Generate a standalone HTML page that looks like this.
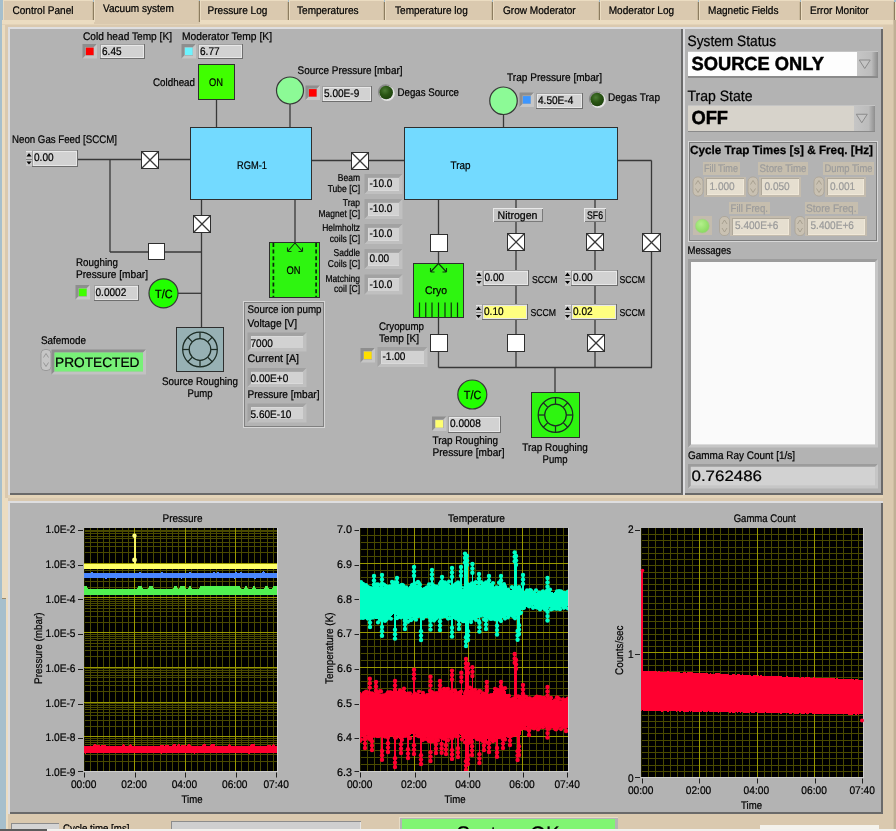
<!DOCTYPE html><html><head><meta charset="utf-8"><title>Vacuum system</title><style>html,body{margin:0;padding:0;background:#A6BFCC;overflow:hidden}svg{display:block;will-change:transform}text{font-family:'Liberation Sans','DejaVu Sans',sans-serif}</style></head><body>
<svg width="896" height="831" viewBox="0 0 896 831" shape-rendering="crispEdges" text-rendering="geometricPrecision">
<rect x="0" y="0" width="896" height="831" fill="#A6BFCC" />
<rect x="2" y="20" width="894" height="811" fill="#DAC9AF" />
<rect x="2" y="20" width="3" height="480" fill="#EBDCC1" />
<rect x="2" y="498" width="6" height="101" fill="#EBDCC1" />
<rect x="2" y="598" width="4" height="1" fill="#9A8A6C" />
<rect x="0" y="599" width="6" height="232" fill="#A6BFCC" />
<rect x="6" y="599" width="2" height="232" fill="#EBDCC1" />
<rect x="2" y="20" width="894" height="4" fill="#EBDCC1" />
<rect x="2" y="24" width="894" height="1" fill="#E2D2B7" />
<rect x="893" y="20" width="1" height="811" fill="#CFBFA4" />
<rect x="894" y="20" width="2" height="811" fill="#C0B096" />
<rect x="3" y="0" width="91" height="20" fill="#DAC9AF" />
<rect x="3" y="0" width="90" height="1" fill="#EBDCC1" />
<rect x="3" y="1" width="1" height="19" fill="#EBDCC1" />
<rect x="92" y="2" width="1" height="18" fill="#C9B99C" />
<rect x="93" y="2" width="1" height="18" fill="#8C7C60" />
<rect x="93" y="0" width="3" height="2" fill="#A6BFCC" />
<rect x="94" y="2" width="2" height="18" fill="#EBDCC1" />
<text transform="translate(12.5 13.7) scale(0.915 1)" font-size="11" stroke="#000" stroke-width="0.22" >Control Panel</text>
<rect x="94" y="0" width="106" height="24" fill="#DAC9AF" />
<rect x="94" y="0" width="1" height="22" fill="#EBDCC1" />
<rect x="198" y="1" width="1" height="21" fill="#C9B99C" />
<rect x="199" y="1" width="1" height="21" fill="#8C7C60" />
<rect x="199" y="0" width="2" height="1" fill="#A6BFCC" />
<text transform="translate(103 12.2) scale(0.915 1)" font-size="11" stroke="#000" stroke-width="0.22" >Vacuum system</text>
<rect x="200" y="0" width="89" height="20" fill="#DAC9AF" />
<rect x="200" y="0" width="88" height="1" fill="#EBDCC1" />
<rect x="200" y="1" width="1" height="19" fill="#EBDCC1" />
<rect x="287" y="2" width="1" height="18" fill="#C9B99C" />
<rect x="288" y="2" width="1" height="18" fill="#8C7C60" />
<rect x="288" y="0" width="3" height="2" fill="#A6BFCC" />
<rect x="289" y="2" width="2" height="18" fill="#EBDCC1" />
<text transform="translate(207.5 13.7) scale(0.915 1)" font-size="11" stroke="#000" stroke-width="0.22" >Pressure Log</text>
<rect x="289" y="0" width="96" height="20" fill="#DAC9AF" />
<rect x="289" y="0" width="95" height="1" fill="#EBDCC1" />
<rect x="289" y="1" width="1" height="19" fill="#EBDCC1" />
<rect x="383" y="2" width="1" height="18" fill="#C9B99C" />
<rect x="384" y="2" width="1" height="18" fill="#8C7C60" />
<rect x="384" y="0" width="3" height="2" fill="#A6BFCC" />
<rect x="385" y="2" width="2" height="18" fill="#EBDCC1" />
<text transform="translate(297 13.7) scale(0.915 1)" font-size="11" stroke="#000" stroke-width="0.22" >Temperatures</text>
<rect x="385" y="0" width="108" height="20" fill="#DAC9AF" />
<rect x="385" y="0" width="107" height="1" fill="#EBDCC1" />
<rect x="385" y="1" width="1" height="19" fill="#EBDCC1" />
<rect x="491" y="2" width="1" height="18" fill="#C9B99C" />
<rect x="492" y="2" width="1" height="18" fill="#8C7C60" />
<rect x="492" y="0" width="3" height="2" fill="#A6BFCC" />
<rect x="493" y="2" width="2" height="18" fill="#EBDCC1" />
<text transform="translate(395 13.7) scale(0.915 1)" font-size="11" stroke="#000" stroke-width="0.22" >Temperature log</text>
<rect x="493" y="0" width="107" height="20" fill="#DAC9AF" />
<rect x="493" y="0" width="106" height="1" fill="#EBDCC1" />
<rect x="493" y="1" width="1" height="19" fill="#EBDCC1" />
<rect x="598" y="2" width="1" height="18" fill="#C9B99C" />
<rect x="599" y="2" width="1" height="18" fill="#8C7C60" />
<rect x="599" y="0" width="3" height="2" fill="#A6BFCC" />
<rect x="600" y="2" width="2" height="18" fill="#EBDCC1" />
<text transform="translate(503 13.7) scale(0.915 1)" font-size="11" stroke="#000" stroke-width="0.22" >Grow Moderator</text>
<rect x="600" y="0" width="99" height="20" fill="#DAC9AF" />
<rect x="600" y="0" width="98" height="1" fill="#EBDCC1" />
<rect x="600" y="1" width="1" height="19" fill="#EBDCC1" />
<rect x="697" y="2" width="1" height="18" fill="#C9B99C" />
<rect x="698" y="2" width="1" height="18" fill="#8C7C60" />
<rect x="698" y="0" width="3" height="2" fill="#A6BFCC" />
<rect x="699" y="2" width="2" height="18" fill="#EBDCC1" />
<text transform="translate(608.7 13.7) scale(0.915 1)" font-size="11" stroke="#000" stroke-width="0.22" >Moderator Log</text>
<rect x="699" y="0" width="102" height="20" fill="#DAC9AF" />
<rect x="699" y="0" width="101" height="1" fill="#EBDCC1" />
<rect x="699" y="1" width="1" height="19" fill="#EBDCC1" />
<rect x="799" y="2" width="1" height="18" fill="#C9B99C" />
<rect x="800" y="2" width="1" height="18" fill="#8C7C60" />
<rect x="800" y="0" width="3" height="2" fill="#A6BFCC" />
<rect x="801" y="2" width="2" height="18" fill="#EBDCC1" />
<text transform="translate(708 13.7) scale(0.915 1)" font-size="11" stroke="#000" stroke-width="0.22" >Magnetic Fields</text>
<rect x="801" y="0" width="94" height="20" fill="#DAC9AF" />
<rect x="801" y="0" width="93" height="1" fill="#EBDCC1" />
<rect x="801" y="1" width="1" height="19" fill="#EBDCC1" />
<rect x="893" y="2" width="1" height="18" fill="#C9B99C" />
<rect x="894" y="2" width="1" height="18" fill="#8C7C60" />
<rect x="894" y="0" width="3" height="2" fill="#A6BFCC" />
<rect x="895" y="2" width="2" height="18" fill="#EBDCC1" />
<text transform="translate(810 13.7) scale(0.915 1)" font-size="11" stroke="#000" stroke-width="0.22" >Error Monitor</text>
<rect x="8" y="27" width="675" height="468" fill="#DEDEE0" />
<rect x="10" y="29" width="673" height="466" fill="#6A6A6A" />
<rect x="10" y="29" width="671" height="464" fill="#B3B3B3" />
<rect x="683" y="27" width="200" height="468" fill="#DEDEE0" />
<rect x="685" y="29" width="198" height="466" fill="#6A6A6A" />
<rect x="685" y="29" width="196" height="464" fill="#B3B3B3" />
<rect x="8" y="495" width="875" height="3" fill="#E4D4B8" />
<rect x="8" y="501" width="875" height="313" fill="#DEDEE0" />
<rect x="10" y="503" width="873" height="311" fill="#6A6A6A" />
<rect x="10" y="503" width="871" height="309" fill="#B3B3B3" />
<defs><radialGradient id="ledg" cx="0.4" cy="0.35" r="0.7"><stop offset="0" stop-color="#4C7C34"/><stop offset="0.5" stop-color="#2A5614"/><stop offset="1" stop-color="#1C400C"/></radialGradient><radialGradient id="ledl" cx="0.4" cy="0.35" r="0.7"><stop offset="0" stop-color="#B4F08C"/><stop offset="1" stop-color="#86D85C"/></radialGradient></defs>
<line x1="216.5" y1="100" x2="216.5" y2="127" stroke="#383838" stroke-width="1.3" shape-rendering="geometricPrecision"/>
<line x1="290" y1="104" x2="290" y2="127" stroke="#383838" stroke-width="1.3" shape-rendering="geometricPrecision"/>
<line x1="503.5" y1="114" x2="503.5" y2="127" stroke="#383838" stroke-width="1.3" shape-rendering="geometricPrecision"/>
<line x1="78" y1="159.5" x2="191" y2="159.5" stroke="#383838" stroke-width="1.3" shape-rendering="geometricPrecision"/>
<line x1="110" y1="159.5" x2="110" y2="252" stroke="#383838" stroke-width="1.3" shape-rendering="geometricPrecision"/>
<line x1="110" y1="252" x2="201.5" y2="252" stroke="#383838" stroke-width="1.3" shape-rendering="geometricPrecision"/>
<line x1="201.5" y1="199" x2="201.5" y2="327" stroke="#383838" stroke-width="1.3" shape-rendering="geometricPrecision"/>
<line x1="178" y1="293.3" x2="201.5" y2="293.3" stroke="#383838" stroke-width="1.3" shape-rendering="geometricPrecision"/>
<line x1="311" y1="160.5" x2="405" y2="160.5" stroke="#383838" stroke-width="1.3" shape-rendering="geometricPrecision"/>
<line x1="295" y1="199" x2="295" y2="243" stroke="#383838" stroke-width="1.3" shape-rendering="geometricPrecision"/>
<line x1="438.5" y1="199" x2="438.5" y2="367.5" stroke="#383838" stroke-width="1.3" shape-rendering="geometricPrecision"/>
<line x1="516" y1="199" x2="516" y2="367.5" stroke="#383838" stroke-width="1.3" shape-rendering="geometricPrecision"/>
<line x1="595" y1="199" x2="595" y2="367.5" stroke="#383838" stroke-width="1.3" shape-rendering="geometricPrecision"/>
<line x1="617" y1="160.5" x2="651.5" y2="160.5" stroke="#383838" stroke-width="1.3" shape-rendering="geometricPrecision"/>
<line x1="651.5" y1="160.5" x2="651.5" y2="367.5" stroke="#383838" stroke-width="1.3" shape-rendering="geometricPrecision"/>
<line x1="438.5" y1="367.5" x2="652" y2="367.5" stroke="#383838" stroke-width="1.3" shape-rendering="geometricPrecision"/>
<line x1="555" y1="367.5" x2="555" y2="392" stroke="#383838" stroke-width="1.3" shape-rendering="geometricPrecision"/>
<text x="83" y="40.2" font-size="11" stroke="#000" stroke-width="0.22" textLength="89" lengthAdjust="spacingAndGlyphs" >Cold head Temp [K]</text>
<polygon points="82.5,44 97,44 94,47 85.5,47 85.5,55.5 82.5,58.5" fill="#8E8E8E" shape-rendering="geometricPrecision"/>
<polygon points="97,58.5 97,44 94,47 94,55.5 85.5,55.5 82.5,58.5" fill="#C6C6C6" shape-rendering="geometricPrecision"/>
<rect x="85.5" y="47" width="8.5" height="8.5" fill="#B0B0B0" />
<rect x="85.9" y="47.6" width="7.7" height="7.5" fill="#FF0000" shape-rendering="geometricPrecision"/>
<rect x="100" y="44" width="45" height="15" fill="#6E6E6E" />
<rect x="100" y="44" width="44" height="14" fill="#A0A0A0" />
<rect x="101" y="45" width="43" height="13" fill="#E8E8E8" />
<rect x="102" y="46" width="41" height="11" fill="#D2D2D2" />
<text transform="translate(102 54.7) scale(0.915 1)" font-size="11" stroke="#000" stroke-width="0.22" >6.45</text>
<text x="182" y="40.2" font-size="11" stroke="#000" stroke-width="0.22" textLength="90" lengthAdjust="spacingAndGlyphs" >Moderator Temp [K]</text>
<polygon points="181.5,44 196,44 193,47 184.5,47 184.5,55.5 181.5,58.5" fill="#8E8E8E" shape-rendering="geometricPrecision"/>
<polygon points="196,58.5 196,44 193,47 193,55.5 184.5,55.5 181.5,58.5" fill="#C6C6C6" shape-rendering="geometricPrecision"/>
<rect x="184.5" y="47" width="8.5" height="8.5" fill="#B0B0B0" />
<rect x="184.9" y="47.6" width="7.7" height="7.5" fill="#6CF4FF" shape-rendering="geometricPrecision"/>
<rect x="198" y="44" width="45" height="15" fill="#6E6E6E" />
<rect x="198" y="44" width="44" height="14" fill="#A0A0A0" />
<rect x="199" y="45" width="43" height="13" fill="#E8E8E8" />
<rect x="200" y="46" width="41" height="11" fill="#D2D2D2" />
<text transform="translate(200 54.7) scale(0.915 1)" font-size="11" stroke="#000" stroke-width="0.22" >6.77</text>
<text x="153" y="85.7" font-size="11" stroke="#000" stroke-width="0.22" textLength="42" lengthAdjust="spacingAndGlyphs" >Coldhead</text>
<rect x="198" y="64" width="37" height="36" fill="#2E2E2E" />
<rect x="199" y="65" width="35" height="34" fill="#40FF00" />
<text x="209" y="85.7" font-size="11" stroke="#000" stroke-width="0.22" textLength="14" lengthAdjust="spacingAndGlyphs" >ON</text>
<circle cx="290" cy="90.5" r="13.5" fill="#8CFA96" stroke="#383838" stroke-width="1.2" shape-rendering="geometricPrecision"/>
<text x="297.5" y="73.7" font-size="11" stroke="#000" stroke-width="0.22" textLength="105" lengthAdjust="spacingAndGlyphs" >Source Pressure [mbar]</text>
<polygon points="305.5,85.5 320,85.5 317,88.5 308.5,88.5 308.5,97 305.5,100" fill="#8E8E8E" shape-rendering="geometricPrecision"/>
<polygon points="320,100 320,85.5 317,88.5 317,97 308.5,97 305.5,100" fill="#C6C6C6" shape-rendering="geometricPrecision"/>
<rect x="308.5" y="88.5" width="8.5" height="8.5" fill="#B0B0B0" />
<rect x="308.9" y="89.1" width="7.7" height="7.5" fill="#FF0000" shape-rendering="geometricPrecision"/>
<rect x="322" y="85.5" width="50" height="16.5" fill="#6E6E6E" />
<rect x="322" y="85.5" width="49" height="15.5" fill="#A0A0A0" />
<rect x="323" y="86.5" width="48" height="14.5" fill="#E8E8E8" />
<rect x="324" y="87.5" width="46" height="12.5" fill="#D2D2D2" />
<text transform="translate(324 96.95) scale(0.915 1)" font-size="11" stroke="#000" stroke-width="0.22" >5.00E-9</text>
<circle cx="385.6" cy="91.9" r="7.7" fill="#8A8A8A" shape-rendering="geometricPrecision"/>
<circle cx="387.1" cy="93.4" r="7.7" fill="#E4E4E4" shape-rendering="geometricPrecision"/>
<circle cx="386.2" cy="92.5" r="6.8" fill="url(#ledg)" shape-rendering="geometricPrecision"/>
<text x="397.5" y="96.2" font-size="11" stroke="#000" stroke-width="0.22" textLength="61.5" lengthAdjust="spacingAndGlyphs" >Degas Source</text>
<circle cx="503.5" cy="100.75" r="13.75" fill="#8CFA96" stroke="#383838" stroke-width="1.2" shape-rendering="geometricPrecision"/>
<text x="507" y="81.2" font-size="11" stroke="#000" stroke-width="0.22" textLength="95" lengthAdjust="spacingAndGlyphs" >Trap Pressure [mbar]</text>
<polygon points="519.5,92.5 534,92.5 531,95.5 522.5,95.5 522.5,104 519.5,107" fill="#8E8E8E" shape-rendering="geometricPrecision"/>
<polygon points="534,107 534,92.5 531,95.5 531,104 522.5,104 519.5,107" fill="#C6C6C6" shape-rendering="geometricPrecision"/>
<rect x="522.5" y="95.5" width="8.5" height="8.5" fill="#B0B0B0" />
<rect x="522.9" y="96.1" width="7.7" height="7.5" fill="#3C96FF" shape-rendering="geometricPrecision"/>
<rect x="536" y="92.5" width="46.5" height="16.5" fill="#6E6E6E" />
<rect x="536" y="92.5" width="45.5" height="15.5" fill="#A0A0A0" />
<rect x="537" y="93.5" width="44.5" height="14.5" fill="#E8E8E8" />
<rect x="538" y="94.5" width="42.5" height="12.5" fill="#D2D2D2" />
<text transform="translate(538 103.95) scale(0.915 1)" font-size="11" stroke="#000" stroke-width="0.22" >4.50E-4</text>
<circle cx="596.6" cy="98.9" r="7.7" fill="#8A8A8A" shape-rendering="geometricPrecision"/>
<circle cx="598.1" cy="100.4" r="7.7" fill="#E4E4E4" shape-rendering="geometricPrecision"/>
<circle cx="597.2" cy="99.5" r="6.8" fill="url(#ledg)" shape-rendering="geometricPrecision"/>
<text x="608" y="101.2" font-size="11" stroke="#000" stroke-width="0.22" textLength="52" lengthAdjust="spacingAndGlyphs" >Degas Trap</text>
<rect x="190" y="127" width="122" height="73" fill="#2E2E2E" />
<rect x="191" y="128" width="120" height="71" fill="#73DAFF" />
<text x="252" y="168.7" font-size="11" text-anchor="middle" stroke="#000" stroke-width="0.22" textLength="30" lengthAdjust="spacingAndGlyphs" >RGM-1</text>
<rect x="404" y="127" width="214" height="73" fill="#2E2E2E" />
<rect x="405" y="128" width="212" height="71" fill="#73DAFF" />
<text x="450.5" y="168.7" font-size="11" stroke="#000" stroke-width="0.22" textLength="20" lengthAdjust="spacingAndGlyphs" >Trap</text>
<text x="12" y="143.2" font-size="11" stroke="#000" stroke-width="0.22" textLength="105" lengthAdjust="spacingAndGlyphs" >Neon Gas Feed [SCCM]</text>
<rect x="26" y="151" width="6" height="15" fill="#C8C8C8" />
<rect x="26" y="151" width="6" height="1" fill="#E6E6E6" />
<rect x="26" y="158.5" width="6" height="1" fill="#808080" />
<path d="M26.5 156.5 L29 153 L31.5 156.5 Z M26.5 161.5 L29 164.5 L31.5 161.5 Z" fill="#000" shape-rendering="geometricPrecision"/>
<rect x="32" y="150" width="45.5" height="16.5" fill="#6E6E6E" />
<rect x="32" y="150" width="44.5" height="15.5" fill="#A0A0A0" />
<rect x="33" y="151" width="43.5" height="14.5" fill="#E8E8E8" />
<rect x="34" y="152" width="41.5" height="12.5" fill="#D2D2D2" />
<text transform="translate(34 161.45) scale(0.915 1)" font-size="11" stroke="#000" stroke-width="0.22" >0.00</text>
<rect x="141" y="151" width="18" height="18" fill="#2E2E2E" />
<rect x="142" y="152" width="16" height="16" fill="#FFFFFF" />
<line x1="142" y1="152" x2="158" y2="168" stroke="#383838" stroke-width="1.2" shape-rendering="geometricPrecision"/>
<line x1="158" y1="152" x2="142" y2="168" stroke="#383838" stroke-width="1.2" shape-rendering="geometricPrecision"/>
<rect x="193" y="215" width="18" height="18" fill="#2E2E2E" />
<rect x="194" y="216" width="16" height="16" fill="#FFFFFF" />
<line x1="194" y1="216" x2="210" y2="232" stroke="#383838" stroke-width="1.2" shape-rendering="geometricPrecision"/>
<line x1="210" y1="216" x2="194" y2="232" stroke="#383838" stroke-width="1.2" shape-rendering="geometricPrecision"/>
<rect x="148" y="243" width="17" height="17" fill="#2E2E2E" />
<rect x="149" y="244" width="15" height="15" fill="#FFFFFF" />
<rect x="351" y="152" width="18" height="18" fill="#2E2E2E" />
<rect x="352" y="153" width="16" height="16" fill="#FFFFFF" />
<line x1="352" y1="153" x2="368" y2="169" stroke="#383838" stroke-width="1.2" shape-rendering="geometricPrecision"/>
<line x1="368" y1="153" x2="352" y2="169" stroke="#383838" stroke-width="1.2" shape-rendering="geometricPrecision"/>
<text x="76" y="266.2" font-size="11" stroke="#000" stroke-width="0.22" textLength="42" lengthAdjust="spacingAndGlyphs" >Roughing</text>
<text x="76" y="278.2" font-size="11" stroke="#000" stroke-width="0.22" textLength="72" lengthAdjust="spacingAndGlyphs" >Pressure [mbar]</text>
<polygon points="75.5,285 90,285 87,288 78.5,288 78.5,296.5 75.5,299.5" fill="#8E8E8E" shape-rendering="geometricPrecision"/>
<polygon points="90,299.5 90,285 87,288 87,296.5 78.5,296.5 75.5,299.5" fill="#C6C6C6" shape-rendering="geometricPrecision"/>
<rect x="78.5" y="288" width="8.5" height="8.5" fill="#B0B0B0" />
<rect x="78.9" y="288.6" width="7.7" height="7.5" fill="#40FF00" shape-rendering="geometricPrecision"/>
<rect x="93.5" y="284.5" width="45.5" height="16" fill="#6E6E6E" />
<rect x="93.5" y="284.5" width="44.5" height="15" fill="#A0A0A0" />
<rect x="94.5" y="285.5" width="43.5" height="14" fill="#E8E8E8" />
<rect x="95.5" y="286.5" width="41.5" height="12" fill="#D2D2D2" />
<text transform="translate(95.5 295.7) scale(0.915 1)" font-size="11" stroke="#000" stroke-width="0.22" >0.0002</text>
<circle cx="163.5" cy="293.3" r="14.5" fill="#22FF00" stroke="#383838" stroke-width="1.2" shape-rendering="geometricPrecision"/>
<text x="163.8" y="298.2" font-size="12" text-anchor="middle" stroke="#000" stroke-width="0.22" textLength="17.5" lengthAdjust="spacingAndGlyphs" >T/C</text>
<text x="41" y="344.2" font-size="11" stroke="#000" stroke-width="0.22" textLength="45" lengthAdjust="spacingAndGlyphs" >Safemode</text>
<rect x="41" y="349.5" width="10" height="21" rx="4" fill="#C6C6C6" stroke="#909090" stroke-width="0.8" shape-rendering="geometricPrecision"/>
<path d="M43.5 357.5 L46 353.5 L48.5 357.5 M43.5 362.5 L46 366.5 L48.5 362.5" fill="none" stroke="#8A8A8A" stroke-width="0.8" shape-rendering="geometricPrecision"/>
<polygon points="51.5,349.5 146,349.5 143,352.5 54.5,352.5 54.5,371.5 51.5,374.5" fill="#8E8E8E" shape-rendering="geometricPrecision"/>
<polygon points="146,374.5 146,349.5 143,352.5 143,371.5 54.5,371.5 51.5,374.5" fill="#C2C2C2" shape-rendering="geometricPrecision"/>
<rect x="54.5" y="352.5" width="88.5" height="19" fill="#78F078" shape-rendering="geometricPrecision"/>
<text x="55" y="367" font-size="13.5" stroke="#000" stroke-width="0.22" textLength="84.5" lengthAdjust="spacingAndGlyphs" >PROTECTED</text>
<rect x="176" y="327" width="48" height="45" fill="#2E2E2E" />
<rect x="177" y="328" width="46" height="43" fill="#97B1B4" />
<g fill="none" stroke="#1C2C24" stroke-width="1.25" shape-rendering="geometricPrecision"><circle cx="200" cy="349.5" r="17.3"/><circle cx="200" cy="349.5" r="10.8"/>
<line x1="200.00" y1="360.30" x2="200.00" y2="366.80"/>
<line x1="192.36" y1="357.14" x2="187.77" y2="361.73"/>
<line x1="189.20" y1="349.50" x2="182.70" y2="349.50"/>
<line x1="192.36" y1="341.86" x2="187.77" y2="337.27"/>
<line x1="200.00" y1="338.70" x2="200.00" y2="332.20"/>
<line x1="207.64" y1="341.86" x2="212.23" y2="337.27"/>
<line x1="210.80" y1="349.50" x2="217.30" y2="349.50"/>
<line x1="207.64" y1="357.14" x2="212.23" y2="361.73"/>
</g>
<text x="200" y="385.2" font-size="11" text-anchor="middle" stroke="#000" stroke-width="0.22" textLength="76" lengthAdjust="spacingAndGlyphs" >Source Roughing</text>
<text x="200" y="397.2" font-size="11" text-anchor="middle" stroke="#000" stroke-width="0.22" textLength="25" lengthAdjust="spacingAndGlyphs" >Pump</text>
<rect x="269" y="242" width="51" height="56" fill="#2E2E2E" />
<rect x="270" y="243" width="49" height="54" fill="#2EF510" />
<line x1="273.4" y1="243" x2="273.4" y2="297" stroke="#0A280A" stroke-width="1.7" stroke-dasharray="4 2.6" shape-rendering="geometricPrecision"/>
<line x1="316.1" y1="243" x2="316.1" y2="297" stroke="#0A280A" stroke-width="1.7" stroke-dasharray="4 2.6" shape-rendering="geometricPrecision"/>
<path d="M295 243 L287.5 251.5 M295 243 L302.5 251.5 M287.5 251.5 l0 -4 M287.5 251.5 l4 0 M302.5 251.5 l0 -4 M302.5 251.5 l-4 0" fill="none" stroke="#103010" stroke-width="1.1" shape-rendering="geometricPrecision"/>
<text x="293.5" y="274.2" font-size="11" text-anchor="middle" stroke="#000" stroke-width="0.22" textLength="14" lengthAdjust="spacingAndGlyphs" >ON</text>
<rect x="242.5" y="300.5" width="82.5" height="127.5" fill="#D6D6D6" />
<rect x="243.5" y="301.5" width="80.5" height="125.5" fill="#808080" />
<rect x="244.5" y="302.5" width="78.5" height="123.5" fill="#B3B3B3" />
<text x="247.5" y="313.2" font-size="11" stroke="#000" stroke-width="0.22" textLength="74" lengthAdjust="spacingAndGlyphs" >Source ion pump</text>
<text x="247.5" y="326.7" font-size="11" stroke="#000" stroke-width="0.22" textLength="49.5" lengthAdjust="spacingAndGlyphs" >Voltage [V]</text>
<polygon points="247.5,332.5 306.5,332.5 303,336 251,336 251,348 247.5,351.5" fill="#A2A2A2" shape-rendering="geometricPrecision"/>
<polygon points="306.5,351.5 306.5,332.5 303,336 303,348 251,348 247.5,351.5" fill="#C0C0C0" shape-rendering="geometricPrecision"/>
<rect x="251" y="336" width="52" height="12" fill="#DADADA" />
<rect x="251.5" y="336.5" width="51" height="11" fill="#D2D2D2" />
<text transform="translate(250.5 346.6) scale(0.915 1)" font-size="11" stroke="#000" stroke-width="0.22" >7000</text>
<text x="247.5" y="362.2" font-size="11" stroke="#000" stroke-width="0.22" textLength="51.5" lengthAdjust="spacingAndGlyphs" >Current [A]</text>
<polygon points="247.5,368 306.5,368 303,371.5 251,371.5 251,383.5 247.5,387" fill="#A2A2A2" shape-rendering="geometricPrecision"/>
<polygon points="306.5,387 306.5,368 303,371.5 303,383.5 251,383.5 247.5,387" fill="#C0C0C0" shape-rendering="geometricPrecision"/>
<rect x="251" y="371.5" width="52" height="12" fill="#DADADA" />
<rect x="251.5" y="372" width="51" height="11" fill="#D2D2D2" />
<text transform="translate(250.5 382.1) scale(0.915 1)" font-size="11" stroke="#000" stroke-width="0.22" >0.00E+0</text>
<text x="247.5" y="398" font-size="11" stroke="#000" stroke-width="0.22" textLength="72" lengthAdjust="spacingAndGlyphs" >Pressure [mbar]</text>
<polygon points="247.5,403.5 306.5,403.5 303,407 251,407 251,419 247.5,422.5" fill="#A2A2A2" shape-rendering="geometricPrecision"/>
<polygon points="306.5,422.5 306.5,403.5 303,407 303,419 251,419 247.5,422.5" fill="#C0C0C0" shape-rendering="geometricPrecision"/>
<rect x="251" y="407" width="52" height="12" fill="#DADADA" />
<rect x="251.5" y="407.5" width="51" height="11" fill="#D2D2D2" />
<text transform="translate(250.5 417.6) scale(0.915 1)" font-size="11" stroke="#000" stroke-width="0.22" >5.60E-10</text>
<text transform="translate(360 181.2) scale(0.85 1)" font-size="10" text-anchor="end" stroke="#000" stroke-width="0.22" >Beam</text>
<text transform="translate(360 191.7) scale(0.85 1)" font-size="10" text-anchor="end" stroke="#000" stroke-width="0.22" >Tube [C]</text>
<polygon points="364.5,174 402.5,174 399,177.5 368,177.5 368,190.5 364.5,194" fill="#A2A2A2" shape-rendering="geometricPrecision"/>
<polygon points="402.5,194 402.5,174 399,177.5 399,190.5 368,190.5 364.5,194" fill="#C0C0C0" shape-rendering="geometricPrecision"/>
<rect x="368" y="177.5" width="31" height="13" fill="#DADADA" />
<rect x="368.5" y="178" width="30" height="12" fill="#D2D2D2" />
<text transform="translate(369.5 187.2) scale(0.915 1)" font-size="11" stroke="#000" stroke-width="0.22" >-10.0</text>
<text transform="translate(360 206.2) scale(0.85 1)" font-size="10" text-anchor="end" stroke="#000" stroke-width="0.22" >Trap</text>
<text transform="translate(360 216.7) scale(0.85 1)" font-size="10" text-anchor="end" stroke="#000" stroke-width="0.22" >Magnet [C]</text>
<polygon points="364.5,199 402.5,199 399,202.5 368,202.5 368,215.5 364.5,219" fill="#A2A2A2" shape-rendering="geometricPrecision"/>
<polygon points="402.5,219 402.5,199 399,202.5 399,215.5 368,215.5 364.5,219" fill="#C0C0C0" shape-rendering="geometricPrecision"/>
<rect x="368" y="202.5" width="31" height="13" fill="#DADADA" />
<rect x="368.5" y="203" width="30" height="12" fill="#D2D2D2" />
<text transform="translate(369.5 212.2) scale(0.915 1)" font-size="11" stroke="#000" stroke-width="0.22" >-10.0</text>
<text transform="translate(360 231.2) scale(0.85 1)" font-size="10" text-anchor="end" stroke="#000" stroke-width="0.22" >Helmholtz</text>
<text transform="translate(360 241.7) scale(0.85 1)" font-size="10" text-anchor="end" stroke="#000" stroke-width="0.22" >coils [C]</text>
<polygon points="364.5,224 402.5,224 399,227.5 368,227.5 368,240.5 364.5,244" fill="#A2A2A2" shape-rendering="geometricPrecision"/>
<polygon points="402.5,244 402.5,224 399,227.5 399,240.5 368,240.5 364.5,244" fill="#C0C0C0" shape-rendering="geometricPrecision"/>
<rect x="368" y="227.5" width="31" height="13" fill="#DADADA" />
<rect x="368.5" y="228" width="30" height="12" fill="#D2D2D2" />
<text transform="translate(369.5 237.2) scale(0.915 1)" font-size="11" stroke="#000" stroke-width="0.22" >-10.0</text>
<text transform="translate(360 256.2) scale(0.85 1)" font-size="10" text-anchor="end" stroke="#000" stroke-width="0.22" >Saddle</text>
<text transform="translate(360 266.7) scale(0.85 1)" font-size="10" text-anchor="end" stroke="#000" stroke-width="0.22" >Coils [C]</text>
<polygon points="364.5,249 402.5,249 399,252.5 368,252.5 368,265.5 364.5,269" fill="#A2A2A2" shape-rendering="geometricPrecision"/>
<polygon points="402.5,269 402.5,249 399,252.5 399,265.5 368,265.5 364.5,269" fill="#C0C0C0" shape-rendering="geometricPrecision"/>
<rect x="368" y="252.5" width="31" height="13" fill="#DADADA" />
<rect x="368.5" y="253" width="30" height="12" fill="#D2D2D2" />
<text transform="translate(369.5 262.2) scale(0.915 1)" font-size="11" stroke="#000" stroke-width="0.22" >0.00</text>
<text transform="translate(360 281.7) scale(0.85 1)" font-size="10" text-anchor="end" stroke="#000" stroke-width="0.22" >Matching</text>
<text transform="translate(360 292.2) scale(0.85 1)" font-size="10" text-anchor="end" stroke="#000" stroke-width="0.22" >coil [C]</text>
<polygon points="364.5,274.5 402.5,274.5 399,278 368,278 368,291 364.5,294.5" fill="#A2A2A2" shape-rendering="geometricPrecision"/>
<polygon points="402.5,294.5 402.5,274.5 399,278 399,291 368,291 364.5,294.5" fill="#C0C0C0" shape-rendering="geometricPrecision"/>
<rect x="368" y="278" width="31" height="13" fill="#DADADA" />
<rect x="368.5" y="278.5" width="30" height="12" fill="#D2D2D2" />
<text transform="translate(369.5 287.7) scale(0.915 1)" font-size="11" stroke="#000" stroke-width="0.22" >-10.0</text>
<rect x="430" y="234" width="18" height="18" fill="#2E2E2E" />
<rect x="431" y="235" width="16" height="16" fill="#FFFFFF" />
<rect x="413" y="263" width="51" height="55" fill="#2E2E2E" />
<rect x="414" y="264" width="49" height="53" fill="#2EF510" />
<line x1="419.5" y1="302.5" x2="419.5" y2="317" stroke="#103010" stroke-width="1.2" shape-rendering="geometricPrecision"/>
<line x1="425.75" y1="302.5" x2="425.75" y2="317" stroke="#103010" stroke-width="1.2" shape-rendering="geometricPrecision"/>
<line x1="432" y1="302.5" x2="432" y2="317" stroke="#103010" stroke-width="1.2" shape-rendering="geometricPrecision"/>
<line x1="438.5" y1="302.5" x2="438.5" y2="317" stroke="#103010" stroke-width="1.2" shape-rendering="geometricPrecision"/>
<line x1="445" y1="302.5" x2="445" y2="317" stroke="#103010" stroke-width="1.2" shape-rendering="geometricPrecision"/>
<line x1="451.25" y1="302.5" x2="451.25" y2="317" stroke="#103010" stroke-width="1.2" shape-rendering="geometricPrecision"/>
<line x1="457.5" y1="302.5" x2="457.5" y2="317" stroke="#103010" stroke-width="1.2" shape-rendering="geometricPrecision"/>
<path d="M438.5 263.5 L430.5 272 M438.5 263.5 L446.5 272 M430.5 272 l0 -4 M430.5 272 l4 0 M446.5 272 l0 -4 M446.5 272 l-4 0" fill="none" stroke="#103010" stroke-width="1.1" shape-rendering="geometricPrecision"/>
<text x="436" y="294.2" font-size="11" text-anchor="middle" stroke="#000" stroke-width="0.22" textLength="22" lengthAdjust="spacingAndGlyphs" >Cryo</text>
<rect x="430" y="334" width="18" height="18" fill="#2E2E2E" />
<rect x="431" y="335" width="16" height="16" fill="#FFFFFF" />
<rect x="507" y="334" width="18" height="18" fill="#2E2E2E" />
<rect x="508" y="335" width="16" height="16" fill="#FFFFFF" />
<rect x="587" y="334" width="18" height="18" fill="#2E2E2E" />
<rect x="588" y="335" width="16" height="16" fill="#FFFFFF" />
<line x1="588" y1="335" x2="604" y2="351" stroke="#383838" stroke-width="1.2" shape-rendering="geometricPrecision"/>
<line x1="604" y1="335" x2="588" y2="351" stroke="#383838" stroke-width="1.2" shape-rendering="geometricPrecision"/>
<rect x="507" y="233" width="18" height="18" fill="#2E2E2E" />
<rect x="508" y="234" width="16" height="16" fill="#FFFFFF" />
<line x1="508" y1="234" x2="524" y2="250" stroke="#383838" stroke-width="1.2" shape-rendering="geometricPrecision"/>
<line x1="524" y1="234" x2="508" y2="250" stroke="#383838" stroke-width="1.2" shape-rendering="geometricPrecision"/>
<rect x="586" y="233" width="18" height="18" fill="#2E2E2E" />
<rect x="587" y="234" width="16" height="16" fill="#FFFFFF" />
<line x1="587" y1="234" x2="603" y2="250" stroke="#383838" stroke-width="1.2" shape-rendering="geometricPrecision"/>
<line x1="603" y1="234" x2="587" y2="250" stroke="#383838" stroke-width="1.2" shape-rendering="geometricPrecision"/>
<rect x="642" y="233" width="19" height="19" fill="#2E2E2E" />
<rect x="643" y="234" width="17" height="17" fill="#FFFFFF" />
<line x1="643" y1="234" x2="660" y2="251" stroke="#383838" stroke-width="1.2" shape-rendering="geometricPrecision"/>
<line x1="660" y1="234" x2="643" y2="251" stroke="#383838" stroke-width="1.2" shape-rendering="geometricPrecision"/>
<rect x="493" y="208" width="49.5" height="14" fill="#E8E8E8" />
<rect x="494" y="209" width="48.5" height="13" fill="#7A7A7A" />
<rect x="494" y="209" width="47.5" height="12" fill="#C4C4C4" />
<text x="517.5" y="219.2" font-size="11" text-anchor="middle" stroke="#000" stroke-width="0.22" textLength="40" lengthAdjust="spacingAndGlyphs" >Nitrogen</text>
<rect x="584" y="208" width="22" height="14" fill="#E8E8E8" />
<rect x="585" y="209" width="21" height="13" fill="#7A7A7A" />
<rect x="585" y="209" width="20" height="12" fill="#C4C4C4" />
<text x="595" y="219.2" font-size="11" text-anchor="middle" stroke="#000" stroke-width="0.22" textLength="16" lengthAdjust="spacingAndGlyphs" >SF6</text>
<rect x="476" y="270.5" width="6" height="15" fill="#C8C8C8" />
<rect x="476" y="270.5" width="6" height="1" fill="#E6E6E6" />
<rect x="476" y="278" width="6" height="1" fill="#808080" />
<path d="M476.5 276.0 L479 272.5 L481.5 276.0 Z M476.5 281.0 L479 284.0 L481.5 281.0 Z" fill="#000" shape-rendering="geometricPrecision"/>
<rect x="482.5" y="269.5" width="46.5" height="16.5" fill="#6E6E6E" />
<rect x="482.5" y="269.5" width="45.5" height="15.5" fill="#A0A0A0" />
<rect x="483.5" y="270.5" width="44.5" height="14.5" fill="#E8E8E8" />
<rect x="484.5" y="271.5" width="42.5" height="12.5" fill="#D2D2D2" />
<text transform="translate(484.5 280.95) scale(0.915 1)" font-size="11" stroke="#000" stroke-width="0.22" >0.00</text>
<text x="532" y="283.2" font-size="10" stroke="#000" stroke-width="0.22" textLength="25.5" lengthAdjust="spacingAndGlyphs" >SCCM</text>
<rect x="564.5" y="270.5" width="6" height="15" fill="#C8C8C8" />
<rect x="564.5" y="270.5" width="6" height="1" fill="#E6E6E6" />
<rect x="564.5" y="278" width="6" height="1" fill="#808080" />
<path d="M565.0 276.0 L567.5 272.5 L570.0 276.0 Z M565.0 281.0 L567.5 284.0 L570.0 281.0 Z" fill="#000" shape-rendering="geometricPrecision"/>
<rect x="571" y="269.5" width="46.5" height="16.5" fill="#6E6E6E" />
<rect x="571" y="269.5" width="45.5" height="15.5" fill="#A0A0A0" />
<rect x="572" y="270.5" width="44.5" height="14.5" fill="#E8E8E8" />
<rect x="573" y="271.5" width="42.5" height="12.5" fill="#D2D2D2" />
<text transform="translate(573 280.95) scale(0.915 1)" font-size="11" stroke="#000" stroke-width="0.22" >0.00</text>
<text x="619.5" y="283.2" font-size="10" stroke="#000" stroke-width="0.22" textLength="25.5" lengthAdjust="spacingAndGlyphs" >SCCM</text>
<rect x="475.5" y="304.5" width="6" height="15" fill="#C8C8C8" />
<rect x="475.5" y="304.5" width="6" height="1" fill="#E6E6E6" />
<rect x="475.5" y="312" width="6" height="1" fill="#808080" />
<path d="M476.0 310.0 L478.5 306.5 L481.0 310.0 Z M476.0 315.0 L478.5 318.0 L481.0 315.0 Z" fill="#000" shape-rendering="geometricPrecision"/>
<rect x="482" y="303.5" width="46" height="16.5" fill="#6E6E6E" />
<rect x="482" y="303.5" width="45" height="15.5" fill="#A0A0A0" />
<rect x="483" y="304.5" width="44" height="14.5" fill="#E8E8E8" />
<rect x="484" y="305.5" width="42" height="12.5" fill="#FFFF80" />
<text transform="translate(484 314.95) scale(0.915 1)" font-size="11" stroke="#000" stroke-width="0.22" >0.10</text>
<text x="530.5" y="316.2" font-size="10" stroke="#000" stroke-width="0.22" textLength="25.5" lengthAdjust="spacingAndGlyphs" >SCCM</text>
<rect x="564.5" y="304.5" width="6" height="15" fill="#C8C8C8" />
<rect x="564.5" y="304.5" width="6" height="1" fill="#E6E6E6" />
<rect x="564.5" y="312" width="6" height="1" fill="#808080" />
<path d="M565.0 310.0 L567.5 306.5 L570.0 310.0 Z M565.0 315.0 L567.5 318.0 L570.0 315.0 Z" fill="#000" shape-rendering="geometricPrecision"/>
<rect x="571" y="303.5" width="46" height="16.5" fill="#6E6E6E" />
<rect x="571" y="303.5" width="45" height="15.5" fill="#A0A0A0" />
<rect x="572" y="304.5" width="44" height="14.5" fill="#E8E8E8" />
<rect x="573" y="305.5" width="42" height="12.5" fill="#FFFF80" />
<text transform="translate(573 314.95) scale(0.915 1)" font-size="11" stroke="#000" stroke-width="0.22" >0.02</text>
<text x="619.5" y="316.2" font-size="10" stroke="#000" stroke-width="0.22" textLength="25.5" lengthAdjust="spacingAndGlyphs" >SCCM</text>
<text x="379" y="330.2" font-size="11" stroke="#000" stroke-width="0.22" textLength="45" lengthAdjust="spacingAndGlyphs" >Cryopump</text>
<text x="379" y="342.2" font-size="11" stroke="#000" stroke-width="0.22" textLength="40" lengthAdjust="spacingAndGlyphs" >Temp [K]</text>
<polygon points="360.5,348 375,348 372,351 363.5,351 363.5,359.5 360.5,362.5" fill="#8E8E8E" shape-rendering="geometricPrecision"/>
<polygon points="375,362.5 375,348 372,351 372,359.5 363.5,359.5 360.5,362.5" fill="#C6C6C6" shape-rendering="geometricPrecision"/>
<rect x="363.5" y="351" width="8.5" height="8.5" fill="#B0B0B0" />
<rect x="363.9" y="351.6" width="7.7" height="7.5" fill="#FFE000" shape-rendering="geometricPrecision"/>
<polygon points="377.5,347 427.5,347 424,350.5 381,350.5 381,363.5 377.5,367" fill="#A2A2A2" shape-rendering="geometricPrecision"/>
<polygon points="427.5,367 427.5,347 424,350.5 424,363.5 381,363.5 377.5,367" fill="#C0C0C0" shape-rendering="geometricPrecision"/>
<rect x="381" y="350.5" width="43" height="13" fill="#DADADA" />
<rect x="381.5" y="351" width="42" height="12" fill="#D2D2D2" />
<text transform="translate(382.5 360.2) scale(0.915 1)" font-size="11" stroke="#000" stroke-width="0.22" >-1.00</text>
<circle cx="472.3" cy="394.5" r="14.5" fill="#22FF00" stroke="#383838" stroke-width="1.2" shape-rendering="geometricPrecision"/>
<text x="472.6" y="399.4" font-size="12" text-anchor="middle" stroke="#000" stroke-width="0.22" textLength="17.5" lengthAdjust="spacingAndGlyphs" >T/C</text>
<polygon points="432,416.5 446.5,416.5 443.5,419.5 435,419.5 435,428 432,431" fill="#8E8E8E" shape-rendering="geometricPrecision"/>
<polygon points="446.5,431 446.5,416.5 443.5,419.5 443.5,428 435,428 432,431" fill="#C6C6C6" shape-rendering="geometricPrecision"/>
<rect x="435" y="419.5" width="8.5" height="8.5" fill="#B0B0B0" />
<rect x="435.4" y="420.1" width="7.7" height="7.5" fill="#FFFF70" shape-rendering="geometricPrecision"/>
<rect x="448" y="416" width="53" height="16.5" fill="#6E6E6E" />
<rect x="448" y="416" width="52" height="15.5" fill="#A0A0A0" />
<rect x="449" y="417" width="51" height="14.5" fill="#E8E8E8" />
<rect x="450" y="418" width="49" height="12.5" fill="#D2D2D2" />
<text transform="translate(450 427.45) scale(0.915 1)" font-size="11" stroke="#000" stroke-width="0.22" >0.0008</text>
<text x="432.5" y="443.7" font-size="11" stroke="#000" stroke-width="0.22" textLength="65.5" lengthAdjust="spacingAndGlyphs" >Trap Roughing</text>
<text x="432.5" y="455.7" font-size="11" stroke="#000" stroke-width="0.22" textLength="72" lengthAdjust="spacingAndGlyphs" >Pressure [mbar]</text>
<rect x="531" y="392" width="49" height="46" fill="#2E2E2E" />
<rect x="532" y="393" width="47" height="44" fill="#2EF510" />
<g fill="none" stroke="#1C2C24" stroke-width="1.25" shape-rendering="geometricPrecision"><circle cx="555.5" cy="415" r="17.3"/><circle cx="555.5" cy="415" r="10.8"/>
<line x1="555.50" y1="425.80" x2="555.50" y2="432.30"/>
<line x1="547.86" y1="422.64" x2="543.27" y2="427.23"/>
<line x1="544.70" y1="415.00" x2="538.20" y2="415.00"/>
<line x1="547.86" y1="407.36" x2="543.27" y2="402.77"/>
<line x1="555.50" y1="404.20" x2="555.50" y2="397.70"/>
<line x1="563.14" y1="407.36" x2="567.73" y2="402.77"/>
<line x1="566.30" y1="415.00" x2="572.80" y2="415.00"/>
<line x1="563.14" y1="422.64" x2="567.73" y2="427.23"/>
</g>
<text x="555" y="451.2" font-size="11" text-anchor="middle" stroke="#000" stroke-width="0.22" textLength="65.5" lengthAdjust="spacingAndGlyphs" >Trap Roughing</text>
<text x="555" y="463.2" font-size="11" text-anchor="middle" stroke="#000" stroke-width="0.22" textLength="25" lengthAdjust="spacingAndGlyphs" >Pump</text>
<text x="687.5" y="45.7" font-size="15" stroke="#000" stroke-width="0.22" textLength="88.5" lengthAdjust="spacingAndGlyphs" >System Status</text>
<defs><linearGradient id="btn" x1="0" x2="1" y1="0" y2="0"><stop offset="0" stop-color="#C6C6C6"/><stop offset="0.7" stop-color="#BCBCBC"/><stop offset="1" stop-color="#8E8E8E"/></linearGradient></defs>
<rect x="687.5" y="50.5" width="190" height="27" fill="#8A8A8A" />
<rect x="687.5" y="50.5" width="190" height="1" fill="#C4C4C4" />
<rect x="687.5" y="51.5" width="169.5" height="24.5" fill="#FDFDFD" />
<rect x="857" y="51.5" width="20.5" height="24.5" fill="url(#btn)"/>
<path d="M859.25 60 L870.25 60 L864.75 68.5 Z" fill="#C4C4C4" stroke="#8A8A8A" stroke-width="1" shape-rendering="geometricPrecision"/>
<text x="691.5" y="70.2" font-size="19" font-weight="bold" textLength="132.5" lengthAdjust="spacingAndGlyphs" stroke="#000" stroke-width="0.5">SOURCE ONLY</text>
<text x="687.5" y="100.7" font-size="15" stroke="#000" stroke-width="0.22" textLength="65" lengthAdjust="spacingAndGlyphs" >Trap State</text>
<rect x="687.5" y="104.5" width="187.5" height="27.5" fill="#8A8A8A" />
<rect x="687.5" y="104.5" width="187.5" height="1" fill="#C4C4C4" />
<rect x="687.5" y="105.5" width="166" height="25" fill="#D7D3CB" />
<rect x="853.5" y="105.5" width="21.5" height="25" fill="url(#btn)"/>
<path d="M856.25 114.25 L867.25 114.25 L861.75 122.75 Z" fill="#C4C4C4" stroke="#8A8A8A" stroke-width="1" shape-rendering="geometricPrecision"/>
<text x="691.5" y="123.7" font-size="19" font-weight="bold" textLength="36.5" lengthAdjust="spacingAndGlyphs" stroke="#000" stroke-width="0.5">OFF</text>
<rect x="687.5" y="140.5" width="190" height="101.5" fill="#D8D8D8" />
<rect x="688.5" y="141.5" width="188" height="99.5" fill="#7C7C7C" />
<rect x="689.5" y="142.5" width="186" height="97.5" fill="#B3B3B3" />
<text x="690" y="154.2" font-size="12" font-weight="bold" textLength="183" lengthAdjust="spacingAndGlyphs" stroke="#000" stroke-width="0.25">Cycle Trap Times [s] &amp; Freq. [Hz]</text>
<rect x="702.5" y="162" width="37" height="12.5" fill="#C6BEAE" />
<text x="704" y="172" font-size="11" fill="#9C9C9C" stroke="#9C9C9C" stroke-width="0.22" textLength="34" lengthAdjust="spacingAndGlyphs" >Fill Time</text>
<rect x="758" y="162" width="50" height="12.5" fill="#C6BEAE" />
<text x="759.5" y="172" font-size="11" fill="#9C9C9C" stroke="#9C9C9C" stroke-width="0.22" textLength="47" lengthAdjust="spacingAndGlyphs" >Store Time</text>
<rect x="823" y="162" width="51" height="12.5" fill="#C6BEAE" />
<text x="824.5" y="172" font-size="11" fill="#9C9C9C" stroke="#9C9C9C" stroke-width="0.22" textLength="48" lengthAdjust="spacingAndGlyphs" >Dump Time</text>
<rect x="693" y="177" width="10" height="19" rx="4.5" fill="#C9C1B2" stroke="#AAA294" stroke-width="0.8" shape-rendering="geometricPrecision"/>
<path d="M695.5 184.5 l2.5 -4 l2.5 4 M695.5 188.5 l2.5 4 l2.5 -4" fill="none" stroke="#A09888" stroke-width="0.8" shape-rendering="geometricPrecision"/>
<rect x="704" y="176.5" width="41.5" height="20" fill="#C4BCAE" />
<rect x="706" y="178" width="37.5" height="17" fill="#AFA89A" />
<rect x="707" y="179" width="36.5" height="16" fill="#F0E8D8" />
<rect x="707" y="179" width="35.5" height="15" fill="#E6DFD0" />
<text transform="translate(709.5 189.7) scale(0.915 1)" font-size="11" fill="#9A9A9A" stroke="#9A9A9A" stroke-width="0.22" >1.000</text>
<rect x="748" y="177" width="10" height="19" rx="4.5" fill="#C9C1B2" stroke="#AAA294" stroke-width="0.8" shape-rendering="geometricPrecision"/>
<path d="M750.5 184.5 l2.5 -4 l2.5 4 M750.5 188.5 l2.5 4 l2.5 -4" fill="none" stroke="#A09888" stroke-width="0.8" shape-rendering="geometricPrecision"/>
<rect x="759" y="176.5" width="41.5" height="20" fill="#C4BCAE" />
<rect x="761" y="178" width="37.5" height="17" fill="#AFA89A" />
<rect x="762" y="179" width="36.5" height="16" fill="#F0E8D8" />
<rect x="762" y="179" width="35.5" height="15" fill="#E6DFD0" />
<text transform="translate(764.5 189.7) scale(0.915 1)" font-size="11" fill="#9A9A9A" stroke="#9A9A9A" stroke-width="0.22" >0.050</text>
<rect x="814" y="177" width="10" height="19" rx="4.5" fill="#C9C1B2" stroke="#AAA294" stroke-width="0.8" shape-rendering="geometricPrecision"/>
<path d="M816.5 184.5 l2.5 -4 l2.5 4 M816.5 188.5 l2.5 4 l2.5 -4" fill="none" stroke="#A09888" stroke-width="0.8" shape-rendering="geometricPrecision"/>
<rect x="824.5" y="176.5" width="41.5" height="20" fill="#C4BCAE" />
<rect x="826.5" y="178" width="37.5" height="17" fill="#AFA89A" />
<rect x="827.5" y="179" width="36.5" height="16" fill="#F0E8D8" />
<rect x="827.5" y="179" width="35.5" height="15" fill="#E6DFD0" />
<text transform="translate(830 189.7) scale(0.915 1)" font-size="11" fill="#9A9A9A" stroke="#9A9A9A" stroke-width="0.22" >0.001</text>
<rect x="729" y="201.5" width="40.5" height="12.5" fill="#C6BEAE" />
<text x="730.5" y="211.5" font-size="11" fill="#9C9C9C" stroke="#9C9C9C" stroke-width="0.22" textLength="37.5" lengthAdjust="spacingAndGlyphs" >Fill Freq.</text>
<rect x="804.5" y="201.5" width="53.5" height="12.5" fill="#C6BEAE" />
<text x="806" y="211.5" font-size="11" fill="#9C9C9C" stroke="#9C9C9C" stroke-width="0.22" textLength="50.5" lengthAdjust="spacingAndGlyphs" >Store Freq.</text>
<rect x="693" y="216" width="18.5" height="19" fill="#C4BCAE" />
<circle cx="702.3" cy="226" r="7" fill="url(#ledl)" stroke="#A8C890" stroke-width="0.6" shape-rendering="geometricPrecision"/>
<rect x="719.5" y="216.5" width="10" height="19" rx="4.5" fill="#C9C1B2" stroke="#AAA294" stroke-width="0.8" shape-rendering="geometricPrecision"/>
<path d="M722.0 224.0 l2.5 -4 l2.5 4 M722.0 228.0 l2.5 4 l2.5 -4" fill="none" stroke="#A09888" stroke-width="0.8" shape-rendering="geometricPrecision"/>
<rect x="729.5" y="216" width="61.5" height="20" fill="#C4BCAE" />
<rect x="731.5" y="217.5" width="57.5" height="17" fill="#AFA89A" />
<rect x="732.5" y="218.5" width="56.5" height="16" fill="#F0E8D8" />
<rect x="732.5" y="218.5" width="55.5" height="15" fill="#E6DFD0" />
<text transform="translate(735 229.2) scale(0.915 1)" font-size="11" fill="#9A9A9A" stroke="#9A9A9A" stroke-width="0.22" >5.400E+6</text>
<rect x="795" y="216.5" width="10" height="19" rx="4.5" fill="#C9C1B2" stroke="#AAA294" stroke-width="0.8" shape-rendering="geometricPrecision"/>
<path d="M797.5 224.0 l2.5 -4 l2.5 4 M797.5 228.0 l2.5 4 l2.5 -4" fill="none" stroke="#A09888" stroke-width="0.8" shape-rendering="geometricPrecision"/>
<rect x="805" y="216" width="61.5" height="20" fill="#C4BCAE" />
<rect x="807" y="217.5" width="57.5" height="17" fill="#AFA89A" />
<rect x="808" y="218.5" width="56.5" height="16" fill="#F0E8D8" />
<rect x="808" y="218.5" width="55.5" height="15" fill="#E6DFD0" />
<text transform="translate(810.5 229.2) scale(0.915 1)" font-size="11" fill="#9A9A9A" stroke="#9A9A9A" stroke-width="0.22" >5.400E+6</text>
<text x="687.5" y="253.7" font-size="11" stroke="#000" stroke-width="0.22" textLength="43.5" lengthAdjust="spacingAndGlyphs" >Messages</text>
<polygon points="688,259 878,259 875,262 691,262 691,444.5 688,447.5" fill="#9C9C9C" shape-rendering="geometricPrecision"/>
<polygon points="878,447.5 878,259 875,262 875,444.5 691,444.5 688,447.5" fill="#C6C6C6" shape-rendering="geometricPrecision"/>
<rect x="691" y="262" width="184" height="182.5" fill="#FAFAFA" shape-rendering="geometricPrecision"/>
<text x="688" y="458.7" font-size="11" stroke="#000" stroke-width="0.22" textLength="107" lengthAdjust="spacingAndGlyphs" >Gamma Ray Count [1/s]</text>
<polygon points="688,464 878,464 875.2,466.8 690.8,466.8 690.8,485.7 688,488.5" fill="#9C9C9C" shape-rendering="geometricPrecision"/>
<polygon points="878,488.5 878,464 875.2,466.8 875.2,485.7 690.8,485.7 688,488.5" fill="#C6C6C6" shape-rendering="geometricPrecision"/>
<rect x="690.8" y="466.8" width="184.4" height="18.9" fill="#D2D2D2" shape-rendering="geometricPrecision"/>
<text x="691.5" y="481.2" font-size="15" stroke="#000" stroke-width="0.22" textLength="70.5" lengthAdjust="spacingAndGlyphs" >0.762486</text>
<rect x="84" y="528" width="194" height="244" fill="#CDCDCD" />
<rect x="84" y="528" width="193" height="243" fill="#000" />
<g stroke="#4A4A00" stroke-width="1">
<line x1="90.5" y1="528" x2="90.5" y2="771"/>
<line x1="97.5" y1="528" x2="97.5" y2="771"/>
<line x1="103.5" y1="528" x2="103.5" y2="771"/>
<line x1="109.5" y1="528" x2="109.5" y2="771"/>
<line x1="115.5" y1="528" x2="115.5" y2="771"/>
<line x1="122.5" y1="528" x2="122.5" y2="771"/>
<line x1="128.5" y1="528" x2="128.5" y2="771"/>
<line x1="141.5" y1="528" x2="141.5" y2="771"/>
<line x1="147.5" y1="528" x2="147.5" y2="771"/>
<line x1="153.5" y1="528" x2="153.5" y2="771"/>
<line x1="160.5" y1="528" x2="160.5" y2="771"/>
<line x1="166.5" y1="528" x2="166.5" y2="771"/>
<line x1="172.5" y1="528" x2="172.5" y2="771"/>
<line x1="178.5" y1="528" x2="178.5" y2="771"/>
<line x1="191.5" y1="528" x2="191.5" y2="771"/>
<line x1="197.5" y1="528" x2="197.5" y2="771"/>
<line x1="204.5" y1="528" x2="204.5" y2="771"/>
<line x1="210.5" y1="528" x2="210.5" y2="771"/>
<line x1="216.5" y1="528" x2="216.5" y2="771"/>
<line x1="222.5" y1="528" x2="222.5" y2="771"/>
<line x1="229.5" y1="528" x2="229.5" y2="771"/>
<line x1="241.5" y1="528" x2="241.5" y2="771"/>
<line x1="248.5" y1="528" x2="248.5" y2="771"/>
<line x1="254.5" y1="528" x2="254.5" y2="771"/>
<line x1="260.5" y1="528" x2="260.5" y2="771"/>
<line x1="267.5" y1="528" x2="267.5" y2="771"/>
<line x1="273.5" y1="528" x2="273.5" y2="771"/>
<line x1="84" y1="552.5" x2="277" y2="552.5"/>
<line x1="84" y1="546.5" x2="277" y2="546.5"/>
<line x1="84" y1="542.5" x2="277" y2="542.5"/>
<line x1="84" y1="538.5" x2="277" y2="538.5"/>
<line x1="84" y1="536.5" x2="277" y2="536.5"/>
<line x1="84" y1="533.5" x2="277" y2="533.5"/>
<line x1="84" y1="531.5" x2="277" y2="531.5"/>
<line x1="84" y1="530.5" x2="277" y2="530.5"/>
<line x1="84" y1="587.5" x2="277" y2="587.5"/>
<line x1="84" y1="581.5" x2="277" y2="581.5"/>
<line x1="84" y1="577.5" x2="277" y2="577.5"/>
<line x1="84" y1="573.5" x2="277" y2="573.5"/>
<line x1="84" y1="570.5" x2="277" y2="570.5"/>
<line x1="84" y1="568.5" x2="277" y2="568.5"/>
<line x1="84" y1="566.5" x2="277" y2="566.5"/>
<line x1="84" y1="564.5" x2="277" y2="564.5"/>
<line x1="84" y1="622.5" x2="277" y2="622.5"/>
<line x1="84" y1="616.5" x2="277" y2="616.5"/>
<line x1="84" y1="611.5" x2="277" y2="611.5"/>
<line x1="84" y1="608.5" x2="277" y2="608.5"/>
<line x1="84" y1="605.5" x2="277" y2="605.5"/>
<line x1="84" y1="603.5" x2="277" y2="603.5"/>
<line x1="84" y1="601.5" x2="277" y2="601.5"/>
<line x1="84" y1="599.5" x2="277" y2="599.5"/>
<line x1="84" y1="656.5" x2="277" y2="656.5"/>
<line x1="84" y1="650.5" x2="277" y2="650.5"/>
<line x1="84" y1="646.5" x2="277" y2="646.5"/>
<line x1="84" y1="643.5" x2="277" y2="643.5"/>
<line x1="84" y1="640.5" x2="277" y2="640.5"/>
<line x1="84" y1="638.5" x2="277" y2="638.5"/>
<line x1="84" y1="636.5" x2="277" y2="636.5"/>
<line x1="84" y1="634.5" x2="277" y2="634.5"/>
<line x1="84" y1="691.5" x2="277" y2="691.5"/>
<line x1="84" y1="685.5" x2="277" y2="685.5"/>
<line x1="84" y1="681.5" x2="277" y2="681.5"/>
<line x1="84" y1="677.5" x2="277" y2="677.5"/>
<line x1="84" y1="675.5" x2="277" y2="675.5"/>
<line x1="84" y1="672.5" x2="277" y2="672.5"/>
<line x1="84" y1="670.5" x2="277" y2="670.5"/>
<line x1="84" y1="668.5" x2="277" y2="668.5"/>
<line x1="84" y1="726.5" x2="277" y2="726.5"/>
<line x1="84" y1="720.5" x2="277" y2="720.5"/>
<line x1="84" y1="715.5" x2="277" y2="715.5"/>
<line x1="84" y1="712.5" x2="277" y2="712.5"/>
<line x1="84" y1="709.5" x2="277" y2="709.5"/>
<line x1="84" y1="707.5" x2="277" y2="707.5"/>
<line x1="84" y1="705.5" x2="277" y2="705.5"/>
<line x1="84" y1="703.5" x2="277" y2="703.5"/>
<line x1="84" y1="761.5" x2="277" y2="761.5"/>
<line x1="84" y1="754.5" x2="277" y2="754.5"/>
<line x1="84" y1="750.5" x2="277" y2="750.5"/>
<line x1="84" y1="747.5" x2="277" y2="747.5"/>
<line x1="84" y1="744.5" x2="277" y2="744.5"/>
<line x1="84" y1="742.5" x2="277" y2="742.5"/>
<line x1="84" y1="740.5" x2="277" y2="740.5"/>
<line x1="84" y1="738.5" x2="277" y2="738.5"/>
</g>
<g stroke="#9A9A00" stroke-width="1">
<line x1="84.5" y1="528" x2="84.5" y2="771" stroke="#202000"/>
<line x1="134.5" y1="528" x2="134.5" y2="771"/>
<line x1="185.5" y1="528" x2="185.5" y2="771"/>
<line x1="235.5" y1="528" x2="235.5" y2="771"/>
<line x1="84" y1="563.5" x2="277" y2="563.5"/>
<line x1="84" y1="597.5" x2="277" y2="597.5"/>
<line x1="84" y1="632.5" x2="277" y2="632.5"/>
<line x1="84" y1="667.5" x2="277" y2="667.5"/>
<line x1="84" y1="702.5" x2="277" y2="702.5"/>
<line x1="84" y1="736.5" x2="277" y2="736.5"/>
</g>
<text x="182.5" y="522.2" font-size="11" text-anchor="middle" stroke="#000" stroke-width="0.22" textLength="40" lengthAdjust="spacingAndGlyphs" >Pressure</text>
<text x="75.5" y="533.2" font-size="11" text-anchor="end" stroke="#000" stroke-width="0.22" textLength="30" lengthAdjust="spacingAndGlyphs" >1.0E-2</text>
<line x1="78" y1="530.5" x2="83" y2="530.5" stroke="#202020" stroke-width="1" shape-rendering="geometricPrecision"/>
<text x="75.5" y="567.914" font-size="11" text-anchor="end" stroke="#000" stroke-width="0.22" textLength="30" lengthAdjust="spacingAndGlyphs" >1.0E-3</text>
<line x1="78" y1="565.5" x2="83" y2="565.5" stroke="#202020" stroke-width="1" shape-rendering="geometricPrecision"/>
<text x="75.5" y="602.629" font-size="11" text-anchor="end" stroke="#000" stroke-width="0.22" textLength="30" lengthAdjust="spacingAndGlyphs" >1.0E-4</text>
<line x1="78" y1="599.5" x2="83" y2="599.5" stroke="#202020" stroke-width="1" shape-rendering="geometricPrecision"/>
<text x="75.5" y="637.343" font-size="11" text-anchor="end" stroke="#000" stroke-width="0.22" textLength="30" lengthAdjust="spacingAndGlyphs" >1.0E-5</text>
<line x1="78" y1="634.5" x2="83" y2="634.5" stroke="#202020" stroke-width="1" shape-rendering="geometricPrecision"/>
<text x="75.5" y="672.057" font-size="11" text-anchor="end" stroke="#000" stroke-width="0.22" textLength="30" lengthAdjust="spacingAndGlyphs" >1.0E-6</text>
<line x1="78" y1="669.5" x2="83" y2="669.5" stroke="#202020" stroke-width="1" shape-rendering="geometricPrecision"/>
<text x="75.5" y="706.771" font-size="11" text-anchor="end" stroke="#000" stroke-width="0.22" textLength="30" lengthAdjust="spacingAndGlyphs" >1.0E-7</text>
<line x1="78" y1="704.5" x2="83" y2="704.5" stroke="#202020" stroke-width="1" shape-rendering="geometricPrecision"/>
<text x="75.5" y="741.486" font-size="11" text-anchor="end" stroke="#000" stroke-width="0.22" textLength="30" lengthAdjust="spacingAndGlyphs" >1.0E-8</text>
<line x1="78" y1="738.5" x2="83" y2="738.5" stroke="#202020" stroke-width="1" shape-rendering="geometricPrecision"/>
<text x="75.5" y="776.2" font-size="11" text-anchor="end" stroke="#000" stroke-width="0.22" textLength="30" lengthAdjust="spacingAndGlyphs" >1.0E-9</text>
<line x1="78" y1="771.5" x2="83" y2="771.5" stroke="#202020" stroke-width="1" shape-rendering="geometricPrecision"/>
<line x1="84.5" y1="772.5" x2="84.5" y2="777.5" stroke="#202020" stroke-width="1" shape-rendering="geometricPrecision"/>
<text x="83.7" y="788.2" font-size="11" text-anchor="middle" stroke="#000" stroke-width="0.22" textLength="25.5" lengthAdjust="spacingAndGlyphs" >00:00</text>
<line x1="135.5" y1="772.5" x2="135.5" y2="777.5" stroke="#202020" stroke-width="1" shape-rendering="geometricPrecision"/>
<text x="134.05" y="788.2" font-size="11" text-anchor="middle" stroke="#000" stroke-width="0.22" textLength="25.5" lengthAdjust="spacingAndGlyphs" >02:00</text>
<line x1="185.5" y1="772.5" x2="185.5" y2="777.5" stroke="#202020" stroke-width="1" shape-rendering="geometricPrecision"/>
<text x="184.4" y="788.2" font-size="11" text-anchor="middle" stroke="#000" stroke-width="0.22" textLength="25.5" lengthAdjust="spacingAndGlyphs" >04:00</text>
<line x1="236.5" y1="772.5" x2="236.5" y2="777.5" stroke="#202020" stroke-width="1" shape-rendering="geometricPrecision"/>
<text x="234.75" y="788.2" font-size="11" text-anchor="middle" stroke="#000" stroke-width="0.22" textLength="25.5" lengthAdjust="spacingAndGlyphs" >06:00</text>
<line x1="276.5" y1="772.5" x2="276.5" y2="777.5" stroke="#202020" stroke-width="1" shape-rendering="geometricPrecision"/>
<text x="276.2" y="788.2" font-size="11" text-anchor="middle" stroke="#000" stroke-width="0.22" textLength="25.5" lengthAdjust="spacingAndGlyphs" >07:40</text>
<text x="192" y="803.2" font-size="11" text-anchor="middle" stroke="#000" stroke-width="0.22" textLength="21" lengthAdjust="spacingAndGlyphs" >Time</text>
<text transform="translate(41.5 648.2) rotate(-90) scale(0.9 1)" font-size="11" text-anchor="middle" stroke="#000" stroke-width="0.22" >Pressure (mbar)</text>
<rect x="84" y="564.2" width="193" height="5" fill="#FFFF66" />
<rect x="133.5" y="536" width="2" height="28" fill="#F4F060" />
<circle cx="134.5" cy="535.8" r="2.2" fill="#FFFF80" stroke="none" stroke-width="0" shape-rendering="geometricPrecision"/>
<circle cx="134.5" cy="560" r="2.4" fill="#FFFF80" stroke="none" stroke-width="0" shape-rendering="geometricPrecision"/>
<polygon points="84.0,572.5 85.0,572.5 86.0,572.5 87.0,572.5 88.0,572.5 89.0,572.5 90.0,572.5 91.0,572.5 92.0,571.3 93.0,572.5 94.0,572.5 95.0,572.5 96.0,572.5 97.0,572.5 98.0,572.5 99.0,572.5 100.0,572.5 101.0,572.5 102.0,572.5 103.0,572.5 104.0,572.5 105.0,572.5 106.0,572.5 107.0,572.5 108.0,572.5 109.0,572.5 110.0,572.5 111.0,572.5 112.0,572.5 113.0,572.5 114.0,572.5 115.0,572.5 116.0,572.5 117.0,572.5 118.0,572.5 119.0,572.5 120.0,572.5 121.0,572.5 122.0,572.5 123.0,572.5 124.0,572.5 125.0,572.5 126.0,572.5 127.0,572.5 128.0,572.5 129.0,572.5 130.0,572.5 131.0,572.5 132.0,572.5 133.0,572.5 134.0,572.5 135.0,572.5 136.0,572.5 137.0,572.5 138.0,572.5 139.0,572.5 140.0,571.3 141.0,572.5 142.0,572.5 143.0,572.5 144.0,572.5 145.0,572.5 146.0,572.5 147.0,572.5 148.0,572.5 149.0,572.5 150.0,572.5 151.0,572.5 152.0,572.5 153.0,572.5 154.0,572.5 155.0,572.5 156.0,572.5 157.0,572.5 158.0,572.5 159.0,572.5 160.0,572.5 161.0,572.5 162.0,571.3 163.0,572.5 164.0,572.5 165.0,572.5 166.0,572.5 167.0,572.5 168.0,572.5 169.0,572.5 170.0,572.5 171.0,572.5 172.0,572.5 173.0,572.5 174.0,572.5 175.0,572.5 176.0,572.5 177.0,572.5 178.0,572.5 179.0,572.5 180.0,572.5 181.0,572.5 182.0,572.5 183.0,572.5 184.0,572.5 185.0,572.5 186.0,572.5 187.0,572.5 188.0,572.5 189.0,572.5 190.0,571.3 191.0,572.5 192.0,572.5 193.0,572.5 194.0,572.5 195.0,572.5 196.0,572.5 197.0,572.5 198.0,572.5 199.0,572.5 200.0,572.5 201.0,572.5 202.0,572.5 203.0,572.5 204.0,572.5 205.0,572.5 206.0,572.5 207.0,572.5 208.0,572.5 209.0,572.5 210.0,572.5 211.0,572.5 212.0,572.5 213.0,572.5 214.0,571.3 215.0,572.5 216.0,572.5 217.0,572.5 218.0,571.3 219.0,572.5 220.0,572.5 221.0,572.5 222.0,572.5 223.0,572.5 224.0,572.5 225.0,572.5 226.0,572.5 227.0,572.5 228.0,572.5 229.0,572.5 230.0,572.5 231.0,572.5 232.0,572.5 233.0,572.5 234.0,572.5 235.0,572.5 236.0,571.3 237.0,572.5 238.0,572.5 239.0,572.5 240.0,572.5 241.0,571.3 242.0,572.5 243.0,572.5 244.0,572.5 245.0,572.5 246.0,572.5 247.0,572.5 248.0,572.5 249.0,572.5 250.0,572.5 251.0,572.5 252.0,572.5 253.0,572.5 254.0,572.5 255.0,572.5 256.0,572.5 257.0,572.5 258.0,572.5 259.0,572.5 260.0,572.5 261.0,572.5 262.0,572.5 263.0,571.3 264.0,571.3 265.0,572.5 266.0,572.5 267.0,572.5 268.0,572.5 269.0,572.5 270.0,572.5 271.0,572.5 272.0,572.5 273.0,572.5 274.0,572.5 275.0,572.5 276.0,572.5 277.0,572.5 277.0,577.5 276.0,577.5 275.0,577.5 274.0,577.5 273.0,579.3 272.0,577.5 271.0,577.5 270.0,577.5 269.0,577.5 268.0,577.5 267.0,579.3 266.0,577.5 265.0,579.3 264.0,577.5 263.0,579.3 262.0,577.5 261.0,577.5 260.0,577.5 259.0,577.5 258.0,577.5 257.0,577.5 256.0,579.3 255.0,579.3 254.0,579.3 253.0,577.5 252.0,577.5 251.0,579.3 250.0,577.5 249.0,577.5 248.0,577.5 247.0,577.5 246.0,577.5 245.0,577.5 244.0,579.3 243.0,577.5 242.0,579.3 241.0,577.5 240.0,577.5 239.0,577.5 238.0,579.3 237.0,577.5 236.0,577.5 235.0,579.3 234.0,579.3 233.0,577.5 232.0,577.5 231.0,577.5 230.0,579.3 229.0,577.5 228.0,577.5 227.0,577.5 226.0,577.5 225.0,579.3 224.0,577.5 223.0,577.5 222.0,579.3 221.0,577.5 220.0,579.3 219.0,577.5 218.0,577.5 217.0,577.5 216.0,579.3 215.0,577.5 214.0,577.5 213.0,577.5 212.0,579.3 211.0,577.5 210.0,577.5 209.0,579.3 208.0,577.5 207.0,577.5 206.0,577.5 205.0,577.5 204.0,577.5 203.0,577.5 202.0,579.3 201.0,577.5 200.0,577.5 199.0,577.5 198.0,577.5 197.0,577.5 196.0,577.5 195.0,577.5 194.0,577.5 193.0,579.3 192.0,577.5 191.0,577.5 190.0,579.3 189.0,577.5 188.0,577.5 187.0,577.5 186.0,579.3 185.0,577.5 184.0,579.3 183.0,577.5 182.0,579.3 181.0,579.3 180.0,577.5 179.0,577.5 178.0,577.5 177.0,577.5 176.0,577.5 175.0,577.5 174.0,577.5 173.0,577.5 172.0,577.5 171.0,577.5 170.0,577.5 169.0,577.5 168.0,577.5 167.0,577.5 166.0,577.5 165.0,577.5 164.0,577.5 163.0,577.5 162.0,577.5 161.0,577.5 160.0,577.5 159.0,577.5 158.0,577.5 157.0,577.5 156.0,579.3 155.0,577.5 154.0,577.5 153.0,577.5 152.0,577.5 151.0,577.5 150.0,577.5 149.0,577.5 148.0,579.3 147.0,577.5 146.0,579.3 145.0,577.5 144.0,577.5 143.0,579.3 142.0,577.5 141.0,577.5 140.0,577.5 139.0,577.5 138.0,577.5 137.0,577.5 136.0,577.5 135.0,577.5 134.0,577.5 133.0,577.5 132.0,579.3 131.0,577.5 130.0,577.5 129.0,577.5 128.0,577.5 127.0,577.5 126.0,577.5 125.0,577.5 124.0,577.5 123.0,577.5 122.0,577.5 121.0,577.5 120.0,577.5 119.0,577.5 118.0,577.5 117.0,579.3 116.0,579.3 115.0,577.5 114.0,577.5 113.0,577.5 112.0,577.5 111.0,577.5 110.0,579.3 109.0,577.5 108.0,577.5 107.0,579.3 106.0,579.3 105.0,579.3 104.0,577.5 103.0,577.5 102.0,577.5 101.0,577.5 100.0,577.5 99.0,577.5 98.0,577.5 97.0,577.5 96.0,579.3 95.0,577.5 94.0,577.5 93.0,577.5 92.0,577.5 91.0,577.5 90.0,579.3 89.0,577.5 88.0,577.5 87.0,577.5 86.0,577.5 85.0,577.5 84.0,577.5" fill="#4A86FF" />
<polygon points="84.0,586.3 85.0,586.3 86.0,586.3 87.0,586.3 88.0,589.0 89.0,589.0 90.0,589.0 91.0,589.0 92.0,589.0 93.0,589.0 94.0,589.0 95.0,589.0 96.0,589.0 97.0,589.0 98.0,589.0 99.0,589.0 100.0,589.0 101.0,589.0 102.0,589.0 103.0,589.0 104.0,589.0 105.0,589.0 106.0,589.0 107.0,589.0 108.0,589.0 109.0,589.0 110.0,589.0 111.0,589.0 112.0,589.0 113.0,589.0 114.0,589.0 115.0,589.0 116.0,589.0 117.0,589.0 118.0,589.0 119.0,589.0 120.0,589.0 121.0,589.0 122.0,589.0 123.0,589.0 124.0,589.0 125.0,589.0 126.0,589.0 127.0,589.0 128.0,589.0 129.0,589.0 130.0,589.0 131.0,589.0 132.0,589.0 133.0,589.0 134.0,589.0 135.0,589.0 136.0,589.0 137.0,589.0 138.0,586.3 139.0,586.3 140.0,586.3 141.0,586.3 142.0,586.3 143.0,589.0 144.0,589.0 145.0,589.0 146.0,589.0 147.0,589.0 148.0,589.0 149.0,586.3 150.0,586.3 151.0,586.3 152.0,586.3 153.0,586.3 154.0,589.0 155.0,589.0 156.0,589.0 157.0,589.0 158.0,589.0 159.0,589.0 160.0,589.0 161.0,589.0 162.0,589.0 163.0,589.0 164.0,589.0 165.0,589.0 166.0,589.0 167.0,589.0 168.0,589.0 169.0,589.0 170.0,589.0 171.0,589.0 172.0,589.0 173.0,589.0 174.0,586.3 175.0,586.3 176.0,586.3 177.0,586.3 178.0,589.0 179.0,589.0 180.0,586.3 181.0,586.3 182.0,586.3 183.0,586.3 184.0,586.3 185.0,586.3 186.0,589.0 187.0,589.0 188.0,589.0 189.0,586.3 190.0,586.3 191.0,586.3 192.0,589.0 193.0,589.0 194.0,589.0 195.0,589.0 196.0,589.0 197.0,589.0 198.0,589.0 199.0,589.0 200.0,586.3 201.0,586.3 202.0,586.3 203.0,586.3 204.0,586.3 205.0,586.3 206.0,586.3 207.0,586.3 208.0,586.3 209.0,586.3 210.0,586.3 211.0,586.3 212.0,586.3 213.0,586.3 214.0,586.3 215.0,586.3 216.0,586.3 217.0,586.3 218.0,586.3 219.0,586.3 220.0,586.3 221.0,586.3 222.0,586.3 223.0,586.3 224.0,586.3 225.0,586.3 226.0,586.3 227.0,586.3 228.0,586.3 229.0,586.3 230.0,586.3 231.0,586.3 232.0,586.3 233.0,586.3 234.0,586.3 235.0,586.3 236.0,586.3 237.0,586.3 238.0,586.3 239.0,586.3 240.0,586.3 241.0,589.0 242.0,589.0 243.0,589.0 244.0,589.0 245.0,586.3 246.0,586.3 247.0,586.3 248.0,589.0 249.0,589.0 250.0,589.0 251.0,589.0 252.0,589.0 253.0,586.3 254.0,586.3 255.0,586.3 256.0,589.0 257.0,589.0 258.0,589.0 259.0,589.0 260.0,589.0 261.0,589.0 262.0,589.0 263.0,589.0 264.0,589.0 265.0,586.3 266.0,586.3 267.0,586.3 268.0,586.3 269.0,589.0 270.0,589.0 271.0,589.0 272.0,589.0 273.0,586.3 274.0,586.3 275.0,586.3 276.0,586.3 277.0,586.3 277.0,594.6 276.0,594.6 275.0,594.6 274.0,594.6 273.0,594.6 272.0,594.6 271.0,594.6 270.0,594.6 269.0,594.6 268.0,594.6 267.0,594.6 266.0,594.6 265.0,594.6 264.0,594.6 263.0,594.6 262.0,594.6 261.0,594.6 260.0,594.6 259.0,594.6 258.0,594.6 257.0,594.6 256.0,594.6 255.0,594.6 254.0,594.6 253.0,594.6 252.0,594.6 251.0,594.6 250.0,594.6 249.0,594.6 248.0,594.6 247.0,594.6 246.0,594.6 245.0,594.6 244.0,594.6 243.0,594.6 242.0,594.6 241.0,594.6 240.0,594.6 239.0,594.6 238.0,594.6 237.0,594.6 236.0,594.6 235.0,594.6 234.0,594.6 233.0,594.6 232.0,594.6 231.0,594.6 230.0,594.6 229.0,594.6 228.0,594.6 227.0,594.6 226.0,594.6 225.0,594.6 224.0,594.6 223.0,594.6 222.0,594.6 221.0,594.6 220.0,594.6 219.0,594.6 218.0,594.6 217.0,594.6 216.0,594.6 215.0,594.6 214.0,594.6 213.0,594.6 212.0,594.6 211.0,594.6 210.0,594.6 209.0,594.6 208.0,594.6 207.0,594.6 206.0,594.6 205.0,594.6 204.0,594.6 203.0,594.6 202.0,594.6 201.0,594.6 200.0,594.6 199.0,594.6 198.0,594.6 197.0,594.6 196.0,594.6 195.0,594.6 194.0,594.6 193.0,594.6 192.0,594.6 191.0,594.6 190.0,594.6 189.0,594.6 188.0,594.6 187.0,594.6 186.0,594.6 185.0,594.6 184.0,594.6 183.0,594.6 182.0,594.6 181.0,594.6 180.0,594.6 179.0,594.6 178.0,594.6 177.0,594.6 176.0,594.6 175.0,594.6 174.0,594.6 173.0,594.6 172.0,594.6 171.0,594.6 170.0,594.6 169.0,594.6 168.0,594.6 167.0,594.6 166.0,594.6 165.0,594.6 164.0,594.6 163.0,594.6 162.0,594.6 161.0,594.6 160.0,594.6 159.0,594.6 158.0,594.6 157.0,594.6 156.0,594.6 155.0,594.6 154.0,594.6 153.0,594.6 152.0,594.6 151.0,594.6 150.0,594.6 149.0,594.6 148.0,594.6 147.0,594.6 146.0,594.6 145.0,594.6 144.0,594.6 143.0,594.6 142.0,594.6 141.0,594.6 140.0,594.6 139.0,594.6 138.0,594.6 137.0,594.6 136.0,594.6 135.0,594.6 134.0,594.6 133.0,594.6 132.0,594.6 131.0,594.6 130.0,594.6 129.0,594.6 128.0,594.6 127.0,594.6 126.0,594.6 125.0,594.6 124.0,594.6 123.0,594.6 122.0,594.6 121.0,594.6 120.0,594.6 119.0,594.6 118.0,594.6 117.0,594.6 116.0,594.6 115.0,594.6 114.0,594.6 113.0,594.6 112.0,594.6 111.0,594.6 110.0,594.6 109.0,594.6 108.0,594.6 107.0,594.6 106.0,594.6 105.0,594.6 104.0,594.6 103.0,594.6 102.0,594.6 101.0,594.6 100.0,594.6 99.0,594.6 98.0,594.6 97.0,594.6 96.0,594.6 95.0,594.6 94.0,594.6 93.0,594.6 92.0,594.6 91.0,594.6 90.0,594.6 89.0,594.6 88.0,594.6 87.0,594.6 86.0,594.6 85.0,594.6 84.0,594.6" fill="#50F050" />
<polygon points="84.0,745.5 85.0,745.5 86.0,745.5 87.0,745.5 88.0,745.5 89.0,745.5 90.0,745.5 91.0,745.5 92.0,745.5 93.0,745.5 94.0,743.5 95.0,743.5 96.0,745.5 97.0,744.5 98.0,744.5 99.0,744.5 100.0,745.5 101.0,745.5 102.0,744.5 103.0,744.5 104.0,744.5 105.0,744.5 106.0,745.5 107.0,745.5 108.0,745.5 109.0,745.5 110.0,745.5 111.0,745.5 112.0,745.5 113.0,745.5 114.0,745.5 115.0,745.5 116.0,745.5 117.0,745.5 118.0,745.5 119.0,745.5 120.0,745.5 121.0,745.5 122.0,745.5 123.0,744.0 124.0,744.0 125.0,745.5 126.0,745.5 127.0,745.5 128.0,745.5 129.0,745.5 130.0,744.0 131.0,744.0 132.0,745.5 133.0,745.5 134.0,745.5 135.0,745.5 136.0,745.5 137.0,745.5 138.0,745.5 139.0,745.5 140.0,745.5 141.0,745.5 142.0,745.5 143.0,745.5 144.0,745.5 145.0,745.5 146.0,745.5 147.0,745.5 148.0,745.5 149.0,745.5 150.0,745.5 151.0,745.5 152.0,745.5 153.0,745.5 154.0,745.5 155.0,745.5 156.0,745.5 157.0,745.5 158.0,745.5 159.0,745.5 160.0,745.5 161.0,744.5 162.0,744.5 163.0,744.5 164.0,745.5 165.0,745.5 166.0,744.5 167.0,744.5 168.0,744.5 169.0,745.5 170.0,745.5 171.0,745.5 172.0,745.5 173.0,743.5 174.0,743.5 175.0,743.5 176.0,745.5 177.0,745.5 178.0,743.5 179.0,743.5 180.0,745.5 181.0,745.5 182.0,744.5 183.0,744.5 184.0,744.5 185.0,744.5 186.0,745.5 187.0,745.5 188.0,744.0 189.0,744.0 190.0,744.0 191.0,745.5 192.0,745.5 193.0,745.5 194.0,745.5 195.0,745.5 196.0,745.5 197.0,745.5 198.0,745.5 199.0,745.5 200.0,745.5 201.0,745.5 202.0,745.5 203.0,743.5 204.0,743.5 205.0,743.5 206.0,745.5 207.0,745.5 208.0,745.5 209.0,745.5 210.0,745.5 211.0,743.5 212.0,743.5 213.0,743.5 214.0,743.5 215.0,745.5 216.0,745.5 217.0,745.5 218.0,745.5 219.0,745.5 220.0,745.5 221.0,745.5 222.0,745.5 223.0,745.5 224.0,745.5 225.0,745.5 226.0,745.5 227.0,745.5 228.0,745.5 229.0,744.0 230.0,744.0 231.0,745.5 232.0,745.5 233.0,745.5 234.0,745.5 235.0,745.5 236.0,745.5 237.0,745.5 238.0,745.5 239.0,745.5 240.0,745.5 241.0,745.5 242.0,745.5 243.0,745.5 244.0,745.5 245.0,745.5 246.0,745.5 247.0,745.5 248.0,745.5 249.0,745.5 250.0,745.5 251.0,743.5 252.0,743.5 253.0,743.5 254.0,743.5 255.0,745.5 256.0,745.5 257.0,745.5 258.0,745.5 259.0,745.5 260.0,745.5 261.0,745.5 262.0,745.5 263.0,745.5 264.0,745.5 265.0,745.5 266.0,745.5 267.0,745.5 268.0,744.5 269.0,744.5 270.0,744.5 271.0,745.5 272.0,745.5 273.0,744.0 274.0,744.0 275.0,745.5 276.0,745.5 277.0,745.5 277.0,752.8 276.0,752.8 275.0,752.8 274.0,752.8 273.0,752.8 272.0,752.8 271.0,753.8 270.0,752.8 269.0,752.8 268.0,752.8 267.0,753.8 266.0,752.8 265.0,752.8 264.0,752.8 263.0,752.8 262.0,752.8 261.0,753.8 260.0,752.8 259.0,752.8 258.0,752.8 257.0,752.8 256.0,752.8 255.0,752.8 254.0,752.8 253.0,752.8 252.0,752.8 251.0,752.8 250.0,753.8 249.0,753.8 248.0,753.8 247.0,752.8 246.0,752.8 245.0,752.8 244.0,753.8 243.0,752.8 242.0,752.8 241.0,752.8 240.0,752.8 239.0,752.8 238.0,752.8 237.0,752.8 236.0,752.8 235.0,752.8 234.0,752.8 233.0,752.8 232.0,752.8 231.0,752.8 230.0,752.8 229.0,752.8 228.0,752.8 227.0,752.8 226.0,752.8 225.0,752.8 224.0,752.8 223.0,752.8 222.0,752.8 221.0,753.8 220.0,752.8 219.0,752.8 218.0,752.8 217.0,752.8 216.0,752.8 215.0,752.8 214.0,752.8 213.0,753.8 212.0,752.8 211.0,752.8 210.0,752.8 209.0,752.8 208.0,752.8 207.0,752.8 206.0,752.8 205.0,752.8 204.0,752.8 203.0,752.8 202.0,752.8 201.0,753.8 200.0,752.8 199.0,752.8 198.0,752.8 197.0,752.8 196.0,752.8 195.0,753.8 194.0,753.8 193.0,752.8 192.0,752.8 191.0,752.8 190.0,753.8 189.0,752.8 188.0,752.8 187.0,752.8 186.0,752.8 185.0,752.8 184.0,753.8 183.0,752.8 182.0,752.8 181.0,752.8 180.0,752.8 179.0,752.8 178.0,752.8 177.0,752.8 176.0,752.8 175.0,752.8 174.0,753.8 173.0,752.8 172.0,752.8 171.0,752.8 170.0,752.8 169.0,752.8 168.0,752.8 167.0,753.8 166.0,752.8 165.0,752.8 164.0,752.8 163.0,752.8 162.0,753.8 161.0,753.8 160.0,752.8 159.0,752.8 158.0,752.8 157.0,752.8 156.0,752.8 155.0,752.8 154.0,752.8 153.0,752.8 152.0,752.8 151.0,752.8 150.0,752.8 149.0,753.8 148.0,752.8 147.0,752.8 146.0,753.8 145.0,752.8 144.0,752.8 143.0,752.8 142.0,752.8 141.0,752.8 140.0,752.8 139.0,752.8 138.0,752.8 137.0,752.8 136.0,752.8 135.0,753.8 134.0,752.8 133.0,753.8 132.0,752.8 131.0,753.8 130.0,752.8 129.0,752.8 128.0,752.8 127.0,752.8 126.0,752.8 125.0,752.8 124.0,752.8 123.0,752.8 122.0,752.8 121.0,752.8 120.0,752.8 119.0,752.8 118.0,752.8 117.0,752.8 116.0,752.8 115.0,752.8 114.0,752.8 113.0,752.8 112.0,752.8 111.0,753.8 110.0,752.8 109.0,753.8 108.0,752.8 107.0,752.8 106.0,752.8 105.0,752.8 104.0,752.8 103.0,753.8 102.0,752.8 101.0,752.8 100.0,752.8 99.0,752.8 98.0,752.8 97.0,752.8 96.0,752.8 95.0,752.8 94.0,752.8 93.0,752.8 92.0,752.8 91.0,752.8 90.0,752.8 89.0,752.8 88.0,752.8 87.0,752.8 86.0,753.8 85.0,753.8 84.0,752.8" fill="#FF0030" />
<rect x="360" y="528" width="209" height="244" fill="#CDCDCD" />
<rect x="360" y="528" width="208" height="243" fill="#000" />
<g stroke="#4A4A00" stroke-width="1">
<line x1="367.5" y1="528" x2="367.5" y2="771"/>
<line x1="374.5" y1="528" x2="374.5" y2="771"/>
<line x1="380.5" y1="528" x2="380.5" y2="771"/>
<line x1="387.5" y1="528" x2="387.5" y2="771"/>
<line x1="394.5" y1="528" x2="394.5" y2="771"/>
<line x1="401.5" y1="528" x2="401.5" y2="771"/>
<line x1="407.5" y1="528" x2="407.5" y2="771"/>
<line x1="421.5" y1="528" x2="421.5" y2="771"/>
<line x1="428.5" y1="528" x2="428.5" y2="771"/>
<line x1="434.5" y1="528" x2="434.5" y2="771"/>
<line x1="441.5" y1="528" x2="441.5" y2="771"/>
<line x1="448.5" y1="528" x2="448.5" y2="771"/>
<line x1="455.5" y1="528" x2="455.5" y2="771"/>
<line x1="461.5" y1="528" x2="461.5" y2="771"/>
<line x1="475.5" y1="528" x2="475.5" y2="771"/>
<line x1="482.5" y1="528" x2="482.5" y2="771"/>
<line x1="488.5" y1="528" x2="488.5" y2="771"/>
<line x1="495.5" y1="528" x2="495.5" y2="771"/>
<line x1="502.5" y1="528" x2="502.5" y2="771"/>
<line x1="509.5" y1="528" x2="509.5" y2="771"/>
<line x1="516.5" y1="528" x2="516.5" y2="771"/>
<line x1="529.5" y1="528" x2="529.5" y2="771"/>
<line x1="536.5" y1="528" x2="536.5" y2="771"/>
<line x1="543.5" y1="528" x2="543.5" y2="771"/>
<line x1="549.5" y1="528" x2="549.5" y2="771"/>
<line x1="556.5" y1="528" x2="556.5" y2="771"/>
<line x1="563.5" y1="528" x2="563.5" y2="771"/>
<line x1="360" y1="535.5" x2="568" y2="535.5"/>
<line x1="360" y1="542.5" x2="568" y2="542.5"/>
<line x1="360" y1="549.5" x2="568" y2="549.5"/>
<line x1="360" y1="556.5" x2="568" y2="556.5"/>
<line x1="360" y1="570.5" x2="568" y2="570.5"/>
<line x1="360" y1="577.5" x2="568" y2="577.5"/>
<line x1="360" y1="584.5" x2="568" y2="584.5"/>
<line x1="360" y1="590.5" x2="568" y2="590.5"/>
<line x1="360" y1="604.5" x2="568" y2="604.5"/>
<line x1="360" y1="611.5" x2="568" y2="611.5"/>
<line x1="360" y1="618.5" x2="568" y2="618.5"/>
<line x1="360" y1="625.5" x2="568" y2="625.5"/>
<line x1="360" y1="639.5" x2="568" y2="639.5"/>
<line x1="360" y1="646.5" x2="568" y2="646.5"/>
<line x1="360" y1="653.5" x2="568" y2="653.5"/>
<line x1="360" y1="660.5" x2="568" y2="660.5"/>
<line x1="360" y1="674.5" x2="568" y2="674.5"/>
<line x1="360" y1="681.5" x2="568" y2="681.5"/>
<line x1="360" y1="688.5" x2="568" y2="688.5"/>
<line x1="360" y1="695.5" x2="568" y2="695.5"/>
<line x1="360" y1="709.5" x2="568" y2="709.5"/>
<line x1="360" y1="715.5" x2="568" y2="715.5"/>
<line x1="360" y1="722.5" x2="568" y2="722.5"/>
<line x1="360" y1="729.5" x2="568" y2="729.5"/>
<line x1="360" y1="743.5" x2="568" y2="743.5"/>
<line x1="360" y1="750.5" x2="568" y2="750.5"/>
<line x1="360" y1="757.5" x2="568" y2="757.5"/>
<line x1="360" y1="764.5" x2="568" y2="764.5"/>
</g>
<g stroke="#9A9A00" stroke-width="1">
<line x1="360.5" y1="528" x2="360.5" y2="771" stroke="#202000"/>
<line x1="414.5" y1="528" x2="414.5" y2="771"/>
<line x1="468.5" y1="528" x2="468.5" y2="771"/>
<line x1="522.5" y1="528" x2="522.5" y2="771"/>
<line x1="360" y1="563.5" x2="568" y2="563.5"/>
<line x1="360" y1="597.5" x2="568" y2="597.5"/>
<line x1="360" y1="632.5" x2="568" y2="632.5"/>
<line x1="360" y1="667.5" x2="568" y2="667.5"/>
<line x1="360" y1="702.5" x2="568" y2="702.5"/>
<line x1="360" y1="736.5" x2="568" y2="736.5"/>
</g>
<text x="476.5" y="521.7" font-size="11" text-anchor="middle" stroke="#000" stroke-width="0.22" textLength="57" lengthAdjust="spacingAndGlyphs" >Temperature</text>
<text x="352" y="533.2" font-size="11" text-anchor="end" stroke="#000" stroke-width="0.22" textLength="15" lengthAdjust="spacingAndGlyphs" >7.0</text>
<line x1="354.5" y1="530.5" x2="359" y2="530.5" stroke="#202020" stroke-width="1" shape-rendering="geometricPrecision"/>
<text x="352" y="567.914" font-size="11" text-anchor="end" stroke="#000" stroke-width="0.22" textLength="15" lengthAdjust="spacingAndGlyphs" >6.9</text>
<line x1="354.5" y1="565.5" x2="359" y2="565.5" stroke="#202020" stroke-width="1" shape-rendering="geometricPrecision"/>
<text x="352" y="602.629" font-size="11" text-anchor="end" stroke="#000" stroke-width="0.22" textLength="15" lengthAdjust="spacingAndGlyphs" >6.8</text>
<line x1="354.5" y1="599.5" x2="359" y2="599.5" stroke="#202020" stroke-width="1" shape-rendering="geometricPrecision"/>
<text x="352" y="637.343" font-size="11" text-anchor="end" stroke="#000" stroke-width="0.22" textLength="15" lengthAdjust="spacingAndGlyphs" >6.7</text>
<line x1="354.5" y1="634.5" x2="359" y2="634.5" stroke="#202020" stroke-width="1" shape-rendering="geometricPrecision"/>
<text x="352" y="672.057" font-size="11" text-anchor="end" stroke="#000" stroke-width="0.22" textLength="15" lengthAdjust="spacingAndGlyphs" >6.6</text>
<line x1="354.5" y1="669.5" x2="359" y2="669.5" stroke="#202020" stroke-width="1" shape-rendering="geometricPrecision"/>
<text x="352" y="706.771" font-size="11" text-anchor="end" stroke="#000" stroke-width="0.22" textLength="15" lengthAdjust="spacingAndGlyphs" >6.5</text>
<line x1="354.5" y1="704.5" x2="359" y2="704.5" stroke="#202020" stroke-width="1" shape-rendering="geometricPrecision"/>
<text x="352" y="741.486" font-size="11" text-anchor="end" stroke="#000" stroke-width="0.22" textLength="15" lengthAdjust="spacingAndGlyphs" >6.4</text>
<line x1="354.5" y1="738.5" x2="359" y2="738.5" stroke="#202020" stroke-width="1" shape-rendering="geometricPrecision"/>
<text x="352" y="776.2" font-size="11" text-anchor="end" stroke="#000" stroke-width="0.22" textLength="15" lengthAdjust="spacingAndGlyphs" >6.3</text>
<line x1="354.5" y1="771.5" x2="359" y2="771.5" stroke="#202020" stroke-width="1" shape-rendering="geometricPrecision"/>
<line x1="360.5" y1="772.5" x2="360.5" y2="777.5" stroke="#202020" stroke-width="1" shape-rendering="geometricPrecision"/>
<text x="359.7" y="788.2" font-size="11" text-anchor="middle" stroke="#000" stroke-width="0.22" textLength="25.5" lengthAdjust="spacingAndGlyphs" >00:00</text>
<line x1="415.5" y1="772.5" x2="415.5" y2="777.5" stroke="#202020" stroke-width="1" shape-rendering="geometricPrecision"/>
<text x="413.8" y="788.2" font-size="11" text-anchor="middle" stroke="#000" stroke-width="0.22" textLength="25.5" lengthAdjust="spacingAndGlyphs" >02:00</text>
<line x1="469.5" y1="772.5" x2="469.5" y2="777.5" stroke="#202020" stroke-width="1" shape-rendering="geometricPrecision"/>
<text x="467.9" y="788.2" font-size="11" text-anchor="middle" stroke="#000" stroke-width="0.22" textLength="25.5" lengthAdjust="spacingAndGlyphs" >04:00</text>
<line x1="523.5" y1="772.5" x2="523.5" y2="777.5" stroke="#202020" stroke-width="1" shape-rendering="geometricPrecision"/>
<text x="522" y="788.2" font-size="11" text-anchor="middle" stroke="#000" stroke-width="0.22" textLength="25.5" lengthAdjust="spacingAndGlyphs" >06:00</text>
<line x1="567.5" y1="772.5" x2="567.5" y2="777.5" stroke="#202020" stroke-width="1" shape-rendering="geometricPrecision"/>
<text x="567.2" y="788.2" font-size="11" text-anchor="middle" stroke="#000" stroke-width="0.22" textLength="25.5" lengthAdjust="spacingAndGlyphs" >07:40</text>
<text x="455" y="803.2" font-size="11" text-anchor="middle" stroke="#000" stroke-width="0.22" textLength="21" lengthAdjust="spacingAndGlyphs" >Time</text>
<text transform="translate(332.5 648.2) rotate(-90) scale(0.9 1)" font-size="11" text-anchor="middle" stroke="#000" stroke-width="0.22" >Temperature (K)</text>
<clipPath id="clipT"><rect x="360" y="528" width="208" height="243"/></clipPath><g clip-path="url(#clipT)">
<polygon points="360.0,691.4 361.0,693.2 362.0,694.4 363.0,695.0 364.0,694.3 365.0,693.2 366.0,691.1 367.0,693.0 368.0,695.0 369.0,694.7 370.0,695.0 371.0,695.0 372.0,695.0 373.0,693.9 374.0,693.1 375.0,692.1 376.0,693.0 377.0,693.5 378.0,694.3 379.0,694.6 380.0,693.4 381.0,693.8 382.0,693.8 383.0,695.0 384.0,695.0 385.0,693.3 386.0,695.0 387.0,693.9 388.0,694.4 389.0,692.8 390.0,693.5 391.0,694.2 392.0,695.0 393.0,694.5 394.0,693.1 395.0,692.2 396.0,691.6 397.0,691.0 398.0,690.0 399.0,690.0 400.0,690.0 401.0,690.0 402.0,690.0 403.0,690.0 404.0,690.0 405.0,690.0 406.0,691.8 407.0,693.0 408.0,694.5 409.0,694.6 410.0,695.0 411.0,695.0 412.0,695.0 413.0,694.6 414.0,694.4 415.0,694.4 416.0,694.2 417.0,692.5 418.0,692.6 419.0,693.6 420.0,693.6 421.0,695.0 422.0,693.7 423.0,695.0 424.0,693.1 425.0,694.8 426.0,694.8 427.0,694.9 428.0,693.4 429.0,691.9 430.0,692.5 431.0,692.9 432.0,693.4 433.0,695.0 434.0,694.7 435.0,695.0 436.0,695.0 437.0,692.9 438.0,693.0 439.0,693.7 440.0,691.9 441.0,692.3 442.0,690.7 443.0,690.0 444.0,690.0 445.0,690.3 446.0,692.2 447.0,690.2 448.0,690.0 449.0,691.9 450.0,692.0 451.0,691.1 452.0,692.4 453.0,693.5 454.0,692.2 455.0,691.5 456.0,692.5 457.0,693.7 458.0,695.0 459.0,693.9 460.0,695.0 461.0,693.9 462.0,694.6 463.0,695.0 464.0,695.0 465.0,693.1 466.0,691.4 467.0,690.0 468.0,690.9 469.0,690.3 470.0,690.0 471.0,690.0 472.0,691.5 473.0,692.1 474.0,693.2 475.0,691.1 476.0,690.6 477.0,692.1 478.0,691.8 479.0,692.0 480.0,693.4 481.0,694.5 482.0,694.5 483.0,693.8 484.0,692.9 485.0,691.2 486.0,692.0 487.0,691.6 488.0,693.3 489.0,695.0 490.0,693.8 491.0,694.9 492.0,693.4 493.0,692.0 494.0,690.3 495.0,690.0 496.0,690.0 497.0,690.1 498.0,692.2 499.0,690.4 500.0,691.5 501.0,690.0 502.0,690.0 503.0,690.6 504.0,690.2 505.0,690.5 506.0,691.5 507.0,697.0 508.0,697.0 509.0,698.2 510.0,697.9 511.0,698.7 512.0,699.9 513.0,697.9 514.0,699.8 515.0,700.0 516.0,701.4 517.0,700.2 518.0,698.5 519.0,697.5 520.0,697.2 521.0,697.0 522.0,699.0 523.0,699.0 524.0,699.0 525.0,699.0 526.0,699.0 527.0,699.8 528.0,699.5 529.0,699.0 530.0,699.0 531.0,699.4 532.0,699.0 533.0,699.0 534.0,699.0 535.0,699.0 536.0,699.0 537.0,699.0 538.0,699.4 539.0,699.0 540.0,699.0 541.0,699.0 542.0,699.0 543.0,699.1 544.0,699.0 545.0,699.0 546.0,699.3 547.0,699.8 548.0,699.8 549.0,700.3 550.0,700.0 551.0,699.3 552.0,700.1 553.0,700.1 554.0,700.5 555.0,700.0 556.0,699.0 557.0,699.0 558.0,700.0 559.0,701.0 560.0,701.5 561.0,701.9 562.0,701.1 563.0,701.5 564.0,701.6 565.0,701.2 566.0,700.1 567.0,700.9 568.0,699.7 568.0,724.8 567.0,725.1 566.0,724.9 565.0,724.7 564.0,724.9 563.0,725.5 562.0,725.8 561.0,726.9 560.0,727.0 559.0,727.0 558.0,726.8 557.0,726.5 556.0,727.0 555.0,726.6 554.0,726.4 553.0,725.7 552.0,726.3 551.0,726.8 550.0,726.9 549.0,727.0 548.0,727.0 547.0,727.0 546.0,726.4 545.0,726.1 544.0,726.3 543.0,726.2 542.0,725.3 541.0,726.1 540.0,727.0 539.0,727.0 538.0,727.0 537.0,726.2 536.0,725.3 535.0,726.1 534.0,727.0 533.0,727.0 532.0,726.5 531.0,725.7 530.0,726.0 529.0,726.1 528.0,725.6 527.0,726.2 526.0,726.5 525.0,727.0 524.0,727.0 523.0,727.0 522.0,727.0 521.0,735.0 520.0,735.0 519.0,734.6 518.0,735.0 517.0,735.0 516.0,735.0 515.0,735.0 514.0,734.8 513.0,734.7 512.0,734.5 511.0,735.0 510.0,734.8 509.0,735.0 508.0,735.0 507.0,735.0 506.0,740.0 505.0,738.3 504.0,737.2 503.0,736.2 502.0,736.3 501.0,735.0 500.0,736.3 499.0,736.6 498.0,737.1 497.0,736.1 496.0,737.6 495.0,739.1 494.0,740.0 493.0,740.2 492.0,740.4 491.0,738.9 490.0,738.3 489.0,738.5 488.0,738.4 487.0,740.5 486.0,741.0 485.0,740.1 484.0,739.5 483.0,740.8 482.0,739.3 481.0,738.0 480.0,735.9 479.0,737.4 478.0,738.6 477.0,737.4 476.0,736.9 475.0,737.7 474.0,738.8 473.0,740.1 472.0,741.0 471.0,739.7 470.0,741.0 469.0,741.0 468.0,740.0 467.0,739.0 466.0,741.0 465.0,740.4 464.0,738.6 463.0,739.5 462.0,737.9 461.0,735.8 460.0,734.0 459.0,734.0 458.0,734.6 457.0,735.9 456.0,735.8 455.0,736.8 454.0,735.7 453.0,737.4 452.0,737.6 451.0,736.7 450.0,737.5 449.0,736.9 448.0,738.5 447.0,737.3 446.0,737.1 445.0,736.1 444.0,736.7 443.0,737.8 442.0,737.2 441.0,735.3 440.0,736.6 439.0,737.2 438.0,739.3 437.0,737.5 436.0,739.1 435.0,738.4 434.0,739.5 433.0,740.9 432.0,740.5 431.0,741.0 430.0,739.5 429.0,740.1 428.0,738.8 427.0,736.9 426.0,737.7 425.0,735.9 424.0,736.9 423.0,737.5 422.0,739.0 421.0,736.9 420.0,734.7 419.0,735.2 418.0,734.0 417.0,734.0 416.0,734.0 415.0,734.0 414.0,734.3 413.0,734.6 412.0,734.2 411.0,734.0 410.0,735.7 409.0,734.0 408.0,734.0 407.0,734.5 406.0,735.7 405.0,735.2 404.0,737.2 403.0,738.8 402.0,738.8 401.0,739.8 400.0,739.3 399.0,739.0 398.0,737.4 397.0,735.6 396.0,736.9 395.0,737.3 394.0,735.3 393.0,734.4 392.0,734.2 391.0,734.0 390.0,734.0 389.0,734.4 388.0,735.7 387.0,735.2 386.0,734.0 385.0,734.5 384.0,735.8 383.0,734.0 382.0,734.0 381.0,734.0 380.0,734.0 379.0,734.0 378.0,734.0 377.0,734.8 376.0,734.0 375.0,734.3 374.0,736.1 373.0,734.0 372.0,734.4 371.0,736.3 370.0,737.0 369.0,736.0 368.0,736.0 367.0,734.0 366.0,736.1 365.0,735.0 364.0,734.0 363.0,734.7 362.0,735.8 361.0,737.8 360.0,739.8" fill="#FF0030" />
<polygon points="360.0,584.0 361.0,584.0 362.0,584.0 363.0,584.0 364.0,585.1 365.0,587.1 366.0,586.3 367.0,588.1 368.0,587.0 369.0,586.5 370.0,588.3 371.0,589.0 372.0,588.2 373.0,586.9 374.0,584.8 375.0,586.5 376.0,584.7 377.0,584.0 378.0,585.1 379.0,586.6 380.0,587.6 381.0,586.1 382.0,585.7 383.0,587.0 384.0,586.9 385.0,584.9 386.0,587.0 387.0,588.6 388.0,589.0 389.0,587.8 390.0,586.7 391.0,584.5 392.0,584.0 393.0,584.0 394.0,584.6 395.0,584.2 396.0,584.0 397.0,585.6 398.0,586.6 399.0,586.3 400.0,586.1 401.0,586.7 402.0,586.1 403.0,586.2 404.0,587.6 405.0,589.0 406.0,589.0 407.0,589.0 408.0,588.6 409.0,587.3 410.0,585.7 411.0,584.0 412.0,585.5 413.0,586.0 414.0,585.7 415.0,584.0 416.0,585.2 417.0,585.0 418.0,584.0 419.0,584.6 420.0,584.7 421.0,586.6 422.0,587.7 423.0,587.6 424.0,588.9 425.0,589.0 426.0,589.0 427.0,587.7 428.0,585.7 429.0,586.5 430.0,584.8 431.0,586.4 432.0,584.7 433.0,586.0 434.0,585.4 435.0,586.4 436.0,587.1 437.0,586.2 438.0,586.7 439.0,585.1 440.0,584.0 441.0,584.0 442.0,584.5 443.0,584.0 444.0,585.6 445.0,584.0 446.0,584.6 447.0,584.0 448.0,584.0 449.0,584.0 450.0,584.0 451.0,585.4 452.0,584.0 453.0,584.0 454.0,585.1 455.0,584.0 456.0,584.9 457.0,585.1 458.0,584.1 459.0,585.7 460.0,586.8 461.0,588.5 462.0,589.0 463.0,588.9 464.0,588.6 465.0,587.3 466.0,585.8 467.0,585.1 468.0,585.9 469.0,584.0 470.0,585.4 471.0,587.2 472.0,585.5 473.0,586.1 474.0,584.4 475.0,584.0 476.0,584.0 477.0,586.0 478.0,584.0 479.0,584.0 480.0,585.6 481.0,584.0 482.0,584.0 483.0,584.0 484.0,584.0 485.0,584.9 486.0,584.0 487.0,584.6 488.0,586.3 489.0,585.0 490.0,584.5 491.0,584.6 492.0,584.0 493.0,584.7 494.0,585.9 495.0,587.6 496.0,588.5 497.0,587.4 498.0,586.6 499.0,584.9 500.0,587.0 501.0,585.7 502.0,585.2 503.0,586.0 504.0,584.5 505.0,586.3 506.0,585.9 507.0,589.0 508.0,589.6 509.0,589.0 510.0,589.6 511.0,590.1 512.0,589.0 513.0,589.0 514.0,589.0 515.0,589.0 516.0,589.1 517.0,589.0 518.0,589.0 519.0,589.0 520.0,589.0 521.0,589.0 522.0,590.5 523.0,590.5 524.0,591.2 525.0,590.6 526.0,591.4 527.0,591.5 528.0,592.3 529.0,592.1 530.0,591.6 531.0,591.4 532.0,592.5 533.0,593.0 534.0,593.0 535.0,593.0 536.0,592.4 537.0,593.0 538.0,593.0 539.0,593.0 540.0,593.0 541.0,593.0 542.0,593.0 543.0,593.0 544.0,591.8 545.0,592.2 546.0,593.0 547.0,591.9 548.0,591.5 549.0,592.4 550.0,592.0 551.0,592.1 552.0,591.9 553.0,592.7 554.0,592.7 555.0,592.3 556.0,592.6 557.0,593.0 558.0,591.8 559.0,592.2 560.0,592.5 561.0,592.9 562.0,593.0 563.0,593.0 564.0,593.0 565.0,592.5 566.0,592.9 567.0,591.8 568.0,592.8 568.0,606.0 567.0,606.1 566.0,607.0 565.0,606.8 564.0,607.0 563.0,606.3 562.0,605.4 561.0,606.3 560.0,607.0 559.0,606.9 558.0,606.3 557.0,607.0 556.0,607.0 555.0,606.6 554.0,607.0 553.0,606.8 552.0,607.0 551.0,607.0 550.0,606.7 549.0,605.9 548.0,607.0 547.0,606.2 546.0,606.0 545.0,607.0 544.0,606.2 543.0,605.4 542.0,605.4 541.0,606.4 540.0,607.0 539.0,607.0 538.0,606.3 537.0,605.6 536.0,604.9 535.0,604.3 534.0,604.9 533.0,606.0 532.0,605.4 531.0,604.5 530.0,604.2 529.0,604.8 528.0,605.5 527.0,606.1 526.0,607.0 525.0,607.0 524.0,606.6 523.0,606.3 522.0,607.0 521.0,612.7 520.0,613.7 519.0,614.0 518.0,616.0 517.0,616.0 516.0,616.0 515.0,616.0 514.0,616.0 513.0,616.0 512.0,614.6 511.0,613.9 510.0,614.3 509.0,615.4 508.0,615.8 507.0,616.0 506.0,616.9 505.0,618.1 504.0,618.4 503.0,618.0 502.0,617.9 501.0,620.0 500.0,620.0 499.0,619.0 498.0,617.0 497.0,618.4 496.0,619.1 495.0,617.6 494.0,618.8 493.0,618.4 492.0,617.3 491.0,618.1 490.0,617.0 489.0,615.3 488.0,616.3 487.0,618.2 486.0,618.8 485.0,617.5 484.0,617.5 483.0,615.6 482.0,615.6 481.0,615.6 480.0,617.0 479.0,618.8 478.0,617.9 477.0,618.2 476.0,618.2 475.0,617.3 474.0,617.6 473.0,619.4 472.0,618.0 471.0,620.0 470.0,619.1 469.0,617.3 468.0,616.9 467.0,616.3 466.0,617.9 465.0,620.0 464.0,620.0 463.0,619.8 462.0,618.3 461.0,617.4 460.0,618.2 459.0,616.2 458.0,618.4 457.0,617.7 456.0,618.0 455.0,616.5 454.0,618.5 453.0,618.7 452.0,617.2 451.0,615.5 450.0,617.0 449.0,616.5 448.0,616.3 447.0,617.4 446.0,615.6 445.0,615.9 444.0,615.2 443.0,614.0 442.0,614.5 441.0,614.6 440.0,614.2 439.0,614.9 438.0,616.1 437.0,616.4 436.0,618.6 435.0,616.4 434.0,618.4 433.0,617.3 432.0,618.3 431.0,616.1 430.0,615.9 429.0,615.7 428.0,614.0 427.0,615.2 426.0,616.2 425.0,617.8 424.0,619.3 423.0,617.4 422.0,615.4 421.0,614.0 420.0,614.0 419.0,614.4 418.0,616.2 417.0,616.4 416.0,618.2 415.0,616.9 414.0,616.4 413.0,615.7 412.0,616.6 411.0,618.3 410.0,618.0 409.0,619.1 408.0,619.5 407.0,618.0 406.0,619.5 405.0,620.0 404.0,620.0 403.0,618.8 402.0,616.9 401.0,616.9 400.0,615.1 399.0,616.6 398.0,615.2 397.0,616.5 396.0,614.3 395.0,614.0 394.0,614.0 393.0,614.0 392.0,615.3 391.0,616.6 390.0,617.4 389.0,616.9 388.0,617.5 387.0,619.2 386.0,619.5 385.0,619.1 384.0,620.0 383.0,620.0 382.0,620.0 381.0,619.5 380.0,617.8 379.0,619.1 378.0,620.0 377.0,618.7 376.0,619.1 375.0,619.1 374.0,616.9 373.0,616.7 372.0,615.6 371.0,616.2 370.0,615.0 369.0,616.4 368.0,617.5 367.0,617.6 366.0,617.0 365.0,618.0 364.0,617.5 363.0,615.7 362.0,617.7 361.0,616.3 360.0,616.9" fill="#00FFC6" />
<circle cx="363" cy="694.263" r="2.1" fill="#FF0030" stroke="none" stroke-width="0" shape-rendering="geometricPrecision"/>
<circle cx="364" cy="692.858" r="2.1" fill="#FF0030" stroke="none" stroke-width="0" shape-rendering="geometricPrecision"/>
<circle cx="365" cy="693.29" r="2.1" fill="#FF0030" stroke="none" stroke-width="0" shape-rendering="geometricPrecision"/>
<circle cx="366" cy="691.548" r="2.1" fill="#FF0030" stroke="none" stroke-width="0" shape-rendering="geometricPrecision"/>
<circle cx="368" cy="692.601" r="2.1" fill="#FF0030" stroke="none" stroke-width="0" shape-rendering="geometricPrecision"/>
<circle cx="369" cy="692.583" r="2.1" fill="#FF0030" stroke="none" stroke-width="0" shape-rendering="geometricPrecision"/>
<circle cx="370" cy="695.447" r="2.1" fill="#FF0030" stroke="none" stroke-width="0" shape-rendering="geometricPrecision"/>
<circle cx="372" cy="693.299" r="2.1" fill="#FF0030" stroke="none" stroke-width="0" shape-rendering="geometricPrecision"/>
<circle cx="373" cy="694.238" r="2.1" fill="#FF0030" stroke="none" stroke-width="0" shape-rendering="geometricPrecision"/>
<circle cx="378" cy="692.877" r="2.1" fill="#FF0030" stroke="none" stroke-width="0" shape-rendering="geometricPrecision"/>
<circle cx="380" cy="691.149" r="2.1" fill="#FF0030" stroke="none" stroke-width="0" shape-rendering="geometricPrecision"/>
<circle cx="381" cy="691.397" r="2.1" fill="#FF0030" stroke="none" stroke-width="0" shape-rendering="geometricPrecision"/>
<circle cx="383" cy="695.456" r="2.1" fill="#FF0030" stroke="none" stroke-width="0" shape-rendering="geometricPrecision"/>
<circle cx="386" cy="694.567" r="2.1" fill="#FF0030" stroke="none" stroke-width="0" shape-rendering="geometricPrecision"/>
<circle cx="388" cy="692.284" r="2.1" fill="#FF0030" stroke="none" stroke-width="0" shape-rendering="geometricPrecision"/>
<circle cx="389" cy="693.11" r="2.1" fill="#FF0030" stroke="none" stroke-width="0" shape-rendering="geometricPrecision"/>
<circle cx="390" cy="692.231" r="2.1" fill="#FF0030" stroke="none" stroke-width="0" shape-rendering="geometricPrecision"/>
<circle cx="391" cy="692.71" r="2.1" fill="#FF0030" stroke="none" stroke-width="0" shape-rendering="geometricPrecision"/>
<circle cx="392" cy="693.108" r="2.1" fill="#FF0030" stroke="none" stroke-width="0" shape-rendering="geometricPrecision"/>
<circle cx="393" cy="693.105" r="2.1" fill="#FF0030" stroke="none" stroke-width="0" shape-rendering="geometricPrecision"/>
<circle cx="395" cy="691.556" r="2.1" fill="#FF0030" stroke="none" stroke-width="0" shape-rendering="geometricPrecision"/>
<circle cx="400" cy="690.318" r="2.1" fill="#FF0030" stroke="none" stroke-width="0" shape-rendering="geometricPrecision"/>
<circle cx="404" cy="688.683" r="2.1" fill="#FF0030" stroke="none" stroke-width="0" shape-rendering="geometricPrecision"/>
<circle cx="408" cy="693.699" r="2.1" fill="#FF0030" stroke="none" stroke-width="0" shape-rendering="geometricPrecision"/>
<circle cx="410" cy="693.446" r="2.1" fill="#FF0030" stroke="none" stroke-width="0" shape-rendering="geometricPrecision"/>
<circle cx="414" cy="694.909" r="2.1" fill="#FF0030" stroke="none" stroke-width="0" shape-rendering="geometricPrecision"/>
<circle cx="415" cy="693.6" r="2.1" fill="#FF0030" stroke="none" stroke-width="0" shape-rendering="geometricPrecision"/>
<circle cx="419" cy="691.622" r="2.1" fill="#FF0030" stroke="none" stroke-width="0" shape-rendering="geometricPrecision"/>
<circle cx="423" cy="692.946" r="2.1" fill="#FF0030" stroke="none" stroke-width="0" shape-rendering="geometricPrecision"/>
<circle cx="427" cy="695.114" r="2.1" fill="#FF0030" stroke="none" stroke-width="0" shape-rendering="geometricPrecision"/>
<circle cx="430" cy="690.77" r="2.1" fill="#FF0030" stroke="none" stroke-width="0" shape-rendering="geometricPrecision"/>
<circle cx="432" cy="692.123" r="2.1" fill="#FF0030" stroke="none" stroke-width="0" shape-rendering="geometricPrecision"/>
<circle cx="434" cy="694.626" r="2.1" fill="#FF0030" stroke="none" stroke-width="0" shape-rendering="geometricPrecision"/>
<circle cx="435" cy="693.247" r="2.1" fill="#FF0030" stroke="none" stroke-width="0" shape-rendering="geometricPrecision"/>
<circle cx="437" cy="693.186" r="2.1" fill="#FF0030" stroke="none" stroke-width="0" shape-rendering="geometricPrecision"/>
<circle cx="440" cy="690.707" r="2.1" fill="#FF0030" stroke="none" stroke-width="0" shape-rendering="geometricPrecision"/>
<circle cx="444" cy="688.732" r="2.1" fill="#FF0030" stroke="none" stroke-width="0" shape-rendering="geometricPrecision"/>
<circle cx="445" cy="690.197" r="2.1" fill="#FF0030" stroke="none" stroke-width="0" shape-rendering="geometricPrecision"/>
<circle cx="446" cy="690.595" r="2.1" fill="#FF0030" stroke="none" stroke-width="0" shape-rendering="geometricPrecision"/>
<circle cx="447" cy="688.998" r="2.1" fill="#FF0030" stroke="none" stroke-width="0" shape-rendering="geometricPrecision"/>
<circle cx="448" cy="688.948" r="2.1" fill="#FF0030" stroke="none" stroke-width="0" shape-rendering="geometricPrecision"/>
<circle cx="449" cy="692.306" r="2.1" fill="#FF0030" stroke="none" stroke-width="0" shape-rendering="geometricPrecision"/>
<circle cx="451" cy="691.314" r="2.1" fill="#FF0030" stroke="none" stroke-width="0" shape-rendering="geometricPrecision"/>
<circle cx="454" cy="690.958" r="2.1" fill="#FF0030" stroke="none" stroke-width="0" shape-rendering="geometricPrecision"/>
<circle cx="455" cy="690.468" r="2.1" fill="#FF0030" stroke="none" stroke-width="0" shape-rendering="geometricPrecision"/>
<circle cx="456" cy="692.857" r="2.1" fill="#FF0030" stroke="none" stroke-width="0" shape-rendering="geometricPrecision"/>
<circle cx="459" cy="692.744" r="2.1" fill="#FF0030" stroke="none" stroke-width="0" shape-rendering="geometricPrecision"/>
<circle cx="460" cy="693.162" r="2.1" fill="#FF0030" stroke="none" stroke-width="0" shape-rendering="geometricPrecision"/>
<circle cx="461" cy="691.513" r="2.1" fill="#FF0030" stroke="none" stroke-width="0" shape-rendering="geometricPrecision"/>
<circle cx="465" cy="693.529" r="2.1" fill="#FF0030" stroke="none" stroke-width="0" shape-rendering="geometricPrecision"/>
<circle cx="466" cy="691.37" r="2.1" fill="#FF0030" stroke="none" stroke-width="0" shape-rendering="geometricPrecision"/>
<circle cx="467" cy="690.347" r="2.1" fill="#FF0030" stroke="none" stroke-width="0" shape-rendering="geometricPrecision"/>
<circle cx="470" cy="687.658" r="2.1" fill="#FF0030" stroke="none" stroke-width="0" shape-rendering="geometricPrecision"/>
<circle cx="472" cy="690.236" r="2.1" fill="#FF0030" stroke="none" stroke-width="0" shape-rendering="geometricPrecision"/>
<circle cx="473" cy="692.249" r="2.1" fill="#FF0030" stroke="none" stroke-width="0" shape-rendering="geometricPrecision"/>
<circle cx="475" cy="689.94" r="2.1" fill="#FF0030" stroke="none" stroke-width="0" shape-rendering="geometricPrecision"/>
<circle cx="479" cy="691.141" r="2.1" fill="#FF0030" stroke="none" stroke-width="0" shape-rendering="geometricPrecision"/>
<circle cx="480" cy="690.995" r="2.1" fill="#FF0030" stroke="none" stroke-width="0" shape-rendering="geometricPrecision"/>
<circle cx="482" cy="694.893" r="2.1" fill="#FF0030" stroke="none" stroke-width="0" shape-rendering="geometricPrecision"/>
<circle cx="483" cy="693.28" r="2.1" fill="#FF0030" stroke="none" stroke-width="0" shape-rendering="geometricPrecision"/>
<circle cx="487" cy="689.743" r="2.1" fill="#FF0030" stroke="none" stroke-width="0" shape-rendering="geometricPrecision"/>
<circle cx="491" cy="695.006" r="2.1" fill="#FF0030" stroke="none" stroke-width="0" shape-rendering="geometricPrecision"/>
<circle cx="495" cy="688.726" r="2.1" fill="#FF0030" stroke="none" stroke-width="0" shape-rendering="geometricPrecision"/>
<circle cx="497" cy="689.626" r="2.1" fill="#FF0030" stroke="none" stroke-width="0" shape-rendering="geometricPrecision"/>
<circle cx="498" cy="692.316" r="2.1" fill="#FF0030" stroke="none" stroke-width="0" shape-rendering="geometricPrecision"/>
<circle cx="499" cy="690.43" r="2.1" fill="#FF0030" stroke="none" stroke-width="0" shape-rendering="geometricPrecision"/>
<circle cx="500" cy="691.532" r="2.1" fill="#FF0030" stroke="none" stroke-width="0" shape-rendering="geometricPrecision"/>
<circle cx="502" cy="688.348" r="2.1" fill="#FF0030" stroke="none" stroke-width="0" shape-rendering="geometricPrecision"/>
<circle cx="503" cy="690.974" r="2.1" fill="#FF0030" stroke="none" stroke-width="0" shape-rendering="geometricPrecision"/>
<circle cx="505" cy="688.187" r="2.1" fill="#FF0030" stroke="none" stroke-width="0" shape-rendering="geometricPrecision"/>
<circle cx="508" cy="696.158" r="2.1" fill="#FF0030" stroke="none" stroke-width="0" shape-rendering="geometricPrecision"/>
<circle cx="509" cy="695.956" r="2.1" fill="#FF0030" stroke="none" stroke-width="0" shape-rendering="geometricPrecision"/>
<circle cx="512" cy="699.382" r="2.1" fill="#FF0030" stroke="none" stroke-width="0" shape-rendering="geometricPrecision"/>
<circle cx="514" cy="698.423" r="2.1" fill="#FF0030" stroke="none" stroke-width="0" shape-rendering="geometricPrecision"/>
<circle cx="515" cy="699.823" r="2.1" fill="#FF0030" stroke="none" stroke-width="0" shape-rendering="geometricPrecision"/>
<circle cx="516" cy="699.795" r="2.1" fill="#FF0030" stroke="none" stroke-width="0" shape-rendering="geometricPrecision"/>
<circle cx="518" cy="696.387" r="2.1" fill="#FF0030" stroke="none" stroke-width="0" shape-rendering="geometricPrecision"/>
<circle cx="519" cy="696.771" r="2.1" fill="#FF0030" stroke="none" stroke-width="0" shape-rendering="geometricPrecision"/>
<circle cx="520" cy="696.843" r="2.1" fill="#FF0030" stroke="none" stroke-width="0" shape-rendering="geometricPrecision"/>
<circle cx="522" cy="698.997" r="2.1" fill="#FF0030" stroke="none" stroke-width="0" shape-rendering="geometricPrecision"/>
<circle cx="523" cy="698.546" r="2.1" fill="#FF0030" stroke="none" stroke-width="0" shape-rendering="geometricPrecision"/>
<circle cx="525" cy="696.564" r="2.1" fill="#FF0030" stroke="none" stroke-width="0" shape-rendering="geometricPrecision"/>
<circle cx="526" cy="696.815" r="2.1" fill="#FF0030" stroke="none" stroke-width="0" shape-rendering="geometricPrecision"/>
<circle cx="528" cy="698.571" r="2.1" fill="#FF0030" stroke="none" stroke-width="0" shape-rendering="geometricPrecision"/>
<circle cx="529" cy="698.727" r="2.1" fill="#FF0030" stroke="none" stroke-width="0" shape-rendering="geometricPrecision"/>
<circle cx="530" cy="698.407" r="2.1" fill="#FF0030" stroke="none" stroke-width="0" shape-rendering="geometricPrecision"/>
<circle cx="534" cy="698.632" r="2.1" fill="#FF0030" stroke="none" stroke-width="0" shape-rendering="geometricPrecision"/>
<circle cx="536" cy="697.321" r="2.1" fill="#FF0030" stroke="none" stroke-width="0" shape-rendering="geometricPrecision"/>
<circle cx="537" cy="696.564" r="2.1" fill="#FF0030" stroke="none" stroke-width="0" shape-rendering="geometricPrecision"/>
<circle cx="538" cy="697.483" r="2.1" fill="#FF0030" stroke="none" stroke-width="0" shape-rendering="geometricPrecision"/>
<circle cx="539" cy="699.08" r="2.1" fill="#FF0030" stroke="none" stroke-width="0" shape-rendering="geometricPrecision"/>
<circle cx="540" cy="697.003" r="2.1" fill="#FF0030" stroke="none" stroke-width="0" shape-rendering="geometricPrecision"/>
<circle cx="542" cy="698.194" r="2.1" fill="#FF0030" stroke="none" stroke-width="0" shape-rendering="geometricPrecision"/>
<circle cx="544" cy="697.804" r="2.1" fill="#FF0030" stroke="none" stroke-width="0" shape-rendering="geometricPrecision"/>
<circle cx="545" cy="698.96" r="2.1" fill="#FF0030" stroke="none" stroke-width="0" shape-rendering="geometricPrecision"/>
<circle cx="548" cy="700.055" r="2.1" fill="#FF0030" stroke="none" stroke-width="0" shape-rendering="geometricPrecision"/>
<circle cx="549" cy="698.991" r="2.1" fill="#FF0030" stroke="none" stroke-width="0" shape-rendering="geometricPrecision"/>
<circle cx="550" cy="699.673" r="2.1" fill="#FF0030" stroke="none" stroke-width="0" shape-rendering="geometricPrecision"/>
<circle cx="551" cy="697.963" r="2.1" fill="#FF0030" stroke="none" stroke-width="0" shape-rendering="geometricPrecision"/>
<circle cx="555" cy="700.286" r="2.1" fill="#FF0030" stroke="none" stroke-width="0" shape-rendering="geometricPrecision"/>
<circle cx="557" cy="697.335" r="2.1" fill="#FF0030" stroke="none" stroke-width="0" shape-rendering="geometricPrecision"/>
<circle cx="558" cy="698.079" r="2.1" fill="#FF0030" stroke="none" stroke-width="0" shape-rendering="geometricPrecision"/>
<circle cx="559" cy="698.969" r="2.1" fill="#FF0030" stroke="none" stroke-width="0" shape-rendering="geometricPrecision"/>
<circle cx="561" cy="702.321" r="2.1" fill="#FF0030" stroke="none" stroke-width="0" shape-rendering="geometricPrecision"/>
<circle cx="563" cy="699.36" r="2.1" fill="#FF0030" stroke="none" stroke-width="0" shape-rendering="geometricPrecision"/>
<circle cx="564" cy="701.567" r="2.1" fill="#FF0030" stroke="none" stroke-width="0" shape-rendering="geometricPrecision"/>
<circle cx="566" cy="700.13" r="2.1" fill="#FF0030" stroke="none" stroke-width="0" shape-rendering="geometricPrecision"/>
<circle cx="567" cy="699.581" r="2.1" fill="#FF0030" stroke="none" stroke-width="0" shape-rendering="geometricPrecision"/>
<circle cx="568" cy="698.64" r="2.1" fill="#FF0030" stroke="none" stroke-width="0" shape-rendering="geometricPrecision"/>
<circle cx="360" cy="740.893" r="2.1" fill="#FF0030" stroke="none" stroke-width="0" shape-rendering="geometricPrecision"/>
<circle cx="361" cy="739.423" r="2.1" fill="#FF0030" stroke="none" stroke-width="0" shape-rendering="geometricPrecision"/>
<circle cx="364" cy="735.634" r="2.1" fill="#FF0030" stroke="none" stroke-width="0" shape-rendering="geometricPrecision"/>
<circle cx="365" cy="736.707" r="2.1" fill="#FF0030" stroke="none" stroke-width="0" shape-rendering="geometricPrecision"/>
<circle cx="366" cy="738.196" r="2.1" fill="#FF0030" stroke="none" stroke-width="0" shape-rendering="geometricPrecision"/>
<circle cx="368" cy="737.037" r="2.1" fill="#FF0030" stroke="none" stroke-width="0" shape-rendering="geometricPrecision"/>
<circle cx="369" cy="737.08" r="2.1" fill="#FF0030" stroke="none" stroke-width="0" shape-rendering="geometricPrecision"/>
<circle cx="370" cy="739.42" r="2.1" fill="#FF0030" stroke="none" stroke-width="0" shape-rendering="geometricPrecision"/>
<circle cx="371" cy="736.307" r="2.1" fill="#FF0030" stroke="none" stroke-width="0" shape-rendering="geometricPrecision"/>
<circle cx="372" cy="734.659" r="2.1" fill="#FF0030" stroke="none" stroke-width="0" shape-rendering="geometricPrecision"/>
<circle cx="374" cy="735.903" r="2.1" fill="#FF0030" stroke="none" stroke-width="0" shape-rendering="geometricPrecision"/>
<circle cx="376" cy="733.603" r="2.1" fill="#FF0030" stroke="none" stroke-width="0" shape-rendering="geometricPrecision"/>
<circle cx="377" cy="736.045" r="2.1" fill="#FF0030" stroke="none" stroke-width="0" shape-rendering="geometricPrecision"/>
<circle cx="378" cy="735.608" r="2.1" fill="#FF0030" stroke="none" stroke-width="0" shape-rendering="geometricPrecision"/>
<circle cx="379" cy="736.109" r="2.1" fill="#FF0030" stroke="none" stroke-width="0" shape-rendering="geometricPrecision"/>
<circle cx="381" cy="733.869" r="2.1" fill="#FF0030" stroke="none" stroke-width="0" shape-rendering="geometricPrecision"/>
<circle cx="382" cy="735.002" r="2.1" fill="#FF0030" stroke="none" stroke-width="0" shape-rendering="geometricPrecision"/>
<circle cx="383" cy="733.866" r="2.1" fill="#FF0030" stroke="none" stroke-width="0" shape-rendering="geometricPrecision"/>
<circle cx="384" cy="735.734" r="2.1" fill="#FF0030" stroke="none" stroke-width="0" shape-rendering="geometricPrecision"/>
<circle cx="385" cy="736.541" r="2.1" fill="#FF0030" stroke="none" stroke-width="0" shape-rendering="geometricPrecision"/>
<circle cx="386" cy="735.219" r="2.1" fill="#FF0030" stroke="none" stroke-width="0" shape-rendering="geometricPrecision"/>
<circle cx="388" cy="737.728" r="2.1" fill="#FF0030" stroke="none" stroke-width="0" shape-rendering="geometricPrecision"/>
<circle cx="390" cy="734.761" r="2.1" fill="#FF0030" stroke="none" stroke-width="0" shape-rendering="geometricPrecision"/>
<circle cx="392" cy="734.898" r="2.1" fill="#FF0030" stroke="none" stroke-width="0" shape-rendering="geometricPrecision"/>
<circle cx="395" cy="737.507" r="2.1" fill="#FF0030" stroke="none" stroke-width="0" shape-rendering="geometricPrecision"/>
<circle cx="396" cy="737.725" r="2.1" fill="#FF0030" stroke="none" stroke-width="0" shape-rendering="geometricPrecision"/>
<circle cx="402" cy="739.901" r="2.1" fill="#FF0030" stroke="none" stroke-width="0" shape-rendering="geometricPrecision"/>
<circle cx="405" cy="735.965" r="2.1" fill="#FF0030" stroke="none" stroke-width="0" shape-rendering="geometricPrecision"/>
<circle cx="407" cy="735.598" r="2.1" fill="#FF0030" stroke="none" stroke-width="0" shape-rendering="geometricPrecision"/>
<circle cx="408" cy="734.799" r="2.1" fill="#FF0030" stroke="none" stroke-width="0" shape-rendering="geometricPrecision"/>
<circle cx="409" cy="733.562" r="2.1" fill="#FF0030" stroke="none" stroke-width="0" shape-rendering="geometricPrecision"/>
<circle cx="410" cy="738.157" r="2.1" fill="#FF0030" stroke="none" stroke-width="0" shape-rendering="geometricPrecision"/>
<circle cx="417" cy="735.425" r="2.1" fill="#FF0030" stroke="none" stroke-width="0" shape-rendering="geometricPrecision"/>
<circle cx="418" cy="735.535" r="2.1" fill="#FF0030" stroke="none" stroke-width="0" shape-rendering="geometricPrecision"/>
<circle cx="419" cy="736.348" r="2.1" fill="#FF0030" stroke="none" stroke-width="0" shape-rendering="geometricPrecision"/>
<circle cx="422" cy="740.048" r="2.1" fill="#FF0030" stroke="none" stroke-width="0" shape-rendering="geometricPrecision"/>
<circle cx="423" cy="739.866" r="2.1" fill="#FF0030" stroke="none" stroke-width="0" shape-rendering="geometricPrecision"/>
<circle cx="424" cy="737.273" r="2.1" fill="#FF0030" stroke="none" stroke-width="0" shape-rendering="geometricPrecision"/>
<circle cx="426" cy="738.998" r="2.1" fill="#FF0030" stroke="none" stroke-width="0" shape-rendering="geometricPrecision"/>
<circle cx="428" cy="739.144" r="2.1" fill="#FF0030" stroke="none" stroke-width="0" shape-rendering="geometricPrecision"/>
<circle cx="429" cy="741.194" r="2.1" fill="#FF0030" stroke="none" stroke-width="0" shape-rendering="geometricPrecision"/>
<circle cx="430" cy="739.347" r="2.1" fill="#FF0030" stroke="none" stroke-width="0" shape-rendering="geometricPrecision"/>
<circle cx="431" cy="741.381" r="2.1" fill="#FF0030" stroke="none" stroke-width="0" shape-rendering="geometricPrecision"/>
<circle cx="432" cy="740.9" r="2.1" fill="#FF0030" stroke="none" stroke-width="0" shape-rendering="geometricPrecision"/>
<circle cx="433" cy="740.639" r="2.1" fill="#FF0030" stroke="none" stroke-width="0" shape-rendering="geometricPrecision"/>
<circle cx="434" cy="741.472" r="2.1" fill="#FF0030" stroke="none" stroke-width="0" shape-rendering="geometricPrecision"/>
<circle cx="436" cy="740.54" r="2.1" fill="#FF0030" stroke="none" stroke-width="0" shape-rendering="geometricPrecision"/>
<circle cx="437" cy="739.177" r="2.1" fill="#FF0030" stroke="none" stroke-width="0" shape-rendering="geometricPrecision"/>
<circle cx="438" cy="740.431" r="2.1" fill="#FF0030" stroke="none" stroke-width="0" shape-rendering="geometricPrecision"/>
<circle cx="440" cy="736.988" r="2.1" fill="#FF0030" stroke="none" stroke-width="0" shape-rendering="geometricPrecision"/>
<circle cx="441" cy="735.419" r="2.1" fill="#FF0030" stroke="none" stroke-width="0" shape-rendering="geometricPrecision"/>
<circle cx="442" cy="737.825" r="2.1" fill="#FF0030" stroke="none" stroke-width="0" shape-rendering="geometricPrecision"/>
<circle cx="443" cy="737.319" r="2.1" fill="#FF0030" stroke="none" stroke-width="0" shape-rendering="geometricPrecision"/>
<circle cx="444" cy="738.832" r="2.1" fill="#FF0030" stroke="none" stroke-width="0" shape-rendering="geometricPrecision"/>
<circle cx="445" cy="737.258" r="2.1" fill="#FF0030" stroke="none" stroke-width="0" shape-rendering="geometricPrecision"/>
<circle cx="446" cy="737.47" r="2.1" fill="#FF0030" stroke="none" stroke-width="0" shape-rendering="geometricPrecision"/>
<circle cx="448" cy="740.298" r="2.1" fill="#FF0030" stroke="none" stroke-width="0" shape-rendering="geometricPrecision"/>
<circle cx="449" cy="736.608" r="2.1" fill="#FF0030" stroke="none" stroke-width="0" shape-rendering="geometricPrecision"/>
<circle cx="451" cy="736.337" r="2.1" fill="#FF0030" stroke="none" stroke-width="0" shape-rendering="geometricPrecision"/>
<circle cx="452" cy="738.419" r="2.1" fill="#FF0030" stroke="none" stroke-width="0" shape-rendering="geometricPrecision"/>
<circle cx="454" cy="735.885" r="2.1" fill="#FF0030" stroke="none" stroke-width="0" shape-rendering="geometricPrecision"/>
<circle cx="457" cy="736.392" r="2.1" fill="#FF0030" stroke="none" stroke-width="0" shape-rendering="geometricPrecision"/>
<circle cx="458" cy="736.161" r="2.1" fill="#FF0030" stroke="none" stroke-width="0" shape-rendering="geometricPrecision"/>
<circle cx="462" cy="739.617" r="2.1" fill="#FF0030" stroke="none" stroke-width="0" shape-rendering="geometricPrecision"/>
<circle cx="465" cy="742.29" r="2.1" fill="#FF0030" stroke="none" stroke-width="0" shape-rendering="geometricPrecision"/>
<circle cx="468" cy="742.138" r="2.1" fill="#FF0030" stroke="none" stroke-width="0" shape-rendering="geometricPrecision"/>
<circle cx="469" cy="742.797" r="2.1" fill="#FF0030" stroke="none" stroke-width="0" shape-rendering="geometricPrecision"/>
<circle cx="470" cy="741.994" r="2.1" fill="#FF0030" stroke="none" stroke-width="0" shape-rendering="geometricPrecision"/>
<circle cx="472" cy="741.754" r="2.1" fill="#FF0030" stroke="none" stroke-width="0" shape-rendering="geometricPrecision"/>
<circle cx="476" cy="737.764" r="2.1" fill="#FF0030" stroke="none" stroke-width="0" shape-rendering="geometricPrecision"/>
<circle cx="477" cy="739.097" r="2.1" fill="#FF0030" stroke="none" stroke-width="0" shape-rendering="geometricPrecision"/>
<circle cx="478" cy="739.301" r="2.1" fill="#FF0030" stroke="none" stroke-width="0" shape-rendering="geometricPrecision"/>
<circle cx="479" cy="738.036" r="2.1" fill="#FF0030" stroke="none" stroke-width="0" shape-rendering="geometricPrecision"/>
<circle cx="480" cy="737.793" r="2.1" fill="#FF0030" stroke="none" stroke-width="0" shape-rendering="geometricPrecision"/>
<circle cx="482" cy="740.172" r="2.1" fill="#FF0030" stroke="none" stroke-width="0" shape-rendering="geometricPrecision"/>
<circle cx="483" cy="741.212" r="2.1" fill="#FF0030" stroke="none" stroke-width="0" shape-rendering="geometricPrecision"/>
<circle cx="484" cy="740.771" r="2.1" fill="#FF0030" stroke="none" stroke-width="0" shape-rendering="geometricPrecision"/>
<circle cx="485" cy="739.91" r="2.1" fill="#FF0030" stroke="none" stroke-width="0" shape-rendering="geometricPrecision"/>
<circle cx="487" cy="742.566" r="2.1" fill="#FF0030" stroke="none" stroke-width="0" shape-rendering="geometricPrecision"/>
<circle cx="490" cy="739.06" r="2.1" fill="#FF0030" stroke="none" stroke-width="0" shape-rendering="geometricPrecision"/>
<circle cx="492" cy="740.076" r="2.1" fill="#FF0030" stroke="none" stroke-width="0" shape-rendering="geometricPrecision"/>
<circle cx="493" cy="741.156" r="2.1" fill="#FF0030" stroke="none" stroke-width="0" shape-rendering="geometricPrecision"/>
<circle cx="496" cy="740.105" r="2.1" fill="#FF0030" stroke="none" stroke-width="0" shape-rendering="geometricPrecision"/>
<circle cx="497" cy="737.17" r="2.1" fill="#FF0030" stroke="none" stroke-width="0" shape-rendering="geometricPrecision"/>
<circle cx="499" cy="737.188" r="2.1" fill="#FF0030" stroke="none" stroke-width="0" shape-rendering="geometricPrecision"/>
<circle cx="500" cy="736.882" r="2.1" fill="#FF0030" stroke="none" stroke-width="0" shape-rendering="geometricPrecision"/>
<circle cx="503" cy="735.953" r="2.1" fill="#FF0030" stroke="none" stroke-width="0" shape-rendering="geometricPrecision"/>
<circle cx="504" cy="737.919" r="2.1" fill="#FF0030" stroke="none" stroke-width="0" shape-rendering="geometricPrecision"/>
<circle cx="505" cy="739.535" r="2.1" fill="#FF0030" stroke="none" stroke-width="0" shape-rendering="geometricPrecision"/>
<circle cx="508" cy="735.82" r="2.1" fill="#FF0030" stroke="none" stroke-width="0" shape-rendering="geometricPrecision"/>
<circle cx="511" cy="736.09" r="2.1" fill="#FF0030" stroke="none" stroke-width="0" shape-rendering="geometricPrecision"/>
<circle cx="513" cy="735.155" r="2.1" fill="#FF0030" stroke="none" stroke-width="0" shape-rendering="geometricPrecision"/>
<circle cx="516" cy="734.832" r="2.1" fill="#FF0030" stroke="none" stroke-width="0" shape-rendering="geometricPrecision"/>
<circle cx="522" cy="726.969" r="2.1" fill="#FF0030" stroke="none" stroke-width="0" shape-rendering="geometricPrecision"/>
<circle cx="523" cy="728.035" r="2.1" fill="#FF0030" stroke="none" stroke-width="0" shape-rendering="geometricPrecision"/>
<circle cx="524" cy="727.064" r="2.1" fill="#FF0030" stroke="none" stroke-width="0" shape-rendering="geometricPrecision"/>
<circle cx="525" cy="728.39" r="2.1" fill="#FF0030" stroke="none" stroke-width="0" shape-rendering="geometricPrecision"/>
<circle cx="527" cy="728.639" r="2.1" fill="#FF0030" stroke="none" stroke-width="0" shape-rendering="geometricPrecision"/>
<circle cx="529" cy="726.833" r="2.1" fill="#FF0030" stroke="none" stroke-width="0" shape-rendering="geometricPrecision"/>
<circle cx="531" cy="727.291" r="2.1" fill="#FF0030" stroke="none" stroke-width="0" shape-rendering="geometricPrecision"/>
<circle cx="532" cy="726.92" r="2.1" fill="#FF0030" stroke="none" stroke-width="0" shape-rendering="geometricPrecision"/>
<circle cx="534" cy="728.504" r="2.1" fill="#FF0030" stroke="none" stroke-width="0" shape-rendering="geometricPrecision"/>
<circle cx="535" cy="727.136" r="2.1" fill="#FF0030" stroke="none" stroke-width="0" shape-rendering="geometricPrecision"/>
<circle cx="536" cy="725.607" r="2.1" fill="#FF0030" stroke="none" stroke-width="0" shape-rendering="geometricPrecision"/>
<circle cx="538" cy="729.491" r="2.1" fill="#FF0030" stroke="none" stroke-width="0" shape-rendering="geometricPrecision"/>
<circle cx="539" cy="727.733" r="2.1" fill="#FF0030" stroke="none" stroke-width="0" shape-rendering="geometricPrecision"/>
<circle cx="540" cy="726.97" r="2.1" fill="#FF0030" stroke="none" stroke-width="0" shape-rendering="geometricPrecision"/>
<circle cx="542" cy="725.081" r="2.1" fill="#FF0030" stroke="none" stroke-width="0" shape-rendering="geometricPrecision"/>
<circle cx="543" cy="727.219" r="2.1" fill="#FF0030" stroke="none" stroke-width="0" shape-rendering="geometricPrecision"/>
<circle cx="547" cy="726.537" r="2.1" fill="#FF0030" stroke="none" stroke-width="0" shape-rendering="geometricPrecision"/>
<circle cx="549" cy="728.646" r="2.1" fill="#FF0030" stroke="none" stroke-width="0" shape-rendering="geometricPrecision"/>
<circle cx="550" cy="726.947" r="2.1" fill="#FF0030" stroke="none" stroke-width="0" shape-rendering="geometricPrecision"/>
<circle cx="551" cy="726.582" r="2.1" fill="#FF0030" stroke="none" stroke-width="0" shape-rendering="geometricPrecision"/>
<circle cx="553" cy="726.285" r="2.1" fill="#FF0030" stroke="none" stroke-width="0" shape-rendering="geometricPrecision"/>
<circle cx="554" cy="727.096" r="2.1" fill="#FF0030" stroke="none" stroke-width="0" shape-rendering="geometricPrecision"/>
<circle cx="555" cy="728.818" r="2.1" fill="#FF0030" stroke="none" stroke-width="0" shape-rendering="geometricPrecision"/>
<circle cx="556" cy="729.379" r="2.1" fill="#FF0030" stroke="none" stroke-width="0" shape-rendering="geometricPrecision"/>
<circle cx="557" cy="727.882" r="2.1" fill="#FF0030" stroke="none" stroke-width="0" shape-rendering="geometricPrecision"/>
<circle cx="558" cy="726.414" r="2.1" fill="#FF0030" stroke="none" stroke-width="0" shape-rendering="geometricPrecision"/>
<circle cx="561" cy="729.096" r="2.1" fill="#FF0030" stroke="none" stroke-width="0" shape-rendering="geometricPrecision"/>
<circle cx="563" cy="726.781" r="2.1" fill="#FF0030" stroke="none" stroke-width="0" shape-rendering="geometricPrecision"/>
<circle cx="565" cy="727.075" r="2.1" fill="#FF0030" stroke="none" stroke-width="0" shape-rendering="geometricPrecision"/>
<circle cx="566" cy="725.557" r="2.1" fill="#FF0030" stroke="none" stroke-width="0" shape-rendering="geometricPrecision"/>
<circle cx="568" cy="725.225" r="2.1" fill="#FF0030" stroke="none" stroke-width="0" shape-rendering="geometricPrecision"/>
<circle cx="361" cy="582.122" r="2.1" fill="#00FFC6" stroke="none" stroke-width="0" shape-rendering="geometricPrecision"/>
<circle cx="362" cy="583.98" r="2.1" fill="#00FFC6" stroke="none" stroke-width="0" shape-rendering="geometricPrecision"/>
<circle cx="363" cy="583.94" r="2.1" fill="#00FFC6" stroke="none" stroke-width="0" shape-rendering="geometricPrecision"/>
<circle cx="365" cy="585.917" r="2.1" fill="#00FFC6" stroke="none" stroke-width="0" shape-rendering="geometricPrecision"/>
<circle cx="366" cy="585.193" r="2.1" fill="#00FFC6" stroke="none" stroke-width="0" shape-rendering="geometricPrecision"/>
<circle cx="367" cy="587.417" r="2.1" fill="#00FFC6" stroke="none" stroke-width="0" shape-rendering="geometricPrecision"/>
<circle cx="368" cy="587.086" r="2.1" fill="#00FFC6" stroke="none" stroke-width="0" shape-rendering="geometricPrecision"/>
<circle cx="370" cy="588.105" r="2.1" fill="#00FFC6" stroke="none" stroke-width="0" shape-rendering="geometricPrecision"/>
<circle cx="371" cy="588.649" r="2.1" fill="#00FFC6" stroke="none" stroke-width="0" shape-rendering="geometricPrecision"/>
<circle cx="372" cy="588.601" r="2.1" fill="#00FFC6" stroke="none" stroke-width="0" shape-rendering="geometricPrecision"/>
<circle cx="374" cy="584.856" r="2.1" fill="#00FFC6" stroke="none" stroke-width="0" shape-rendering="geometricPrecision"/>
<circle cx="376" cy="584.426" r="2.1" fill="#00FFC6" stroke="none" stroke-width="0" shape-rendering="geometricPrecision"/>
<circle cx="378" cy="584.261" r="2.1" fill="#00FFC6" stroke="none" stroke-width="0" shape-rendering="geometricPrecision"/>
<circle cx="381" cy="585.554" r="2.1" fill="#00FFC6" stroke="none" stroke-width="0" shape-rendering="geometricPrecision"/>
<circle cx="383" cy="584.638" r="2.1" fill="#00FFC6" stroke="none" stroke-width="0" shape-rendering="geometricPrecision"/>
<circle cx="384" cy="584.549" r="2.1" fill="#00FFC6" stroke="none" stroke-width="0" shape-rendering="geometricPrecision"/>
<circle cx="386" cy="586.102" r="2.1" fill="#00FFC6" stroke="none" stroke-width="0" shape-rendering="geometricPrecision"/>
<circle cx="387" cy="586.952" r="2.1" fill="#00FFC6" stroke="none" stroke-width="0" shape-rendering="geometricPrecision"/>
<circle cx="388" cy="586.801" r="2.1" fill="#00FFC6" stroke="none" stroke-width="0" shape-rendering="geometricPrecision"/>
<circle cx="390" cy="586.441" r="2.1" fill="#00FFC6" stroke="none" stroke-width="0" shape-rendering="geometricPrecision"/>
<circle cx="392" cy="581.883" r="2.1" fill="#00FFC6" stroke="none" stroke-width="0" shape-rendering="geometricPrecision"/>
<circle cx="393" cy="582.961" r="2.1" fill="#00FFC6" stroke="none" stroke-width="0" shape-rendering="geometricPrecision"/>
<circle cx="395" cy="582.4" r="2.1" fill="#00FFC6" stroke="none" stroke-width="0" shape-rendering="geometricPrecision"/>
<circle cx="396" cy="582.527" r="2.1" fill="#00FFC6" stroke="none" stroke-width="0" shape-rendering="geometricPrecision"/>
<circle cx="398" cy="585.936" r="2.1" fill="#00FFC6" stroke="none" stroke-width="0" shape-rendering="geometricPrecision"/>
<circle cx="399" cy="586.239" r="2.1" fill="#00FFC6" stroke="none" stroke-width="0" shape-rendering="geometricPrecision"/>
<circle cx="401" cy="585.229" r="2.1" fill="#00FFC6" stroke="none" stroke-width="0" shape-rendering="geometricPrecision"/>
<circle cx="402" cy="584.963" r="2.1" fill="#00FFC6" stroke="none" stroke-width="0" shape-rendering="geometricPrecision"/>
<circle cx="403" cy="585.241" r="2.1" fill="#00FFC6" stroke="none" stroke-width="0" shape-rendering="geometricPrecision"/>
<circle cx="404" cy="587.886" r="2.1" fill="#00FFC6" stroke="none" stroke-width="0" shape-rendering="geometricPrecision"/>
<circle cx="405" cy="588.821" r="2.1" fill="#00FFC6" stroke="none" stroke-width="0" shape-rendering="geometricPrecision"/>
<circle cx="406" cy="587.35" r="2.1" fill="#00FFC6" stroke="none" stroke-width="0" shape-rendering="geometricPrecision"/>
<circle cx="407" cy="588.29" r="2.1" fill="#00FFC6" stroke="none" stroke-width="0" shape-rendering="geometricPrecision"/>
<circle cx="412" cy="585.159" r="2.1" fill="#00FFC6" stroke="none" stroke-width="0" shape-rendering="geometricPrecision"/>
<circle cx="413" cy="584.508" r="2.1" fill="#00FFC6" stroke="none" stroke-width="0" shape-rendering="geometricPrecision"/>
<circle cx="415" cy="583.262" r="2.1" fill="#00FFC6" stroke="none" stroke-width="0" shape-rendering="geometricPrecision"/>
<circle cx="418" cy="581.96" r="2.1" fill="#00FFC6" stroke="none" stroke-width="0" shape-rendering="geometricPrecision"/>
<circle cx="419" cy="583.214" r="2.1" fill="#00FFC6" stroke="none" stroke-width="0" shape-rendering="geometricPrecision"/>
<circle cx="420" cy="584.805" r="2.1" fill="#00FFC6" stroke="none" stroke-width="0" shape-rendering="geometricPrecision"/>
<circle cx="424" cy="589.269" r="2.1" fill="#00FFC6" stroke="none" stroke-width="0" shape-rendering="geometricPrecision"/>
<circle cx="425" cy="588.906" r="2.1" fill="#00FFC6" stroke="none" stroke-width="0" shape-rendering="geometricPrecision"/>
<circle cx="426" cy="588.358" r="2.1" fill="#00FFC6" stroke="none" stroke-width="0" shape-rendering="geometricPrecision"/>
<circle cx="427" cy="587.284" r="2.1" fill="#00FFC6" stroke="none" stroke-width="0" shape-rendering="geometricPrecision"/>
<circle cx="429" cy="584.451" r="2.1" fill="#00FFC6" stroke="none" stroke-width="0" shape-rendering="geometricPrecision"/>
<circle cx="432" cy="583.872" r="2.1" fill="#00FFC6" stroke="none" stroke-width="0" shape-rendering="geometricPrecision"/>
<circle cx="434" cy="585.869" r="2.1" fill="#00FFC6" stroke="none" stroke-width="0" shape-rendering="geometricPrecision"/>
<circle cx="437" cy="586.603" r="2.1" fill="#00FFC6" stroke="none" stroke-width="0" shape-rendering="geometricPrecision"/>
<circle cx="440" cy="583.767" r="2.1" fill="#00FFC6" stroke="none" stroke-width="0" shape-rendering="geometricPrecision"/>
<circle cx="441" cy="582.126" r="2.1" fill="#00FFC6" stroke="none" stroke-width="0" shape-rendering="geometricPrecision"/>
<circle cx="442" cy="582.302" r="2.1" fill="#00FFC6" stroke="none" stroke-width="0" shape-rendering="geometricPrecision"/>
<circle cx="444" cy="584.05" r="2.1" fill="#00FFC6" stroke="none" stroke-width="0" shape-rendering="geometricPrecision"/>
<circle cx="445" cy="582.257" r="2.1" fill="#00FFC6" stroke="none" stroke-width="0" shape-rendering="geometricPrecision"/>
<circle cx="447" cy="584.23" r="2.1" fill="#00FFC6" stroke="none" stroke-width="0" shape-rendering="geometricPrecision"/>
<circle cx="449" cy="581.709" r="2.1" fill="#00FFC6" stroke="none" stroke-width="0" shape-rendering="geometricPrecision"/>
<circle cx="454" cy="585.401" r="2.1" fill="#00FFC6" stroke="none" stroke-width="0" shape-rendering="geometricPrecision"/>
<circle cx="456" cy="583.823" r="2.1" fill="#00FFC6" stroke="none" stroke-width="0" shape-rendering="geometricPrecision"/>
<circle cx="458" cy="582.277" r="2.1" fill="#00FFC6" stroke="none" stroke-width="0" shape-rendering="geometricPrecision"/>
<circle cx="459" cy="584.126" r="2.1" fill="#00FFC6" stroke="none" stroke-width="0" shape-rendering="geometricPrecision"/>
<circle cx="461" cy="587.341" r="2.1" fill="#00FFC6" stroke="none" stroke-width="0" shape-rendering="geometricPrecision"/>
<circle cx="465" cy="587.644" r="2.1" fill="#00FFC6" stroke="none" stroke-width="0" shape-rendering="geometricPrecision"/>
<circle cx="466" cy="585.023" r="2.1" fill="#00FFC6" stroke="none" stroke-width="0" shape-rendering="geometricPrecision"/>
<circle cx="467" cy="584.644" r="2.1" fill="#00FFC6" stroke="none" stroke-width="0" shape-rendering="geometricPrecision"/>
<circle cx="468" cy="584.302" r="2.1" fill="#00FFC6" stroke="none" stroke-width="0" shape-rendering="geometricPrecision"/>
<circle cx="470" cy="585.194" r="2.1" fill="#00FFC6" stroke="none" stroke-width="0" shape-rendering="geometricPrecision"/>
<circle cx="472" cy="583.227" r="2.1" fill="#00FFC6" stroke="none" stroke-width="0" shape-rendering="geometricPrecision"/>
<circle cx="473" cy="585.727" r="2.1" fill="#00FFC6" stroke="none" stroke-width="0" shape-rendering="geometricPrecision"/>
<circle cx="475" cy="582.81" r="2.1" fill="#00FFC6" stroke="none" stroke-width="0" shape-rendering="geometricPrecision"/>
<circle cx="476" cy="582.054" r="2.1" fill="#00FFC6" stroke="none" stroke-width="0" shape-rendering="geometricPrecision"/>
<circle cx="479" cy="582.5" r="2.1" fill="#00FFC6" stroke="none" stroke-width="0" shape-rendering="geometricPrecision"/>
<circle cx="481" cy="582.202" r="2.1" fill="#00FFC6" stroke="none" stroke-width="0" shape-rendering="geometricPrecision"/>
<circle cx="483" cy="583.632" r="2.1" fill="#00FFC6" stroke="none" stroke-width="0" shape-rendering="geometricPrecision"/>
<circle cx="484" cy="583.881" r="2.1" fill="#00FFC6" stroke="none" stroke-width="0" shape-rendering="geometricPrecision"/>
<circle cx="485" cy="584.535" r="2.1" fill="#00FFC6" stroke="none" stroke-width="0" shape-rendering="geometricPrecision"/>
<circle cx="486" cy="582.395" r="2.1" fill="#00FFC6" stroke="none" stroke-width="0" shape-rendering="geometricPrecision"/>
<circle cx="487" cy="584.724" r="2.1" fill="#00FFC6" stroke="none" stroke-width="0" shape-rendering="geometricPrecision"/>
<circle cx="488" cy="585.375" r="2.1" fill="#00FFC6" stroke="none" stroke-width="0" shape-rendering="geometricPrecision"/>
<circle cx="489" cy="584.983" r="2.1" fill="#00FFC6" stroke="none" stroke-width="0" shape-rendering="geometricPrecision"/>
<circle cx="490" cy="584.924" r="2.1" fill="#00FFC6" stroke="none" stroke-width="0" shape-rendering="geometricPrecision"/>
<circle cx="493" cy="583.062" r="2.1" fill="#00FFC6" stroke="none" stroke-width="0" shape-rendering="geometricPrecision"/>
<circle cx="496" cy="587.538" r="2.1" fill="#00FFC6" stroke="none" stroke-width="0" shape-rendering="geometricPrecision"/>
<circle cx="497" cy="587.325" r="2.1" fill="#00FFC6" stroke="none" stroke-width="0" shape-rendering="geometricPrecision"/>
<circle cx="499" cy="582.627" r="2.1" fill="#00FFC6" stroke="none" stroke-width="0" shape-rendering="geometricPrecision"/>
<circle cx="504" cy="584.224" r="2.1" fill="#00FFC6" stroke="none" stroke-width="0" shape-rendering="geometricPrecision"/>
<circle cx="505" cy="586.674" r="2.1" fill="#00FFC6" stroke="none" stroke-width="0" shape-rendering="geometricPrecision"/>
<circle cx="508" cy="589.566" r="2.1" fill="#00FFC6" stroke="none" stroke-width="0" shape-rendering="geometricPrecision"/>
<circle cx="512" cy="587.146" r="2.1" fill="#00FFC6" stroke="none" stroke-width="0" shape-rendering="geometricPrecision"/>
<circle cx="515" cy="588.946" r="2.1" fill="#00FFC6" stroke="none" stroke-width="0" shape-rendering="geometricPrecision"/>
<circle cx="517" cy="588.394" r="2.1" fill="#00FFC6" stroke="none" stroke-width="0" shape-rendering="geometricPrecision"/>
<circle cx="519" cy="587.006" r="2.1" fill="#00FFC6" stroke="none" stroke-width="0" shape-rendering="geometricPrecision"/>
<circle cx="520" cy="589.376" r="2.1" fill="#00FFC6" stroke="none" stroke-width="0" shape-rendering="geometricPrecision"/>
<circle cx="527" cy="590.468" r="2.1" fill="#00FFC6" stroke="none" stroke-width="0" shape-rendering="geometricPrecision"/>
<circle cx="528" cy="591.909" r="2.1" fill="#00FFC6" stroke="none" stroke-width="0" shape-rendering="geometricPrecision"/>
<circle cx="530" cy="590.041" r="2.1" fill="#00FFC6" stroke="none" stroke-width="0" shape-rendering="geometricPrecision"/>
<circle cx="531" cy="590.604" r="2.1" fill="#00FFC6" stroke="none" stroke-width="0" shape-rendering="geometricPrecision"/>
<circle cx="533" cy="593.38" r="2.1" fill="#00FFC6" stroke="none" stroke-width="0" shape-rendering="geometricPrecision"/>
<circle cx="534" cy="592.928" r="2.1" fill="#00FFC6" stroke="none" stroke-width="0" shape-rendering="geometricPrecision"/>
<circle cx="536" cy="590.338" r="2.1" fill="#00FFC6" stroke="none" stroke-width="0" shape-rendering="geometricPrecision"/>
<circle cx="539" cy="592.65" r="2.1" fill="#00FFC6" stroke="none" stroke-width="0" shape-rendering="geometricPrecision"/>
<circle cx="542" cy="592.467" r="2.1" fill="#00FFC6" stroke="none" stroke-width="0" shape-rendering="geometricPrecision"/>
<circle cx="543" cy="591.464" r="2.1" fill="#00FFC6" stroke="none" stroke-width="0" shape-rendering="geometricPrecision"/>
<circle cx="546" cy="592.613" r="2.1" fill="#00FFC6" stroke="none" stroke-width="0" shape-rendering="geometricPrecision"/>
<circle cx="547" cy="590.678" r="2.1" fill="#00FFC6" stroke="none" stroke-width="0" shape-rendering="geometricPrecision"/>
<circle cx="548" cy="591.375" r="2.1" fill="#00FFC6" stroke="none" stroke-width="0" shape-rendering="geometricPrecision"/>
<circle cx="549" cy="591.945" r="2.1" fill="#00FFC6" stroke="none" stroke-width="0" shape-rendering="geometricPrecision"/>
<circle cx="550" cy="589.614" r="2.1" fill="#00FFC6" stroke="none" stroke-width="0" shape-rendering="geometricPrecision"/>
<circle cx="557" cy="591.471" r="2.1" fill="#00FFC6" stroke="none" stroke-width="0" shape-rendering="geometricPrecision"/>
<circle cx="559" cy="590.981" r="2.1" fill="#00FFC6" stroke="none" stroke-width="0" shape-rendering="geometricPrecision"/>
<circle cx="561" cy="591.466" r="2.1" fill="#00FFC6" stroke="none" stroke-width="0" shape-rendering="geometricPrecision"/>
<circle cx="562" cy="592.47" r="2.1" fill="#00FFC6" stroke="none" stroke-width="0" shape-rendering="geometricPrecision"/>
<circle cx="564" cy="592.933" r="2.1" fill="#00FFC6" stroke="none" stroke-width="0" shape-rendering="geometricPrecision"/>
<circle cx="566" cy="593.11" r="2.1" fill="#00FFC6" stroke="none" stroke-width="0" shape-rendering="geometricPrecision"/>
<circle cx="568" cy="591.522" r="2.1" fill="#00FFC6" stroke="none" stroke-width="0" shape-rendering="geometricPrecision"/>
<circle cx="360" cy="617.973" r="2.1" fill="#00FFC6" stroke="none" stroke-width="0" shape-rendering="geometricPrecision"/>
<circle cx="362" cy="617.501" r="2.1" fill="#00FFC6" stroke="none" stroke-width="0" shape-rendering="geometricPrecision"/>
<circle cx="363" cy="617.903" r="2.1" fill="#00FFC6" stroke="none" stroke-width="0" shape-rendering="geometricPrecision"/>
<circle cx="364" cy="617.324" r="2.1" fill="#00FFC6" stroke="none" stroke-width="0" shape-rendering="geometricPrecision"/>
<circle cx="366" cy="616.799" r="2.1" fill="#00FFC6" stroke="none" stroke-width="0" shape-rendering="geometricPrecision"/>
<circle cx="367" cy="617.859" r="2.1" fill="#00FFC6" stroke="none" stroke-width="0" shape-rendering="geometricPrecision"/>
<circle cx="368" cy="618.657" r="2.1" fill="#00FFC6" stroke="none" stroke-width="0" shape-rendering="geometricPrecision"/>
<circle cx="369" cy="617.617" r="2.1" fill="#00FFC6" stroke="none" stroke-width="0" shape-rendering="geometricPrecision"/>
<circle cx="370" cy="616.044" r="2.1" fill="#00FFC6" stroke="none" stroke-width="0" shape-rendering="geometricPrecision"/>
<circle cx="372" cy="616.321" r="2.1" fill="#00FFC6" stroke="none" stroke-width="0" shape-rendering="geometricPrecision"/>
<circle cx="373" cy="617.528" r="2.1" fill="#00FFC6" stroke="none" stroke-width="0" shape-rendering="geometricPrecision"/>
<circle cx="378" cy="622.472" r="2.1" fill="#00FFC6" stroke="none" stroke-width="0" shape-rendering="geometricPrecision"/>
<circle cx="380" cy="619.76" r="2.1" fill="#00FFC6" stroke="none" stroke-width="0" shape-rendering="geometricPrecision"/>
<circle cx="381" cy="619.473" r="2.1" fill="#00FFC6" stroke="none" stroke-width="0" shape-rendering="geometricPrecision"/>
<circle cx="385" cy="620.921" r="2.1" fill="#00FFC6" stroke="none" stroke-width="0" shape-rendering="geometricPrecision"/>
<circle cx="386" cy="619.669" r="2.1" fill="#00FFC6" stroke="none" stroke-width="0" shape-rendering="geometricPrecision"/>
<circle cx="387" cy="618.78" r="2.1" fill="#00FFC6" stroke="none" stroke-width="0" shape-rendering="geometricPrecision"/>
<circle cx="389" cy="617.322" r="2.1" fill="#00FFC6" stroke="none" stroke-width="0" shape-rendering="geometricPrecision"/>
<circle cx="391" cy="618.765" r="2.1" fill="#00FFC6" stroke="none" stroke-width="0" shape-rendering="geometricPrecision"/>
<circle cx="397" cy="618.214" r="2.1" fill="#00FFC6" stroke="none" stroke-width="0" shape-rendering="geometricPrecision"/>
<circle cx="398" cy="616.965" r="2.1" fill="#00FFC6" stroke="none" stroke-width="0" shape-rendering="geometricPrecision"/>
<circle cx="401" cy="617.521" r="2.1" fill="#00FFC6" stroke="none" stroke-width="0" shape-rendering="geometricPrecision"/>
<circle cx="405" cy="621.311" r="2.1" fill="#00FFC6" stroke="none" stroke-width="0" shape-rendering="geometricPrecision"/>
<circle cx="406" cy="620.653" r="2.1" fill="#00FFC6" stroke="none" stroke-width="0" shape-rendering="geometricPrecision"/>
<circle cx="408" cy="621.812" r="2.1" fill="#00FFC6" stroke="none" stroke-width="0" shape-rendering="geometricPrecision"/>
<circle cx="410" cy="618.061" r="2.1" fill="#00FFC6" stroke="none" stroke-width="0" shape-rendering="geometricPrecision"/>
<circle cx="411" cy="620.271" r="2.1" fill="#00FFC6" stroke="none" stroke-width="0" shape-rendering="geometricPrecision"/>
<circle cx="413" cy="615.284" r="2.1" fill="#00FFC6" stroke="none" stroke-width="0" shape-rendering="geometricPrecision"/>
<circle cx="414" cy="618.322" r="2.1" fill="#00FFC6" stroke="none" stroke-width="0" shape-rendering="geometricPrecision"/>
<circle cx="415" cy="618.106" r="2.1" fill="#00FFC6" stroke="none" stroke-width="0" shape-rendering="geometricPrecision"/>
<circle cx="416" cy="619.737" r="2.1" fill="#00FFC6" stroke="none" stroke-width="0" shape-rendering="geometricPrecision"/>
<circle cx="417" cy="616.379" r="2.1" fill="#00FFC6" stroke="none" stroke-width="0" shape-rendering="geometricPrecision"/>
<circle cx="419" cy="615.922" r="2.1" fill="#00FFC6" stroke="none" stroke-width="0" shape-rendering="geometricPrecision"/>
<circle cx="422" cy="615.913" r="2.1" fill="#00FFC6" stroke="none" stroke-width="0" shape-rendering="geometricPrecision"/>
<circle cx="423" cy="618.4" r="2.1" fill="#00FFC6" stroke="none" stroke-width="0" shape-rendering="geometricPrecision"/>
<circle cx="426" cy="616.267" r="2.1" fill="#00FFC6" stroke="none" stroke-width="0" shape-rendering="geometricPrecision"/>
<circle cx="429" cy="616.667" r="2.1" fill="#00FFC6" stroke="none" stroke-width="0" shape-rendering="geometricPrecision"/>
<circle cx="430" cy="617.91" r="2.1" fill="#00FFC6" stroke="none" stroke-width="0" shape-rendering="geometricPrecision"/>
<circle cx="431" cy="618.237" r="2.1" fill="#00FFC6" stroke="none" stroke-width="0" shape-rendering="geometricPrecision"/>
<circle cx="433" cy="617.74" r="2.1" fill="#00FFC6" stroke="none" stroke-width="0" shape-rendering="geometricPrecision"/>
<circle cx="434" cy="620.598" r="2.1" fill="#00FFC6" stroke="none" stroke-width="0" shape-rendering="geometricPrecision"/>
<circle cx="436" cy="618.568" r="2.1" fill="#00FFC6" stroke="none" stroke-width="0" shape-rendering="geometricPrecision"/>
<circle cx="437" cy="617.27" r="2.1" fill="#00FFC6" stroke="none" stroke-width="0" shape-rendering="geometricPrecision"/>
<circle cx="439" cy="615.429" r="2.1" fill="#00FFC6" stroke="none" stroke-width="0" shape-rendering="geometricPrecision"/>
<circle cx="440" cy="615.467" r="2.1" fill="#00FFC6" stroke="none" stroke-width="0" shape-rendering="geometricPrecision"/>
<circle cx="441" cy="614.159" r="2.1" fill="#00FFC6" stroke="none" stroke-width="0" shape-rendering="geometricPrecision"/>
<circle cx="442" cy="616.946" r="2.1" fill="#00FFC6" stroke="none" stroke-width="0" shape-rendering="geometricPrecision"/>
<circle cx="443" cy="613.937" r="2.1" fill="#00FFC6" stroke="none" stroke-width="0" shape-rendering="geometricPrecision"/>
<circle cx="445" cy="616.199" r="2.1" fill="#00FFC6" stroke="none" stroke-width="0" shape-rendering="geometricPrecision"/>
<circle cx="446" cy="615.918" r="2.1" fill="#00FFC6" stroke="none" stroke-width="0" shape-rendering="geometricPrecision"/>
<circle cx="448" cy="618.624" r="2.1" fill="#00FFC6" stroke="none" stroke-width="0" shape-rendering="geometricPrecision"/>
<circle cx="450" cy="618.134" r="2.1" fill="#00FFC6" stroke="none" stroke-width="0" shape-rendering="geometricPrecision"/>
<circle cx="456" cy="618.376" r="2.1" fill="#00FFC6" stroke="none" stroke-width="0" shape-rendering="geometricPrecision"/>
<circle cx="461" cy="619.234" r="2.1" fill="#00FFC6" stroke="none" stroke-width="0" shape-rendering="geometricPrecision"/>
<circle cx="463" cy="621.192" r="2.1" fill="#00FFC6" stroke="none" stroke-width="0" shape-rendering="geometricPrecision"/>
<circle cx="464" cy="621.152" r="2.1" fill="#00FFC6" stroke="none" stroke-width="0" shape-rendering="geometricPrecision"/>
<circle cx="465" cy="619.681" r="2.1" fill="#00FFC6" stroke="none" stroke-width="0" shape-rendering="geometricPrecision"/>
<circle cx="466" cy="618.388" r="2.1" fill="#00FFC6" stroke="none" stroke-width="0" shape-rendering="geometricPrecision"/>
<circle cx="468" cy="617.533" r="2.1" fill="#00FFC6" stroke="none" stroke-width="0" shape-rendering="geometricPrecision"/>
<circle cx="469" cy="617.534" r="2.1" fill="#00FFC6" stroke="none" stroke-width="0" shape-rendering="geometricPrecision"/>
<circle cx="470" cy="618.958" r="2.1" fill="#00FFC6" stroke="none" stroke-width="0" shape-rendering="geometricPrecision"/>
<circle cx="471" cy="622.113" r="2.1" fill="#00FFC6" stroke="none" stroke-width="0" shape-rendering="geometricPrecision"/>
<circle cx="472" cy="618.788" r="2.1" fill="#00FFC6" stroke="none" stroke-width="0" shape-rendering="geometricPrecision"/>
<circle cx="474" cy="617.619" r="2.1" fill="#00FFC6" stroke="none" stroke-width="0" shape-rendering="geometricPrecision"/>
<circle cx="475" cy="617.681" r="2.1" fill="#00FFC6" stroke="none" stroke-width="0" shape-rendering="geometricPrecision"/>
<circle cx="476" cy="619.906" r="2.1" fill="#00FFC6" stroke="none" stroke-width="0" shape-rendering="geometricPrecision"/>
<circle cx="479" cy="621.024" r="2.1" fill="#00FFC6" stroke="none" stroke-width="0" shape-rendering="geometricPrecision"/>
<circle cx="481" cy="615.685" r="2.1" fill="#00FFC6" stroke="none" stroke-width="0" shape-rendering="geometricPrecision"/>
<circle cx="484" cy="619.361" r="2.1" fill="#00FFC6" stroke="none" stroke-width="0" shape-rendering="geometricPrecision"/>
<circle cx="485" cy="619.635" r="2.1" fill="#00FFC6" stroke="none" stroke-width="0" shape-rendering="geometricPrecision"/>
<circle cx="486" cy="619.751" r="2.1" fill="#00FFC6" stroke="none" stroke-width="0" shape-rendering="geometricPrecision"/>
<circle cx="488" cy="616.614" r="2.1" fill="#00FFC6" stroke="none" stroke-width="0" shape-rendering="geometricPrecision"/>
<circle cx="489" cy="615.293" r="2.1" fill="#00FFC6" stroke="none" stroke-width="0" shape-rendering="geometricPrecision"/>
<circle cx="490" cy="618.602" r="2.1" fill="#00FFC6" stroke="none" stroke-width="0" shape-rendering="geometricPrecision"/>
<circle cx="491" cy="618.807" r="2.1" fill="#00FFC6" stroke="none" stroke-width="0" shape-rendering="geometricPrecision"/>
<circle cx="492" cy="618.654" r="2.1" fill="#00FFC6" stroke="none" stroke-width="0" shape-rendering="geometricPrecision"/>
<circle cx="495" cy="619.307" r="2.1" fill="#00FFC6" stroke="none" stroke-width="0" shape-rendering="geometricPrecision"/>
<circle cx="498" cy="618.916" r="2.1" fill="#00FFC6" stroke="none" stroke-width="0" shape-rendering="geometricPrecision"/>
<circle cx="500" cy="619.91" r="2.1" fill="#00FFC6" stroke="none" stroke-width="0" shape-rendering="geometricPrecision"/>
<circle cx="501" cy="621.111" r="2.1" fill="#00FFC6" stroke="none" stroke-width="0" shape-rendering="geometricPrecision"/>
<circle cx="505" cy="618.58" r="2.1" fill="#00FFC6" stroke="none" stroke-width="0" shape-rendering="geometricPrecision"/>
<circle cx="508" cy="617.334" r="2.1" fill="#00FFC6" stroke="none" stroke-width="0" shape-rendering="geometricPrecision"/>
<circle cx="509" cy="615.116" r="2.1" fill="#00FFC6" stroke="none" stroke-width="0" shape-rendering="geometricPrecision"/>
<circle cx="510" cy="613.98" r="2.1" fill="#00FFC6" stroke="none" stroke-width="0" shape-rendering="geometricPrecision"/>
<circle cx="512" cy="615.608" r="2.1" fill="#00FFC6" stroke="none" stroke-width="0" shape-rendering="geometricPrecision"/>
<circle cx="514" cy="616.89" r="2.1" fill="#00FFC6" stroke="none" stroke-width="0" shape-rendering="geometricPrecision"/>
<circle cx="515" cy="618.276" r="2.1" fill="#00FFC6" stroke="none" stroke-width="0" shape-rendering="geometricPrecision"/>
<circle cx="518" cy="617.342" r="2.1" fill="#00FFC6" stroke="none" stroke-width="0" shape-rendering="geometricPrecision"/>
<circle cx="520" cy="613.471" r="2.1" fill="#00FFC6" stroke="none" stroke-width="0" shape-rendering="geometricPrecision"/>
<circle cx="521" cy="612.586" r="2.1" fill="#00FFC6" stroke="none" stroke-width="0" shape-rendering="geometricPrecision"/>
<circle cx="523" cy="608.251" r="2.1" fill="#00FFC6" stroke="none" stroke-width="0" shape-rendering="geometricPrecision"/>
<circle cx="524" cy="607.747" r="2.1" fill="#00FFC6" stroke="none" stroke-width="0" shape-rendering="geometricPrecision"/>
<circle cx="529" cy="606.512" r="2.1" fill="#00FFC6" stroke="none" stroke-width="0" shape-rendering="geometricPrecision"/>
<circle cx="530" cy="605.811" r="2.1" fill="#00FFC6" stroke="none" stroke-width="0" shape-rendering="geometricPrecision"/>
<circle cx="533" cy="607.856" r="2.1" fill="#00FFC6" stroke="none" stroke-width="0" shape-rendering="geometricPrecision"/>
<circle cx="535" cy="604.609" r="2.1" fill="#00FFC6" stroke="none" stroke-width="0" shape-rendering="geometricPrecision"/>
<circle cx="536" cy="607.26" r="2.1" fill="#00FFC6" stroke="none" stroke-width="0" shape-rendering="geometricPrecision"/>
<circle cx="537" cy="605.164" r="2.1" fill="#00FFC6" stroke="none" stroke-width="0" shape-rendering="geometricPrecision"/>
<circle cx="538" cy="607.778" r="2.1" fill="#00FFC6" stroke="none" stroke-width="0" shape-rendering="geometricPrecision"/>
<circle cx="540" cy="609.469" r="2.1" fill="#00FFC6" stroke="none" stroke-width="0" shape-rendering="geometricPrecision"/>
<circle cx="541" cy="608.205" r="2.1" fill="#00FFC6" stroke="none" stroke-width="0" shape-rendering="geometricPrecision"/>
<circle cx="542" cy="604.959" r="2.1" fill="#00FFC6" stroke="none" stroke-width="0" shape-rendering="geometricPrecision"/>
<circle cx="543" cy="605.051" r="2.1" fill="#00FFC6" stroke="none" stroke-width="0" shape-rendering="geometricPrecision"/>
<circle cx="544" cy="607.354" r="2.1" fill="#00FFC6" stroke="none" stroke-width="0" shape-rendering="geometricPrecision"/>
<circle cx="545" cy="609.319" r="2.1" fill="#00FFC6" stroke="none" stroke-width="0" shape-rendering="geometricPrecision"/>
<circle cx="546" cy="605.929" r="2.1" fill="#00FFC6" stroke="none" stroke-width="0" shape-rendering="geometricPrecision"/>
<circle cx="547" cy="607.957" r="2.1" fill="#00FFC6" stroke="none" stroke-width="0" shape-rendering="geometricPrecision"/>
<circle cx="549" cy="605.468" r="2.1" fill="#00FFC6" stroke="none" stroke-width="0" shape-rendering="geometricPrecision"/>
<circle cx="551" cy="609.447" r="2.1" fill="#00FFC6" stroke="none" stroke-width="0" shape-rendering="geometricPrecision"/>
<circle cx="552" cy="608.408" r="2.1" fill="#00FFC6" stroke="none" stroke-width="0" shape-rendering="geometricPrecision"/>
<circle cx="553" cy="608.671" r="2.1" fill="#00FFC6" stroke="none" stroke-width="0" shape-rendering="geometricPrecision"/>
<circle cx="554" cy="607.471" r="2.1" fill="#00FFC6" stroke="none" stroke-width="0" shape-rendering="geometricPrecision"/>
<circle cx="556" cy="608.7" r="2.1" fill="#00FFC6" stroke="none" stroke-width="0" shape-rendering="geometricPrecision"/>
<circle cx="557" cy="608.436" r="2.1" fill="#00FFC6" stroke="none" stroke-width="0" shape-rendering="geometricPrecision"/>
<circle cx="558" cy="608.348" r="2.1" fill="#00FFC6" stroke="none" stroke-width="0" shape-rendering="geometricPrecision"/>
<circle cx="559" cy="608.142" r="2.1" fill="#00FFC6" stroke="none" stroke-width="0" shape-rendering="geometricPrecision"/>
<circle cx="560" cy="609.257" r="2.1" fill="#00FFC6" stroke="none" stroke-width="0" shape-rendering="geometricPrecision"/>
<circle cx="563" cy="606.603" r="2.1" fill="#00FFC6" stroke="none" stroke-width="0" shape-rendering="geometricPrecision"/>
<circle cx="564" cy="607.801" r="2.1" fill="#00FFC6" stroke="none" stroke-width="0" shape-rendering="geometricPrecision"/>
<circle cx="565" cy="606.922" r="2.1" fill="#00FFC6" stroke="none" stroke-width="0" shape-rendering="geometricPrecision"/>
<circle cx="568" cy="608.44" r="2.1" fill="#00FFC6" stroke="none" stroke-width="0" shape-rendering="geometricPrecision"/>
<rect x="369.2" y="678.8" width="1.2" height="21.2" fill="#FF0030" />
<circle cx="369.8" cy="678.8" r="2.2" fill="#FF0030" stroke="none" stroke-width="0" shape-rendering="geometricPrecision"/>
<circle cx="369.8" cy="683.2" r="2.2" fill="#FF0030" stroke="none" stroke-width="0" shape-rendering="geometricPrecision"/>
<circle cx="369.8" cy="687.6" r="2.2" fill="#FF0030" stroke="none" stroke-width="0" shape-rendering="geometricPrecision"/>
<rect x="394.4" y="681" width="1.2" height="19" fill="#FF0030" />
<circle cx="395" cy="681" r="2.2" fill="#FF0030" stroke="none" stroke-width="0" shape-rendering="geometricPrecision"/>
<circle cx="395" cy="685.4" r="2.2" fill="#FF0030" stroke="none" stroke-width="0" shape-rendering="geometricPrecision"/>
<circle cx="395" cy="689.8" r="2.2" fill="#FF0030" stroke="none" stroke-width="0" shape-rendering="geometricPrecision"/>
<rect x="413.4" y="669.8" width="1.2" height="30.2" fill="#FF0030" />
<circle cx="414" cy="669.8" r="2.2" fill="#FF0030" stroke="none" stroke-width="0" shape-rendering="geometricPrecision"/>
<circle cx="414" cy="674.2" r="2.2" fill="#FF0030" stroke="none" stroke-width="0" shape-rendering="geometricPrecision"/>
<circle cx="414" cy="678.6" r="2.2" fill="#FF0030" stroke="none" stroke-width="0" shape-rendering="geometricPrecision"/>
<rect x="429.9" y="676.8" width="1.2" height="23.2" fill="#FF0030" />
<circle cx="430.5" cy="676.8" r="2.2" fill="#FF0030" stroke="none" stroke-width="0" shape-rendering="geometricPrecision"/>
<circle cx="430.5" cy="681.2" r="2.2" fill="#FF0030" stroke="none" stroke-width="0" shape-rendering="geometricPrecision"/>
<circle cx="430.5" cy="685.6" r="2.2" fill="#FF0030" stroke="none" stroke-width="0" shape-rendering="geometricPrecision"/>
<rect x="451.4" y="670.6" width="1.2" height="29.4" fill="#FF0030" />
<circle cx="452" cy="670.6" r="2.2" fill="#FF0030" stroke="none" stroke-width="0" shape-rendering="geometricPrecision"/>
<circle cx="452" cy="675" r="2.2" fill="#FF0030" stroke="none" stroke-width="0" shape-rendering="geometricPrecision"/>
<circle cx="452" cy="679.4" r="2.2" fill="#FF0030" stroke="none" stroke-width="0" shape-rendering="geometricPrecision"/>
<rect x="460.7" y="672.7" width="1.2" height="27.3" fill="#FF0030" />
<circle cx="461.3" cy="672.7" r="2.2" fill="#FF0030" stroke="none" stroke-width="0" shape-rendering="geometricPrecision"/>
<circle cx="461.3" cy="677.1" r="2.2" fill="#FF0030" stroke="none" stroke-width="0" shape-rendering="geometricPrecision"/>
<circle cx="461.3" cy="681.5" r="2.2" fill="#FF0030" stroke="none" stroke-width="0" shape-rendering="geometricPrecision"/>
<rect x="465.4" y="659" width="1.2" height="41" fill="#FF0030" />
<circle cx="466" cy="659" r="2.2" fill="#FF0030" stroke="none" stroke-width="0" shape-rendering="geometricPrecision"/>
<circle cx="466" cy="663.4" r="2.2" fill="#FF0030" stroke="none" stroke-width="0" shape-rendering="geometricPrecision"/>
<circle cx="466" cy="667.8" r="2.2" fill="#FF0030" stroke="none" stroke-width="0" shape-rendering="geometricPrecision"/>
<rect x="467.4" y="664" width="1.2" height="36" fill="#FF0030" />
<circle cx="468" cy="664" r="2.2" fill="#FF0030" stroke="none" stroke-width="0" shape-rendering="geometricPrecision"/>
<circle cx="468" cy="668.4" r="2.2" fill="#FF0030" stroke="none" stroke-width="0" shape-rendering="geometricPrecision"/>
<circle cx="468" cy="672.8" r="2.2" fill="#FF0030" stroke="none" stroke-width="0" shape-rendering="geometricPrecision"/>
<rect x="471.8" y="667.3" width="1.2" height="32.7" fill="#FF0030" />
<circle cx="472.4" cy="667.3" r="2.2" fill="#FF0030" stroke="none" stroke-width="0" shape-rendering="geometricPrecision"/>
<circle cx="472.4" cy="671.7" r="2.2" fill="#FF0030" stroke="none" stroke-width="0" shape-rendering="geometricPrecision"/>
<circle cx="472.4" cy="676.1" r="2.2" fill="#FF0030" stroke="none" stroke-width="0" shape-rendering="geometricPrecision"/>
<rect x="486.2" y="682" width="1.2" height="18" fill="#FF0030" />
<circle cx="486.8" cy="682" r="2.2" fill="#FF0030" stroke="none" stroke-width="0" shape-rendering="geometricPrecision"/>
<circle cx="486.8" cy="686.4" r="2.2" fill="#FF0030" stroke="none" stroke-width="0" shape-rendering="geometricPrecision"/>
<circle cx="486.8" cy="690.8" r="2.2" fill="#FF0030" stroke="none" stroke-width="0" shape-rendering="geometricPrecision"/>
<rect x="500.4" y="682" width="1.2" height="18" fill="#FF0030" />
<circle cx="501" cy="682" r="2.2" fill="#FF0030" stroke="none" stroke-width="0" shape-rendering="geometricPrecision"/>
<circle cx="501" cy="686.4" r="2.2" fill="#FF0030" stroke="none" stroke-width="0" shape-rendering="geometricPrecision"/>
<circle cx="501" cy="690.8" r="2.2" fill="#FF0030" stroke="none" stroke-width="0" shape-rendering="geometricPrecision"/>
<rect x="514.1" y="654" width="1.2" height="46" fill="#FF0030" />
<circle cx="514.7" cy="654" r="2.2" fill="#FF0030" stroke="none" stroke-width="0" shape-rendering="geometricPrecision"/>
<circle cx="514.7" cy="658.4" r="2.2" fill="#FF0030" stroke="none" stroke-width="0" shape-rendering="geometricPrecision"/>
<circle cx="514.7" cy="662.8" r="2.2" fill="#FF0030" stroke="none" stroke-width="0" shape-rendering="geometricPrecision"/>
<rect x="515.4" y="660" width="1.2" height="40" fill="#FF0030" />
<circle cx="516" cy="660" r="2.2" fill="#FF0030" stroke="none" stroke-width="0" shape-rendering="geometricPrecision"/>
<circle cx="516" cy="664.4" r="2.2" fill="#FF0030" stroke="none" stroke-width="0" shape-rendering="geometricPrecision"/>
<circle cx="516" cy="668.8" r="2.2" fill="#FF0030" stroke="none" stroke-width="0" shape-rendering="geometricPrecision"/>
<rect x="522.4" y="685" width="1.2" height="15" fill="#FF0030" />
<circle cx="523" cy="685" r="2.2" fill="#FF0030" stroke="none" stroke-width="0" shape-rendering="geometricPrecision"/>
<circle cx="523" cy="689.4" r="2.2" fill="#FF0030" stroke="none" stroke-width="0" shape-rendering="geometricPrecision"/>
<circle cx="523" cy="693.8" r="2.2" fill="#FF0030" stroke="none" stroke-width="0" shape-rendering="geometricPrecision"/>
<rect x="546.9" y="687" width="1.2" height="13" fill="#FF0030" />
<circle cx="547.5" cy="687" r="2.2" fill="#FF0030" stroke="none" stroke-width="0" shape-rendering="geometricPrecision"/>
<circle cx="547.5" cy="691.4" r="2.2" fill="#FF0030" stroke="none" stroke-width="0" shape-rendering="geometricPrecision"/>
<circle cx="547.5" cy="695.8" r="2.2" fill="#FF0030" stroke="none" stroke-width="0" shape-rendering="geometricPrecision"/>
<rect x="375.4" y="682" width="1.2" height="18" fill="#FF0030" />
<circle cx="376" cy="682" r="2.2" fill="#FF0030" stroke="none" stroke-width="0" shape-rendering="geometricPrecision"/>
<circle cx="376" cy="686.4" r="2.2" fill="#FF0030" stroke="none" stroke-width="0" shape-rendering="geometricPrecision"/>
<circle cx="376" cy="690.8" r="2.2" fill="#FF0030" stroke="none" stroke-width="0" shape-rendering="geometricPrecision"/>
<rect x="439.4" y="681" width="1.2" height="19" fill="#FF0030" />
<circle cx="440" cy="681" r="2.2" fill="#FF0030" stroke="none" stroke-width="0" shape-rendering="geometricPrecision"/>
<circle cx="440" cy="685.4" r="2.2" fill="#FF0030" stroke="none" stroke-width="0" shape-rendering="geometricPrecision"/>
<circle cx="440" cy="689.8" r="2.2" fill="#FF0030" stroke="none" stroke-width="0" shape-rendering="geometricPrecision"/>
<rect x="381.4" y="730" width="1.2" height="29.7" fill="#FF0030" />
<circle cx="382" cy="759.7" r="2.2" fill="#FF0030" stroke="none" stroke-width="0" shape-rendering="geometricPrecision"/>
<circle cx="382" cy="755.3" r="2.2" fill="#FF0030" stroke="none" stroke-width="0" shape-rendering="geometricPrecision"/>
<circle cx="382" cy="750.9" r="2.2" fill="#FF0030" stroke="none" stroke-width="0" shape-rendering="geometricPrecision"/>
<rect x="394.4" y="730" width="1.2" height="37" fill="#FF0030" />
<circle cx="395" cy="767" r="2.2" fill="#FF0030" stroke="none" stroke-width="0" shape-rendering="geometricPrecision"/>
<circle cx="395" cy="762.6" r="2.2" fill="#FF0030" stroke="none" stroke-width="0" shape-rendering="geometricPrecision"/>
<circle cx="395" cy="758.2" r="2.2" fill="#FF0030" stroke="none" stroke-width="0" shape-rendering="geometricPrecision"/>
<rect x="420.4" y="730" width="1.2" height="34" fill="#FF0030" />
<circle cx="421" cy="764" r="2.2" fill="#FF0030" stroke="none" stroke-width="0" shape-rendering="geometricPrecision"/>
<circle cx="421" cy="759.6" r="2.2" fill="#FF0030" stroke="none" stroke-width="0" shape-rendering="geometricPrecision"/>
<circle cx="421" cy="755.2" r="2.2" fill="#FF0030" stroke="none" stroke-width="0" shape-rendering="geometricPrecision"/>
<rect x="429.9" y="730" width="1.2" height="31" fill="#FF0030" />
<circle cx="430.5" cy="761" r="2.2" fill="#FF0030" stroke="none" stroke-width="0" shape-rendering="geometricPrecision"/>
<circle cx="430.5" cy="756.6" r="2.2" fill="#FF0030" stroke="none" stroke-width="0" shape-rendering="geometricPrecision"/>
<circle cx="430.5" cy="752.2" r="2.2" fill="#FF0030" stroke="none" stroke-width="0" shape-rendering="geometricPrecision"/>
<rect x="441" y="730" width="1.2" height="22.7" fill="#FF0030" />
<circle cx="441.6" cy="752.7" r="2.2" fill="#FF0030" stroke="none" stroke-width="0" shape-rendering="geometricPrecision"/>
<circle cx="441.6" cy="748.3" r="2.2" fill="#FF0030" stroke="none" stroke-width="0" shape-rendering="geometricPrecision"/>
<circle cx="441.6" cy="743.9" r="2.2" fill="#FF0030" stroke="none" stroke-width="0" shape-rendering="geometricPrecision"/>
<rect x="451.4" y="730" width="1.2" height="28.9" fill="#FF0030" />
<circle cx="452" cy="758.9" r="2.2" fill="#FF0030" stroke="none" stroke-width="0" shape-rendering="geometricPrecision"/>
<circle cx="452" cy="754.5" r="2.2" fill="#FF0030" stroke="none" stroke-width="0" shape-rendering="geometricPrecision"/>
<circle cx="452" cy="750.1" r="2.2" fill="#FF0030" stroke="none" stroke-width="0" shape-rendering="geometricPrecision"/>
<rect x="465.4" y="730" width="1.2" height="40" fill="#FF0030" />
<circle cx="466" cy="770" r="2.2" fill="#FF0030" stroke="none" stroke-width="0" shape-rendering="geometricPrecision"/>
<circle cx="466" cy="765.6" r="2.2" fill="#FF0030" stroke="none" stroke-width="0" shape-rendering="geometricPrecision"/>
<circle cx="466" cy="761.2" r="2.2" fill="#FF0030" stroke="none" stroke-width="0" shape-rendering="geometricPrecision"/>
<rect x="467.4" y="730" width="1.2" height="34" fill="#FF0030" />
<circle cx="468" cy="764" r="2.2" fill="#FF0030" stroke="none" stroke-width="0" shape-rendering="geometricPrecision"/>
<circle cx="468" cy="759.6" r="2.2" fill="#FF0030" stroke="none" stroke-width="0" shape-rendering="geometricPrecision"/>
<circle cx="468" cy="755.2" r="2.2" fill="#FF0030" stroke="none" stroke-width="0" shape-rendering="geometricPrecision"/>
<rect x="478.8" y="730" width="1.2" height="33" fill="#FF0030" />
<circle cx="479.4" cy="763" r="2.2" fill="#FF0030" stroke="none" stroke-width="0" shape-rendering="geometricPrecision"/>
<circle cx="479.4" cy="758.6" r="2.2" fill="#FF0030" stroke="none" stroke-width="0" shape-rendering="geometricPrecision"/>
<circle cx="479.4" cy="754.2" r="2.2" fill="#FF0030" stroke="none" stroke-width="0" shape-rendering="geometricPrecision"/>
<rect x="496.4" y="730" width="1.2" height="26.8" fill="#FF0030" />
<circle cx="497" cy="756.8" r="2.2" fill="#FF0030" stroke="none" stroke-width="0" shape-rendering="geometricPrecision"/>
<circle cx="497" cy="752.4" r="2.2" fill="#FF0030" stroke="none" stroke-width="0" shape-rendering="geometricPrecision"/>
<circle cx="497" cy="748" r="2.2" fill="#FF0030" stroke="none" stroke-width="0" shape-rendering="geometricPrecision"/>
<rect x="517" y="730" width="1.2" height="30" fill="#FF0030" />
<circle cx="517.6" cy="760" r="2.2" fill="#FF0030" stroke="none" stroke-width="0" shape-rendering="geometricPrecision"/>
<circle cx="517.6" cy="755.6" r="2.2" fill="#FF0030" stroke="none" stroke-width="0" shape-rendering="geometricPrecision"/>
<circle cx="517.6" cy="751.2" r="2.2" fill="#FF0030" stroke="none" stroke-width="0" shape-rendering="geometricPrecision"/>
<rect x="518.4" y="730" width="1.2" height="25" fill="#FF0030" />
<circle cx="519" cy="755" r="2.2" fill="#FF0030" stroke="none" stroke-width="0" shape-rendering="geometricPrecision"/>
<circle cx="519" cy="750.6" r="2.2" fill="#FF0030" stroke="none" stroke-width="0" shape-rendering="geometricPrecision"/>
<circle cx="519" cy="746.2" r="2.2" fill="#FF0030" stroke="none" stroke-width="0" shape-rendering="geometricPrecision"/>
<rect x="546.9" y="730" width="1.2" height="7.5" fill="#FF0030" />
<circle cx="547.5" cy="737.5" r="2.2" fill="#FF0030" stroke="none" stroke-width="0" shape-rendering="geometricPrecision"/>
<circle cx="547.5" cy="733.1" r="2.2" fill="#FF0030" stroke="none" stroke-width="0" shape-rendering="geometricPrecision"/>
<circle cx="547.5" cy="728.7" r="2.2" fill="#FF0030" stroke="none" stroke-width="0" shape-rendering="geometricPrecision"/>
<rect x="407.4" y="730" width="1.2" height="28" fill="#FF0030" />
<circle cx="408" cy="758" r="2.2" fill="#FF0030" stroke="none" stroke-width="0" shape-rendering="geometricPrecision"/>
<circle cx="408" cy="753.6" r="2.2" fill="#FF0030" stroke="none" stroke-width="0" shape-rendering="geometricPrecision"/>
<circle cx="408" cy="749.2" r="2.2" fill="#FF0030" stroke="none" stroke-width="0" shape-rendering="geometricPrecision"/>
<rect x="371.4" y="730" width="1.2" height="20" fill="#FF0030" />
<circle cx="372" cy="750" r="2.2" fill="#FF0030" stroke="none" stroke-width="0" shape-rendering="geometricPrecision"/>
<circle cx="372" cy="745.6" r="2.2" fill="#FF0030" stroke="none" stroke-width="0" shape-rendering="geometricPrecision"/>
<circle cx="372" cy="741.2" r="2.2" fill="#FF0030" stroke="none" stroke-width="0" shape-rendering="geometricPrecision"/>
<rect x="387.4" y="730" width="1.2" height="22" fill="#FF0030" />
<circle cx="388" cy="752" r="2.2" fill="#FF0030" stroke="none" stroke-width="0" shape-rendering="geometricPrecision"/>
<circle cx="388" cy="747.6" r="2.2" fill="#FF0030" stroke="none" stroke-width="0" shape-rendering="geometricPrecision"/>
<circle cx="388" cy="743.2" r="2.2" fill="#FF0030" stroke="none" stroke-width="0" shape-rendering="geometricPrecision"/>
<rect x="435.4" y="730" width="1.2" height="23" fill="#FF0030" />
<circle cx="436" cy="753" r="2.2" fill="#FF0030" stroke="none" stroke-width="0" shape-rendering="geometricPrecision"/>
<circle cx="436" cy="748.6" r="2.2" fill="#FF0030" stroke="none" stroke-width="0" shape-rendering="geometricPrecision"/>
<circle cx="436" cy="744.2" r="2.2" fill="#FF0030" stroke="none" stroke-width="0" shape-rendering="geometricPrecision"/>
<rect x="457.4" y="730" width="1.2" height="27" fill="#FF0030" />
<circle cx="458" cy="757" r="2.2" fill="#FF0030" stroke="none" stroke-width="0" shape-rendering="geometricPrecision"/>
<circle cx="458" cy="752.6" r="2.2" fill="#FF0030" stroke="none" stroke-width="0" shape-rendering="geometricPrecision"/>
<circle cx="458" cy="748.2" r="2.2" fill="#FF0030" stroke="none" stroke-width="0" shape-rendering="geometricPrecision"/>
<rect x="471.4" y="730" width="1.2" height="25" fill="#FF0030" />
<circle cx="472" cy="755" r="2.2" fill="#FF0030" stroke="none" stroke-width="0" shape-rendering="geometricPrecision"/>
<circle cx="472" cy="750.6" r="2.2" fill="#FF0030" stroke="none" stroke-width="0" shape-rendering="geometricPrecision"/>
<circle cx="472" cy="746.2" r="2.2" fill="#FF0030" stroke="none" stroke-width="0" shape-rendering="geometricPrecision"/>
<rect x="488.4" y="730" width="1.2" height="22" fill="#FF0030" />
<circle cx="489" cy="752" r="2.2" fill="#FF0030" stroke="none" stroke-width="0" shape-rendering="geometricPrecision"/>
<circle cx="489" cy="747.6" r="2.2" fill="#FF0030" stroke="none" stroke-width="0" shape-rendering="geometricPrecision"/>
<circle cx="489" cy="743.2" r="2.2" fill="#FF0030" stroke="none" stroke-width="0" shape-rendering="geometricPrecision"/>
<rect x="502.4" y="730" width="1.2" height="18" fill="#FF0030" />
<circle cx="503" cy="748" r="2.2" fill="#FF0030" stroke="none" stroke-width="0" shape-rendering="geometricPrecision"/>
<circle cx="503" cy="743.6" r="2.2" fill="#FF0030" stroke="none" stroke-width="0" shape-rendering="geometricPrecision"/>
<circle cx="503" cy="739.2" r="2.2" fill="#FF0030" stroke="none" stroke-width="0" shape-rendering="geometricPrecision"/>
<rect x="364.4" y="730" width="1.2" height="18" fill="#FF0030" />
<circle cx="365" cy="748" r="2.2" fill="#FF0030" stroke="none" stroke-width="0" shape-rendering="geometricPrecision"/>
<circle cx="365" cy="743.6" r="2.2" fill="#FF0030" stroke="none" stroke-width="0" shape-rendering="geometricPrecision"/>
<circle cx="365" cy="739.2" r="2.2" fill="#FF0030" stroke="none" stroke-width="0" shape-rendering="geometricPrecision"/>
<rect x="400.4" y="730" width="1.2" height="23" fill="#FF0030" />
<circle cx="401" cy="753" r="2.2" fill="#FF0030" stroke="none" stroke-width="0" shape-rendering="geometricPrecision"/>
<circle cx="401" cy="748.6" r="2.2" fill="#FF0030" stroke="none" stroke-width="0" shape-rendering="geometricPrecision"/>
<circle cx="401" cy="744.2" r="2.2" fill="#FF0030" stroke="none" stroke-width="0" shape-rendering="geometricPrecision"/>
<rect x="413.4" y="730" width="1.2" height="24" fill="#FF0030" />
<circle cx="414" cy="754" r="2.2" fill="#FF0030" stroke="none" stroke-width="0" shape-rendering="geometricPrecision"/>
<circle cx="414" cy="749.6" r="2.2" fill="#FF0030" stroke="none" stroke-width="0" shape-rendering="geometricPrecision"/>
<circle cx="414" cy="745.2" r="2.2" fill="#FF0030" stroke="none" stroke-width="0" shape-rendering="geometricPrecision"/>
<rect x="445.4" y="730" width="1.2" height="24" fill="#FF0030" />
<circle cx="446" cy="754" r="2.2" fill="#FF0030" stroke="none" stroke-width="0" shape-rendering="geometricPrecision"/>
<circle cx="446" cy="749.6" r="2.2" fill="#FF0030" stroke="none" stroke-width="0" shape-rendering="geometricPrecision"/>
<circle cx="446" cy="745.2" r="2.2" fill="#FF0030" stroke="none" stroke-width="0" shape-rendering="geometricPrecision"/>
<rect x="483.4" y="730" width="1.2" height="20" fill="#FF0030" />
<circle cx="484" cy="750" r="2.2" fill="#FF0030" stroke="none" stroke-width="0" shape-rendering="geometricPrecision"/>
<circle cx="484" cy="745.6" r="2.2" fill="#FF0030" stroke="none" stroke-width="0" shape-rendering="geometricPrecision"/>
<circle cx="484" cy="741.2" r="2.2" fill="#FF0030" stroke="none" stroke-width="0" shape-rendering="geometricPrecision"/>
<rect x="509.4" y="730" width="1.2" height="15" fill="#FF0030" />
<circle cx="510" cy="745" r="2.2" fill="#FF0030" stroke="none" stroke-width="0" shape-rendering="geometricPrecision"/>
<circle cx="510" cy="740.6" r="2.2" fill="#FF0030" stroke="none" stroke-width="0" shape-rendering="geometricPrecision"/>
<circle cx="510" cy="736.2" r="2.2" fill="#FF0030" stroke="none" stroke-width="0" shape-rendering="geometricPrecision"/>
<rect x="528.4" y="730" width="1.2" height="5" fill="#FF0030" />
<circle cx="529" cy="735" r="2.2" fill="#FF0030" stroke="none" stroke-width="0" shape-rendering="geometricPrecision"/>
<circle cx="529" cy="730.6" r="2.2" fill="#FF0030" stroke="none" stroke-width="0" shape-rendering="geometricPrecision"/>
<circle cx="529" cy="726.2" r="2.2" fill="#FF0030" stroke="none" stroke-width="0" shape-rendering="geometricPrecision"/>
<rect x="565.4" y="730" width="1.2" height="1" fill="#FF0030" />
<circle cx="566" cy="731" r="2.2" fill="#FF0030" stroke="none" stroke-width="0" shape-rendering="geometricPrecision"/>
<circle cx="566" cy="726.6" r="2.2" fill="#FF0030" stroke="none" stroke-width="0" shape-rendering="geometricPrecision"/>
<circle cx="566" cy="722.2" r="2.2" fill="#FF0030" stroke="none" stroke-width="0" shape-rendering="geometricPrecision"/>
<rect x="373.4" y="576" width="1.2" height="19" fill="#00FFC6" />
<circle cx="374" cy="576" r="2.2" fill="#00FFC6" stroke="none" stroke-width="0" shape-rendering="geometricPrecision"/>
<circle cx="374" cy="580.4" r="2.2" fill="#00FFC6" stroke="none" stroke-width="0" shape-rendering="geometricPrecision"/>
<circle cx="374" cy="584.8" r="2.2" fill="#00FFC6" stroke="none" stroke-width="0" shape-rendering="geometricPrecision"/>
<rect x="381.4" y="575" width="1.2" height="20" fill="#00FFC6" />
<circle cx="382" cy="575" r="2.2" fill="#00FFC6" stroke="none" stroke-width="0" shape-rendering="geometricPrecision"/>
<circle cx="382" cy="579.4" r="2.2" fill="#00FFC6" stroke="none" stroke-width="0" shape-rendering="geometricPrecision"/>
<circle cx="382" cy="583.8" r="2.2" fill="#00FFC6" stroke="none" stroke-width="0" shape-rendering="geometricPrecision"/>
<rect x="413.4" y="567" width="1.2" height="28" fill="#00FFC6" />
<circle cx="414" cy="567" r="2.2" fill="#00FFC6" stroke="none" stroke-width="0" shape-rendering="geometricPrecision"/>
<circle cx="414" cy="571.4" r="2.2" fill="#00FFC6" stroke="none" stroke-width="0" shape-rendering="geometricPrecision"/>
<circle cx="414" cy="575.8" r="2.2" fill="#00FFC6" stroke="none" stroke-width="0" shape-rendering="geometricPrecision"/>
<rect x="431.4" y="570" width="1.2" height="25" fill="#00FFC6" />
<circle cx="432" cy="570" r="2.2" fill="#00FFC6" stroke="none" stroke-width="0" shape-rendering="geometricPrecision"/>
<circle cx="432" cy="574.4" r="2.2" fill="#00FFC6" stroke="none" stroke-width="0" shape-rendering="geometricPrecision"/>
<circle cx="432" cy="578.8" r="2.2" fill="#00FFC6" stroke="none" stroke-width="0" shape-rendering="geometricPrecision"/>
<rect x="451.4" y="568" width="1.2" height="27" fill="#00FFC6" />
<circle cx="452" cy="568" r="2.2" fill="#00FFC6" stroke="none" stroke-width="0" shape-rendering="geometricPrecision"/>
<circle cx="452" cy="572.4" r="2.2" fill="#00FFC6" stroke="none" stroke-width="0" shape-rendering="geometricPrecision"/>
<circle cx="452" cy="576.8" r="2.2" fill="#00FFC6" stroke="none" stroke-width="0" shape-rendering="geometricPrecision"/>
<rect x="460.4" y="567" width="1.2" height="28" fill="#00FFC6" />
<circle cx="461" cy="567" r="2.2" fill="#00FFC6" stroke="none" stroke-width="0" shape-rendering="geometricPrecision"/>
<circle cx="461" cy="571.4" r="2.2" fill="#00FFC6" stroke="none" stroke-width="0" shape-rendering="geometricPrecision"/>
<circle cx="461" cy="575.8" r="2.2" fill="#00FFC6" stroke="none" stroke-width="0" shape-rendering="geometricPrecision"/>
<rect x="464.4" y="553.6" width="1.2" height="41.4" fill="#00FFC6" />
<circle cx="465" cy="553.6" r="2.2" fill="#00FFC6" stroke="none" stroke-width="0" shape-rendering="geometricPrecision"/>
<circle cx="465" cy="558" r="2.2" fill="#00FFC6" stroke="none" stroke-width="0" shape-rendering="geometricPrecision"/>
<circle cx="465" cy="562.4" r="2.2" fill="#00FFC6" stroke="none" stroke-width="0" shape-rendering="geometricPrecision"/>
<rect x="466.4" y="556" width="1.2" height="39" fill="#00FFC6" />
<circle cx="467" cy="556" r="2.2" fill="#00FFC6" stroke="none" stroke-width="0" shape-rendering="geometricPrecision"/>
<circle cx="467" cy="560.4" r="2.2" fill="#00FFC6" stroke="none" stroke-width="0" shape-rendering="geometricPrecision"/>
<circle cx="467" cy="564.8" r="2.2" fill="#00FFC6" stroke="none" stroke-width="0" shape-rendering="geometricPrecision"/>
<rect x="471.8" y="564" width="1.2" height="31" fill="#00FFC6" />
<circle cx="472.4" cy="564" r="2.2" fill="#00FFC6" stroke="none" stroke-width="0" shape-rendering="geometricPrecision"/>
<circle cx="472.4" cy="568.4" r="2.2" fill="#00FFC6" stroke="none" stroke-width="0" shape-rendering="geometricPrecision"/>
<circle cx="472.4" cy="572.8" r="2.2" fill="#00FFC6" stroke="none" stroke-width="0" shape-rendering="geometricPrecision"/>
<rect x="478.4" y="574" width="1.2" height="21" fill="#00FFC6" />
<circle cx="479" cy="574" r="2.2" fill="#00FFC6" stroke="none" stroke-width="0" shape-rendering="geometricPrecision"/>
<circle cx="479" cy="578.4" r="2.2" fill="#00FFC6" stroke="none" stroke-width="0" shape-rendering="geometricPrecision"/>
<circle cx="479" cy="582.8" r="2.2" fill="#00FFC6" stroke="none" stroke-width="0" shape-rendering="geometricPrecision"/>
<rect x="500.4" y="576" width="1.2" height="19" fill="#00FFC6" />
<circle cx="501" cy="576" r="2.2" fill="#00FFC6" stroke="none" stroke-width="0" shape-rendering="geometricPrecision"/>
<circle cx="501" cy="580.4" r="2.2" fill="#00FFC6" stroke="none" stroke-width="0" shape-rendering="geometricPrecision"/>
<circle cx="501" cy="584.8" r="2.2" fill="#00FFC6" stroke="none" stroke-width="0" shape-rendering="geometricPrecision"/>
<rect x="514.1" y="552.4" width="1.2" height="42.6" fill="#00FFC6" />
<circle cx="514.7" cy="552.4" r="2.2" fill="#00FFC6" stroke="none" stroke-width="0" shape-rendering="geometricPrecision"/>
<circle cx="514.7" cy="556.8" r="2.2" fill="#00FFC6" stroke="none" stroke-width="0" shape-rendering="geometricPrecision"/>
<circle cx="514.7" cy="561.2" r="2.2" fill="#00FFC6" stroke="none" stroke-width="0" shape-rendering="geometricPrecision"/>
<rect x="515.4" y="556" width="1.2" height="39" fill="#00FFC6" />
<circle cx="516" cy="556" r="2.2" fill="#00FFC6" stroke="none" stroke-width="0" shape-rendering="geometricPrecision"/>
<circle cx="516" cy="560.4" r="2.2" fill="#00FFC6" stroke="none" stroke-width="0" shape-rendering="geometricPrecision"/>
<circle cx="516" cy="564.8" r="2.2" fill="#00FFC6" stroke="none" stroke-width="0" shape-rendering="geometricPrecision"/>
<rect x="522.4" y="575" width="1.2" height="20" fill="#00FFC6" />
<circle cx="523" cy="575" r="2.2" fill="#00FFC6" stroke="none" stroke-width="0" shape-rendering="geometricPrecision"/>
<circle cx="523" cy="579.4" r="2.2" fill="#00FFC6" stroke="none" stroke-width="0" shape-rendering="geometricPrecision"/>
<circle cx="523" cy="583.8" r="2.2" fill="#00FFC6" stroke="none" stroke-width="0" shape-rendering="geometricPrecision"/>
<rect x="546.9" y="578" width="1.2" height="17" fill="#00FFC6" />
<circle cx="547.5" cy="578" r="2.2" fill="#00FFC6" stroke="none" stroke-width="0" shape-rendering="geometricPrecision"/>
<circle cx="547.5" cy="582.4" r="2.2" fill="#00FFC6" stroke="none" stroke-width="0" shape-rendering="geometricPrecision"/>
<circle cx="547.5" cy="586.8" r="2.2" fill="#00FFC6" stroke="none" stroke-width="0" shape-rendering="geometricPrecision"/>
<rect x="396.4" y="578" width="1.2" height="17" fill="#00FFC6" />
<circle cx="397" cy="578" r="2.2" fill="#00FFC6" stroke="none" stroke-width="0" shape-rendering="geometricPrecision"/>
<circle cx="397" cy="582.4" r="2.2" fill="#00FFC6" stroke="none" stroke-width="0" shape-rendering="geometricPrecision"/>
<circle cx="397" cy="586.8" r="2.2" fill="#00FFC6" stroke="none" stroke-width="0" shape-rendering="geometricPrecision"/>
<rect x="441.4" y="577" width="1.2" height="18" fill="#00FFC6" />
<circle cx="442" cy="577" r="2.2" fill="#00FFC6" stroke="none" stroke-width="0" shape-rendering="geometricPrecision"/>
<circle cx="442" cy="581.4" r="2.2" fill="#00FFC6" stroke="none" stroke-width="0" shape-rendering="geometricPrecision"/>
<circle cx="442" cy="585.8" r="2.2" fill="#00FFC6" stroke="none" stroke-width="0" shape-rendering="geometricPrecision"/>
<rect x="488.4" y="576" width="1.2" height="19" fill="#00FFC6" />
<circle cx="489" cy="576" r="2.2" fill="#00FFC6" stroke="none" stroke-width="0" shape-rendering="geometricPrecision"/>
<circle cx="489" cy="580.4" r="2.2" fill="#00FFC6" stroke="none" stroke-width="0" shape-rendering="geometricPrecision"/>
<circle cx="489" cy="584.8" r="2.2" fill="#00FFC6" stroke="none" stroke-width="0" shape-rendering="geometricPrecision"/>
<rect x="381.4" y="605" width="1.2" height="30.7" fill="#00FFC6" />
<circle cx="382" cy="635.7" r="2.2" fill="#00FFC6" stroke="none" stroke-width="0" shape-rendering="geometricPrecision"/>
<circle cx="382" cy="631.3" r="2.2" fill="#00FFC6" stroke="none" stroke-width="0" shape-rendering="geometricPrecision"/>
<circle cx="382" cy="626.9" r="2.2" fill="#00FFC6" stroke="none" stroke-width="0" shape-rendering="geometricPrecision"/>
<rect x="394.4" y="605" width="1.2" height="33.6" fill="#00FFC6" />
<circle cx="395" cy="638.6" r="2.2" fill="#00FFC6" stroke="none" stroke-width="0" shape-rendering="geometricPrecision"/>
<circle cx="395" cy="634.2" r="2.2" fill="#00FFC6" stroke="none" stroke-width="0" shape-rendering="geometricPrecision"/>
<circle cx="395" cy="629.8" r="2.2" fill="#00FFC6" stroke="none" stroke-width="0" shape-rendering="geometricPrecision"/>
<rect x="420.4" y="605" width="1.2" height="35" fill="#00FFC6" />
<circle cx="421" cy="640" r="2.2" fill="#00FFC6" stroke="none" stroke-width="0" shape-rendering="geometricPrecision"/>
<circle cx="421" cy="635.6" r="2.2" fill="#00FFC6" stroke="none" stroke-width="0" shape-rendering="geometricPrecision"/>
<circle cx="421" cy="631.2" r="2.2" fill="#00FFC6" stroke="none" stroke-width="0" shape-rendering="geometricPrecision"/>
<rect x="429.9" y="605" width="1.2" height="24.6" fill="#00FFC6" />
<circle cx="430.5" cy="629.6" r="2.2" fill="#00FFC6" stroke="none" stroke-width="0" shape-rendering="geometricPrecision"/>
<circle cx="430.5" cy="625.2" r="2.2" fill="#00FFC6" stroke="none" stroke-width="0" shape-rendering="geometricPrecision"/>
<circle cx="430.5" cy="620.8" r="2.2" fill="#00FFC6" stroke="none" stroke-width="0" shape-rendering="geometricPrecision"/>
<rect x="451.4" y="605" width="1.2" height="31.5" fill="#00FFC6" />
<circle cx="452" cy="636.5" r="2.2" fill="#00FFC6" stroke="none" stroke-width="0" shape-rendering="geometricPrecision"/>
<circle cx="452" cy="632.1" r="2.2" fill="#00FFC6" stroke="none" stroke-width="0" shape-rendering="geometricPrecision"/>
<circle cx="452" cy="627.7" r="2.2" fill="#00FFC6" stroke="none" stroke-width="0" shape-rendering="geometricPrecision"/>
<rect x="465.4" y="605" width="1.2" height="41" fill="#00FFC6" />
<circle cx="466" cy="646" r="2.2" fill="#00FFC6" stroke="none" stroke-width="0" shape-rendering="geometricPrecision"/>
<circle cx="466" cy="641.6" r="2.2" fill="#00FFC6" stroke="none" stroke-width="0" shape-rendering="geometricPrecision"/>
<circle cx="466" cy="637.2" r="2.2" fill="#00FFC6" stroke="none" stroke-width="0" shape-rendering="geometricPrecision"/>
<rect x="467.4" y="605" width="1.2" height="35" fill="#00FFC6" />
<circle cx="468" cy="640" r="2.2" fill="#00FFC6" stroke="none" stroke-width="0" shape-rendering="geometricPrecision"/>
<circle cx="468" cy="635.6" r="2.2" fill="#00FFC6" stroke="none" stroke-width="0" shape-rendering="geometricPrecision"/>
<circle cx="468" cy="631.2" r="2.2" fill="#00FFC6" stroke="none" stroke-width="0" shape-rendering="geometricPrecision"/>
<rect x="478.8" y="605" width="1.2" height="26.6" fill="#00FFC6" />
<circle cx="479.4" cy="631.6" r="2.2" fill="#00FFC6" stroke="none" stroke-width="0" shape-rendering="geometricPrecision"/>
<circle cx="479.4" cy="627.2" r="2.2" fill="#00FFC6" stroke="none" stroke-width="0" shape-rendering="geometricPrecision"/>
<circle cx="479.4" cy="622.8" r="2.2" fill="#00FFC6" stroke="none" stroke-width="0" shape-rendering="geometricPrecision"/>
<rect x="496.4" y="605" width="1.2" height="29.5" fill="#00FFC6" />
<circle cx="497" cy="634.5" r="2.2" fill="#00FFC6" stroke="none" stroke-width="0" shape-rendering="geometricPrecision"/>
<circle cx="497" cy="630.1" r="2.2" fill="#00FFC6" stroke="none" stroke-width="0" shape-rendering="geometricPrecision"/>
<circle cx="497" cy="625.7" r="2.2" fill="#00FFC6" stroke="none" stroke-width="0" shape-rendering="geometricPrecision"/>
<rect x="517" y="605" width="1.2" height="34.8" fill="#00FFC6" />
<circle cx="517.6" cy="639.8" r="2.2" fill="#00FFC6" stroke="none" stroke-width="0" shape-rendering="geometricPrecision"/>
<circle cx="517.6" cy="635.4" r="2.2" fill="#00FFC6" stroke="none" stroke-width="0" shape-rendering="geometricPrecision"/>
<circle cx="517.6" cy="631" r="2.2" fill="#00FFC6" stroke="none" stroke-width="0" shape-rendering="geometricPrecision"/>
<rect x="518.4" y="605" width="1.2" height="29" fill="#00FFC6" />
<circle cx="519" cy="634" r="2.2" fill="#00FFC6" stroke="none" stroke-width="0" shape-rendering="geometricPrecision"/>
<circle cx="519" cy="629.6" r="2.2" fill="#00FFC6" stroke="none" stroke-width="0" shape-rendering="geometricPrecision"/>
<circle cx="519" cy="625.2" r="2.2" fill="#00FFC6" stroke="none" stroke-width="0" shape-rendering="geometricPrecision"/>
<rect x="546.9" y="605" width="1.2" height="15.5" fill="#00FFC6" />
<circle cx="547.5" cy="620.5" r="2.2" fill="#00FFC6" stroke="none" stroke-width="0" shape-rendering="geometricPrecision"/>
<circle cx="547.5" cy="616.1" r="2.2" fill="#00FFC6" stroke="none" stroke-width="0" shape-rendering="geometricPrecision"/>
<circle cx="547.5" cy="611.7" r="2.2" fill="#00FFC6" stroke="none" stroke-width="0" shape-rendering="geometricPrecision"/>
<rect x="404.4" y="605" width="1.2" height="24" fill="#00FFC6" />
<circle cx="405" cy="629" r="2.2" fill="#00FFC6" stroke="none" stroke-width="0" shape-rendering="geometricPrecision"/>
<circle cx="405" cy="624.6" r="2.2" fill="#00FFC6" stroke="none" stroke-width="0" shape-rendering="geometricPrecision"/>
<circle cx="405" cy="620.2" r="2.2" fill="#00FFC6" stroke="none" stroke-width="0" shape-rendering="geometricPrecision"/>
<rect x="439.4" y="605" width="1.2" height="25" fill="#00FFC6" />
<circle cx="440" cy="630" r="2.2" fill="#00FFC6" stroke="none" stroke-width="0" shape-rendering="geometricPrecision"/>
<circle cx="440" cy="625.6" r="2.2" fill="#00FFC6" stroke="none" stroke-width="0" shape-rendering="geometricPrecision"/>
<circle cx="440" cy="621.2" r="2.2" fill="#00FFC6" stroke="none" stroke-width="0" shape-rendering="geometricPrecision"/>
<rect x="369.4" y="605" width="1.2" height="22" fill="#00FFC6" />
<circle cx="370" cy="627" r="2.2" fill="#00FFC6" stroke="none" stroke-width="0" shape-rendering="geometricPrecision"/>
<circle cx="370" cy="622.6" r="2.2" fill="#00FFC6" stroke="none" stroke-width="0" shape-rendering="geometricPrecision"/>
<circle cx="370" cy="618.2" r="2.2" fill="#00FFC6" stroke="none" stroke-width="0" shape-rendering="geometricPrecision"/>
<rect x="458.4" y="605" width="1.2" height="24" fill="#00FFC6" />
<circle cx="459" cy="629" r="2.2" fill="#00FFC6" stroke="none" stroke-width="0" shape-rendering="geometricPrecision"/>
<circle cx="459" cy="624.6" r="2.2" fill="#00FFC6" stroke="none" stroke-width="0" shape-rendering="geometricPrecision"/>
<circle cx="459" cy="620.2" r="2.2" fill="#00FFC6" stroke="none" stroke-width="0" shape-rendering="geometricPrecision"/>
<rect x="485.4" y="605" width="1.2" height="24" fill="#00FFC6" />
<circle cx="486" cy="629" r="2.2" fill="#00FFC6" stroke="none" stroke-width="0" shape-rendering="geometricPrecision"/>
<circle cx="486" cy="624.6" r="2.2" fill="#00FFC6" stroke="none" stroke-width="0" shape-rendering="geometricPrecision"/>
<circle cx="486" cy="620.2" r="2.2" fill="#00FFC6" stroke="none" stroke-width="0" shape-rendering="geometricPrecision"/>
</g>
<rect x="641" y="528" width="223" height="250" fill="#CDCDCD" />
<rect x="641" y="528" width="222" height="249" fill="#000" />
<g stroke="#4A4A00" stroke-width="1">
<line x1="648.5" y1="528" x2="648.5" y2="777"/>
<line x1="655.5" y1="528" x2="655.5" y2="777"/>
<line x1="663.5" y1="528" x2="663.5" y2="777"/>
<line x1="670.5" y1="528" x2="670.5" y2="777"/>
<line x1="677.5" y1="528" x2="677.5" y2="777"/>
<line x1="684.5" y1="528" x2="684.5" y2="777"/>
<line x1="692.5" y1="528" x2="692.5" y2="777"/>
<line x1="706.5" y1="528" x2="706.5" y2="777"/>
<line x1="713.5" y1="528" x2="713.5" y2="777"/>
<line x1="720.5" y1="528" x2="720.5" y2="777"/>
<line x1="728.5" y1="528" x2="728.5" y2="777"/>
<line x1="735.5" y1="528" x2="735.5" y2="777"/>
<line x1="742.5" y1="528" x2="742.5" y2="777"/>
<line x1="749.5" y1="528" x2="749.5" y2="777"/>
<line x1="764.5" y1="528" x2="764.5" y2="777"/>
<line x1="771.5" y1="528" x2="771.5" y2="777"/>
<line x1="778.5" y1="528" x2="778.5" y2="777"/>
<line x1="786.5" y1="528" x2="786.5" y2="777"/>
<line x1="793.5" y1="528" x2="793.5" y2="777"/>
<line x1="800.5" y1="528" x2="800.5" y2="777"/>
<line x1="807.5" y1="528" x2="807.5" y2="777"/>
<line x1="822.5" y1="528" x2="822.5" y2="777"/>
<line x1="829.5" y1="528" x2="829.5" y2="777"/>
<line x1="836.5" y1="528" x2="836.5" y2="777"/>
<line x1="843.5" y1="528" x2="843.5" y2="777"/>
<line x1="851.5" y1="528" x2="851.5" y2="777"/>
<line x1="858.5" y1="528" x2="858.5" y2="777"/>
<line x1="641" y1="534.5" x2="863" y2="534.5"/>
<line x1="641" y1="540.5" x2="863" y2="540.5"/>
<line x1="641" y1="547.5" x2="863" y2="547.5"/>
<line x1="641" y1="553.5" x2="863" y2="553.5"/>
<line x1="641" y1="559.5" x2="863" y2="559.5"/>
<line x1="641" y1="565.5" x2="863" y2="565.5"/>
<line x1="641" y1="572.5" x2="863" y2="572.5"/>
<line x1="641" y1="578.5" x2="863" y2="578.5"/>
<line x1="641" y1="584.5" x2="863" y2="584.5"/>
<line x1="641" y1="590.5" x2="863" y2="590.5"/>
<line x1="641" y1="596.5" x2="863" y2="596.5"/>
<line x1="641" y1="603.5" x2="863" y2="603.5"/>
<line x1="641" y1="609.5" x2="863" y2="609.5"/>
<line x1="641" y1="615.5" x2="863" y2="615.5"/>
<line x1="641" y1="621.5" x2="863" y2="621.5"/>
<line x1="641" y1="628.5" x2="863" y2="628.5"/>
<line x1="641" y1="634.5" x2="863" y2="634.5"/>
<line x1="641" y1="640.5" x2="863" y2="640.5"/>
<line x1="641" y1="646.5" x2="863" y2="646.5"/>
<line x1="641" y1="659.5" x2="863" y2="659.5"/>
<line x1="641" y1="665.5" x2="863" y2="665.5"/>
<line x1="641" y1="671.5" x2="863" y2="671.5"/>
<line x1="641" y1="677.5" x2="863" y2="677.5"/>
<line x1="641" y1="684.5" x2="863" y2="684.5"/>
<line x1="641" y1="690.5" x2="863" y2="690.5"/>
<line x1="641" y1="696.5" x2="863" y2="696.5"/>
<line x1="641" y1="702.5" x2="863" y2="702.5"/>
<line x1="641" y1="709.5" x2="863" y2="709.5"/>
<line x1="641" y1="715.5" x2="863" y2="715.5"/>
<line x1="641" y1="721.5" x2="863" y2="721.5"/>
<line x1="641" y1="727.5" x2="863" y2="727.5"/>
<line x1="641" y1="733.5" x2="863" y2="733.5"/>
<line x1="641" y1="740.5" x2="863" y2="740.5"/>
<line x1="641" y1="746.5" x2="863" y2="746.5"/>
<line x1="641" y1="752.5" x2="863" y2="752.5"/>
<line x1="641" y1="758.5" x2="863" y2="758.5"/>
<line x1="641" y1="765.5" x2="863" y2="765.5"/>
<line x1="641" y1="771.5" x2="863" y2="771.5"/>
</g>
<g stroke="#9A9A00" stroke-width="1">
<line x1="641.5" y1="528" x2="641.5" y2="777" stroke="#202000"/>
<line x1="699.5" y1="528" x2="699.5" y2="777"/>
<line x1="757.5" y1="528" x2="757.5" y2="777"/>
<line x1="814.5" y1="528" x2="814.5" y2="777"/>
<line x1="641" y1="652.5" x2="863" y2="652.5"/>
</g>
<text x="764.7" y="522.2" font-size="11" text-anchor="middle" stroke="#000" stroke-width="0.22" textLength="62" lengthAdjust="spacingAndGlyphs" >Gamma Count</text>
<text transform="translate(633.5 533.2) scale(0.915 1)" font-size="11" text-anchor="end" stroke="#000" stroke-width="0.22" >2</text>
<line x1="635" y1="530.5" x2="640" y2="530.5" stroke="#202020" stroke-width="1" shape-rendering="geometricPrecision"/>
<text transform="translate(633.5 657.7) scale(0.915 1)" font-size="11" text-anchor="end" stroke="#000" stroke-width="0.22" >1</text>
<line x1="635" y1="654.5" x2="640" y2="654.5" stroke="#202020" stroke-width="1" shape-rendering="geometricPrecision"/>
<text transform="translate(633.5 782.2) scale(0.915 1)" font-size="11" text-anchor="end" stroke="#000" stroke-width="0.22" >0</text>
<line x1="635" y1="777.5" x2="640" y2="777.5" stroke="#202020" stroke-width="1" shape-rendering="geometricPrecision"/>
<line x1="642.5" y1="778.5" x2="642.5" y2="783.5" stroke="#202020" stroke-width="1" shape-rendering="geometricPrecision"/>
<text x="640.7" y="794" font-size="11" text-anchor="middle" stroke="#000" stroke-width="0.22" textLength="25.5" lengthAdjust="spacingAndGlyphs" >00:00</text>
<line x1="699.5" y1="778.5" x2="699.5" y2="783.5" stroke="#202020" stroke-width="1" shape-rendering="geometricPrecision"/>
<text x="698.5" y="794" font-size="11" text-anchor="middle" stroke="#000" stroke-width="0.22" textLength="25.5" lengthAdjust="spacingAndGlyphs" >02:00</text>
<line x1="757.5" y1="778.5" x2="757.5" y2="783.5" stroke="#202020" stroke-width="1" shape-rendering="geometricPrecision"/>
<text x="756.3" y="794" font-size="11" text-anchor="middle" stroke="#000" stroke-width="0.22" textLength="25.5" lengthAdjust="spacingAndGlyphs" >04:00</text>
<line x1="815.5" y1="778.5" x2="815.5" y2="783.5" stroke="#202020" stroke-width="1" shape-rendering="geometricPrecision"/>
<text x="814.1" y="794" font-size="11" text-anchor="middle" stroke="#000" stroke-width="0.22" textLength="25.5" lengthAdjust="spacingAndGlyphs" >06:00</text>
<line x1="862.5" y1="778.5" x2="862.5" y2="783.5" stroke="#202020" stroke-width="1" shape-rendering="geometricPrecision"/>
<text x="862.2" y="794" font-size="11" text-anchor="middle" stroke="#000" stroke-width="0.22" textLength="25.5" lengthAdjust="spacingAndGlyphs" >07:40</text>
<text x="751.6" y="809.2" font-size="11" text-anchor="middle" stroke="#000" stroke-width="0.22" textLength="21" lengthAdjust="spacingAndGlyphs" >Time</text>
<text transform="translate(623 650.2) rotate(-90) scale(0.9 1)" font-size="11" text-anchor="middle" stroke="#000" stroke-width="0.22" >Counts/sec</text>
<polygon points="641.0,670.3 642.0,670.7 643.0,670.3 644.0,671.2 645.0,671.2 646.0,670.5 647.0,671.1 648.0,671.3 649.0,670.7 650.0,670.8 651.0,671.0 652.0,671.5 653.0,670.7 654.0,671.4 655.0,671.3 656.0,671.2 657.0,671.4 658.0,671.8 659.0,671.0 660.0,671.8 661.0,671.3 662.0,671.8 663.0,671.9 664.0,671.2 665.0,672.0 666.0,672.2 667.0,671.4 668.0,671.1 669.0,671.3 670.0,672.4 671.0,671.2 672.0,672.4 673.0,671.5 674.0,672.2 675.0,671.5 676.0,671.6 677.0,672.3 678.0,671.6 679.0,672.0 680.0,672.7 681.0,672.5 682.0,672.7 683.0,672.9 684.0,671.8 685.0,672.1 686.0,672.8 687.0,672.7 688.0,672.0 689.0,672.6 690.0,672.3 691.0,672.6 692.0,672.2 693.0,672.2 694.0,673.4 695.0,672.6 696.0,673.3 697.0,672.4 698.0,672.9 699.0,672.5 700.0,672.9 701.0,672.7 702.0,673.3 703.0,672.7 704.0,673.5 705.0,673.2 706.0,672.8 707.0,673.1 708.0,673.3 709.0,673.9 710.0,673.2 711.0,673.1 712.0,674.1 713.0,674.0 714.0,673.9 715.0,673.4 716.0,673.3 717.0,673.4 718.0,673.2 719.0,673.2 720.0,673.8 721.0,673.8 722.0,674.0 723.0,673.8 724.0,673.4 725.0,674.3 726.0,674.3 727.0,674.2 728.0,674.2 729.0,674.4 730.0,674.8 731.0,674.7 732.0,674.6 733.0,674.3 734.0,674.2 735.0,674.4 736.0,675.1 737.0,674.4 738.0,674.4 739.0,674.5 740.0,674.2 741.0,675.3 742.0,674.1 743.0,674.9 744.0,675.3 745.0,674.6 746.0,675.0 747.0,674.8 748.0,674.7 749.0,674.7 750.0,674.6 751.0,675.5 752.0,675.5 753.0,675.7 754.0,674.7 755.0,675.5 756.0,675.1 757.0,675.5 758.0,675.5 759.0,675.2 760.0,676.0 761.0,674.9 762.0,675.9 763.0,676.0 764.0,675.7 765.0,675.8 766.0,676.3 767.0,675.4 768.0,676.0 769.0,676.1 770.0,675.7 771.0,676.2 772.0,675.8 773.0,676.0 774.0,676.2 775.0,676.3 776.0,675.9 777.0,676.3 778.0,676.3 779.0,675.9 780.0,676.4 781.0,676.1 782.0,676.9 783.0,676.4 784.0,676.7 785.0,676.5 786.0,676.5 787.0,676.3 788.0,676.2 789.0,677.2 790.0,676.7 791.0,676.8 792.0,676.8 793.0,677.2 794.0,676.6 795.0,676.5 796.0,677.3 797.0,676.9 798.0,677.2 799.0,677.5 800.0,677.6 801.0,677.6 802.0,676.7 803.0,677.1 804.0,677.7 805.0,677.7 806.0,676.9 807.0,677.0 808.0,677.1 809.0,677.0 810.0,677.4 811.0,677.9 812.0,677.6 813.0,677.6 814.0,677.2 815.0,677.6 816.0,678.4 817.0,678.0 818.0,677.8 819.0,677.9 820.0,678.3 821.0,678.3 822.0,677.6 823.0,678.3 824.0,677.9 825.0,678.2 826.0,677.9 827.0,678.1 828.0,678.1 829.0,678.2 830.0,677.8 831.0,678.0 832.0,678.5 833.0,677.9 834.0,678.1 835.0,678.8 836.0,678.3 837.0,678.4 838.0,678.4 839.0,679.1 840.0,678.3 841.0,679.0 842.0,679.3 843.0,678.5 844.0,678.8 845.0,679.3 846.0,679.1 847.0,678.9 848.0,678.5 849.0,679.1 850.0,679.0 851.0,679.5 852.0,679.0 853.0,679.2 854.0,679.5 855.0,679.7 856.0,679.2 857.0,679.3 858.0,679.6 859.0,680.0 860.0,679.2 861.0,680.2 862.0,679.9 863.0,679.5 863.0,714.7 862.0,714.2 861.0,714.6 860.0,714.1 859.0,714.7 858.0,714.6 857.0,714.1 856.0,715.1 855.0,714.0 854.0,714.1 853.0,714.5 852.0,715.0 851.0,715.0 850.0,714.2 849.0,715.1 848.0,714.0 847.0,714.0 846.0,714.6 845.0,714.2 844.0,714.2 843.0,714.5 842.0,713.8 841.0,714.5 840.0,713.7 839.0,714.3 838.0,713.6 837.0,714.2 836.0,714.4 835.0,714.6 834.0,714.3 833.0,713.6 832.0,714.3 831.0,713.5 830.0,713.9 829.0,714.5 828.0,713.7 827.0,714.4 826.0,713.7 825.0,714.0 824.0,713.8 823.0,713.4 822.0,714.2 821.0,714.6 820.0,713.7 819.0,714.6 818.0,714.1 817.0,713.3 816.0,714.5 815.0,713.5 814.0,714.3 813.0,714.4 812.0,713.5 811.0,713.3 810.0,713.2 809.0,713.8 808.0,713.9 807.0,714.3 806.0,713.7 805.0,713.1 804.0,714.3 803.0,713.7 802.0,714.0 801.0,713.4 800.0,713.3 799.0,713.6 798.0,714.2 797.0,714.3 796.0,714.1 795.0,713.0 794.0,714.0 793.0,713.0 792.0,713.7 791.0,713.4 790.0,713.8 789.0,713.4 788.0,712.8 787.0,713.5 786.0,713.0 785.0,713.6 784.0,713.2 783.0,712.7 782.0,713.2 781.0,714.0 780.0,713.7 779.0,712.8 778.0,713.7 777.0,713.0 776.0,713.8 775.0,712.7 774.0,713.3 773.0,712.9 772.0,713.3 771.0,712.8 770.0,712.8 769.0,713.6 768.0,712.4 767.0,713.3 766.0,712.4 765.0,712.5 764.0,713.3 763.0,713.6 762.0,712.6 761.0,713.2 760.0,712.8 759.0,713.6 758.0,713.3 757.0,712.3 756.0,712.3 755.0,712.4 754.0,713.4 753.0,712.3 752.0,713.3 751.0,712.4 750.0,712.5 749.0,713.0 748.0,713.0 747.0,712.7 746.0,713.1 745.0,712.8 744.0,713.3 743.0,712.2 742.0,712.8 741.0,712.0 740.0,713.1 739.0,711.9 738.0,712.8 737.0,712.5 736.0,711.9 735.0,713.0 734.0,712.4 733.0,713.1 732.0,712.4 731.0,712.6 730.0,712.8 729.0,712.7 728.0,712.1 727.0,712.8 726.0,712.0 725.0,712.1 724.0,712.4 723.0,712.2 722.0,712.3 721.0,712.0 720.0,711.6 719.0,712.3 718.0,712.8 717.0,711.8 716.0,712.6 715.0,712.0 714.0,712.3 713.0,712.1 712.0,712.1 711.0,711.9 710.0,712.1 709.0,711.4 708.0,711.6 707.0,711.7 706.0,712.5 705.0,712.4 704.0,712.5 703.0,711.7 702.0,711.3 701.0,711.8 700.0,711.9 699.0,712.0 698.0,712.4 697.0,711.5 696.0,711.6 695.0,711.5 694.0,711.5 693.0,712.5 692.0,711.1 691.0,711.8 690.0,711.5 689.0,711.2 688.0,712.2 687.0,712.1 686.0,712.4 685.0,711.8 684.0,711.5 683.0,711.9 682.0,711.0 681.0,711.6 680.0,711.9 679.0,711.8 678.0,710.9 677.0,711.6 676.0,711.9 675.0,710.9 674.0,710.9 673.0,711.9 672.0,710.8 671.0,711.0 670.0,710.9 669.0,711.8 668.0,711.7 667.0,711.4 666.0,711.6 665.0,710.7 664.0,711.2 663.0,711.6 662.0,711.5 661.0,711.7 660.0,711.2 659.0,711.2 658.0,711.1 657.0,711.7 656.0,711.1 655.0,711.0 654.0,711.6 653.0,711.1 652.0,711.0 651.0,711.2 650.0,710.4 649.0,711.4 648.0,711.6 647.0,711.0 646.0,711.0 645.0,710.8 644.0,711.3 643.0,710.3 642.0,710.7 641.0,711.1" fill="#FF0030" />
<rect x="641" y="570" width="2" height="105" fill="#FF0030" />
<circle cx="642.5" cy="570.5" r="1.8" fill="#FF0030" stroke="none" stroke-width="0" shape-rendering="geometricPrecision"/>
<circle cx="862" cy="720.5" r="2" fill="#FF0030" stroke="none" stroke-width="0" shape-rendering="geometricPrecision"/>
<rect x="11" y="823" width="48" height="6" fill="#8C8C8C" />
<rect x="12" y="824" width="47" height="5" fill="#D4D4D4" />
<text x="63" y="831.7" font-size="11" stroke="#000" stroke-width="0.22" textLength="66.5" lengthAdjust="spacingAndGlyphs" >Cycle time [ms]</text>
<rect x="171" y="821" width="190" height="8" fill="#8C8C8C" />
<rect x="172" y="822" width="189" height="7" fill="#E6E6E6" />
<rect x="172" y="822" width="188" height="7" fill="#CFCFCF" />
<rect x="398.5" y="816.5" width="219" height="13" fill="#E6DCC6" />
<rect x="399.5" y="817.5" width="218" height="12" fill="#B4B4B4" />
<rect x="401.5" y="819" width="213" height="10" fill="#80F572" />
<text x="508" y="840.7" font-size="21" text-anchor="middle" stroke="#000" stroke-width="0.22" textLength="103" lengthAdjust="spacingAndGlyphs" >System OK</text>
<rect x="760" y="825" width="119" height="4" fill="#F4F2EC" />
<rect x="0" y="828.5" width="47" height="3" fill="#5C5C5C" />
<rect x="47" y="828.5" width="849" height="3" fill="#F2F1EE" />
</svg></body></html>
